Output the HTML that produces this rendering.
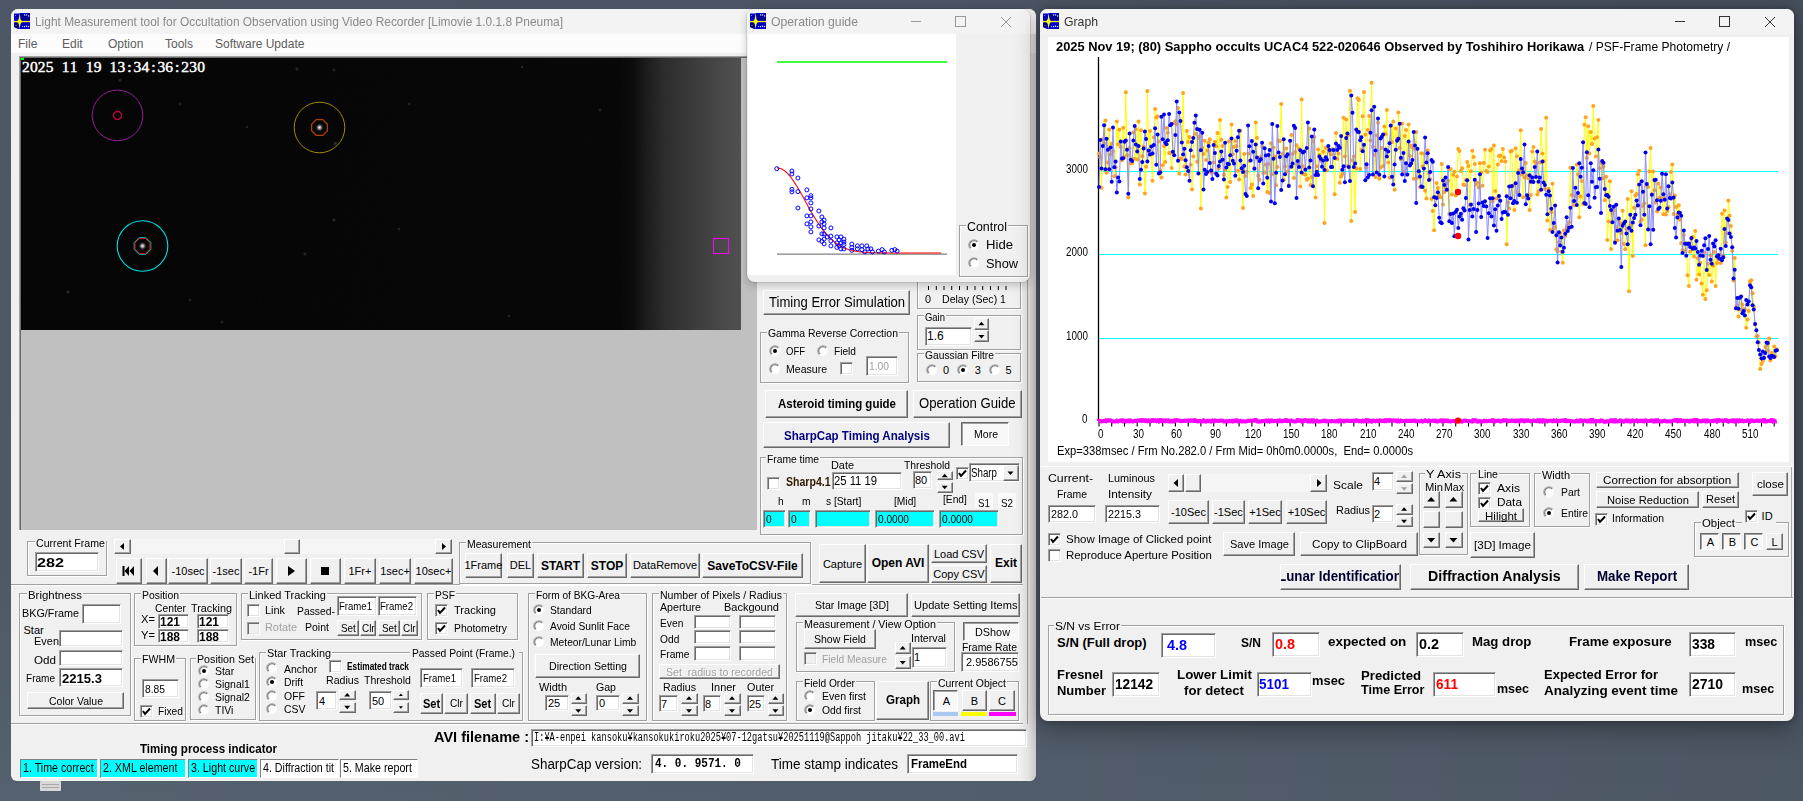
<!DOCTYPE html><html><head><meta charset="utf-8"><style>
html,body{margin:0;padding:0;}
body{width:1803px;height:801px;overflow:hidden;position:relative;background:#4a5562;font-family:"Liberation Sans",sans-serif;}
.t{position:absolute;white-space:nowrap;line-height:1;}
.b{position:absolute;white-space:nowrap;text-align:center;overflow:hidden;border-top:1px solid #fff;border-left:1px solid #fff;border-right:1px solid #696969;border-bottom:1px solid #696969;box-shadow:inset -1px -1px 0 #a0a0a0;}
.e{position:absolute;white-space:nowrap;overflow:hidden;border-top:1px solid #a0a0a0;border-left:1px solid #a0a0a0;border-right:1px solid #fff;border-bottom:1px solid #fff;box-shadow:inset 1px 1px 0 #696969;}
.g{position:absolute;border:1px solid #a0a0a0;box-shadow:1px 1px 0 #fff, inset 1px 1px 0 #fff;}
.r{position:absolute;width:12px;height:12px;border-radius:6px;background:#fff;box-shadow:inset 1px 1px 0 #a0a0a0, inset -1px -1px 0 #fff;border:0;}
.c{position:absolute;width:11px;height:11px;background:#fff;border-top:1px solid #a0a0a0;border-left:1px solid #a0a0a0;border-right:1px solid #fff;border-bottom:1px solid #fff;box-shadow:inset 1px 1px 0 #696969;}
</style></head><body>
<div style="position:absolute;left:0px;top:0px;width:1803px;height:801px;background:linear-gradient(90deg,rgba(255,255,255,0.02) 0%,rgba(0,0,0,0) 50%,rgba(0,0,0,0.07) 100%),linear-gradient(180deg,#4a5462 0%,#4b5563 70%,#535e6c 100%);"></div>
<div style="position:absolute;left:11px;top:9px;width:1025px;height:772px;background:#f0f0f0;border-radius:8px 8px 6px 6px;overflow:hidden;">
</div>
<div style="position:absolute;left:11px;top:9px;width:1025px;height:25px;background:#f3f3f3;border-radius:7px 7px 0 0;"></div>
<svg style="position:absolute;left:14px;top:13px" width="16" height="16" viewBox="0 0 16 16"><path d="M0 0.5 H5 L6 0 H16 V16 H4 L0 14 Z" fill="#0000c8"/><path d="M8 1 H16 V7 H8 Z" fill="#000090"/><path d="M0 10 H4 V15 L0 14 Z" fill="#000070"/><path d="M5.6 0 L6.4 5.8 Q6.8 7.8 9.2 8.5 Q6.8 9.2 6.4 11.2 L5.6 16 L4.8 11.2 Q4.4 9.2 2.0 8.5 Q4.4 7.8 4.8 5.8 Z" fill="#ffff00"/><circle cx="1.5" cy="2.5" r="0.5" fill="#aac"/><circle cx="2" cy="12.5" r="0.5" fill="#aac"/><circle cx="8.6" cy="13.6" r="0.6" fill="#ccf"/><rect x="0" y="7.9" width="16" height="1.3" fill="#ffff00"/><circle cx="10.6" cy="1.9" r="0.7" fill="#fff"/><circle cx="12.6" cy="1.9" r="0.7" fill="#fff"/><circle cx="14.6" cy="2.9" r="0.7" fill="#fff"/><circle cx="10.6" cy="13.6" r="0.7" fill="#fff"/><circle cx="12.6" cy="13.2" r="0.7" fill="#fff"/><circle cx="14.6" cy="13.6" r="0.7" fill="#fff"/></svg>
<div class="t" style="left:35.0px;top:15.0px;font-size:13px;color:#8a8a8a;font-family:'Liberation Sans',sans-serif;transform:scaleX(0.916);transform-origin:0 0;">Light Measurement tool for Occultation Observation using Video Recorder [Limovie 1.0.1.8 Pneuma]</div>
<div style="position:absolute;left:11px;top:34px;width:1025px;height:19px;background:#fcfcfc;"></div>
<div class="t" style="left:18.0px;top:38.0px;font-size:12px;color:#5c5c5c;font-family:'Liberation Sans',sans-serif;">File</div>
<div class="t" style="left:62.0px;top:38.0px;font-size:12px;color:#5c5c5c;font-family:'Liberation Sans',sans-serif;">Edit</div>
<div class="t" style="left:108.0px;top:38.0px;font-size:12px;color:#5c5c5c;font-family:'Liberation Sans',sans-serif;">Option</div>
<div class="t" style="left:165.0px;top:38.0px;font-size:12px;color:#5c5c5c;font-family:'Liberation Sans',sans-serif;">Tools</div>
<div class="t" style="left:215.0px;top:38.0px;font-size:12px;color:#5c5c5c;font-family:'Liberation Sans',sans-serif;">Software Update</div>
<div style="position:absolute;left:19px;top:56px;width:737px;height:473px;background:#c0c0c0;border-top:1px solid #a0a0a0;border-left:1px solid #a0a0a0;box-shadow:inset 1px 1px 0 #696969;"></div>
<div style="position:absolute;left:21px;top:58px;width:720px;height:272px;background:linear-gradient(90deg,#050505 0%,#050505 84%,#3a3a3a 89%,#4e4e4e 95%,#555 100%);"></div>
<div style="position:absolute;left:1019px;top:34px;width:17px;height:746px;background:linear-gradient(90deg,rgba(0,0,0,0) 0%,rgba(0,0,0,0.05) 50%,rgba(0,0,0,0.16) 100%);"></div>
<div style="position:absolute;left:1027px;top:53px;width:1px;height:671px;background:#a0a0a0;"></div>
<div style="position:absolute;left:40px;top:781px;width:21px;height:10px;background:#d8d8d8;border-radius:1px;"></div>
<div style="position:absolute;left:42px;top:784px;width:17px;height:1px;background:#a8a8a8;"></div>
<div style="position:absolute;left:42px;top:787px;width:17px;height:1px;background:#a8a8a8;"></div>
<div style="position:absolute;left:11px;top:584px;width:1012px;height:1px;background:#a0a0a0;box-shadow:0 1px 0 #fff;"></div>
<div style="position:absolute;left:11px;top:723px;width:1012px;height:1px;background:#a0a0a0;box-shadow:0 1px 0 #fff;"></div>
<div style="position:absolute;left:27px;top:541px;width:78px;height:33px;border:1px solid #a0a0a0;box-shadow:1px 1px 0 #fff, inset 1px 1px 0 #fff;"></div>
<div style="position:absolute;left:34.5px;top:540px;width:71.0px;height:3px;background:#f0f0f0;"></div>
<div class="t" style="left:35.5px;top:537.8px;font-size:11px;color:#000;font-family:'Liberation Sans',sans-serif;transform:scaleX(0.965);transform-origin:0 0;">Current Frame</div>
<div style="position:absolute;left:35px;top:552px;width:62px;height:18px;background:#fff;border-top:1px solid #a0a0a0;border-left:1px solid #a0a0a0;border-right:1px solid #fff;border-bottom:1px solid #fff;box-shadow:inset 1px 1px 0 #696969, inset -1px -1px 0 #e3e3e3;"></div>
<div class="t" style="left:37.0px;top:555.5px;font-size:13px;color:#000;font-family:'Liberation Sans',sans-serif;font-weight:bold;transform:scaleX(1.244);transform-origin:0 0;">282</div>
<div style="position:absolute;left:114px;top:539px;width:338px;height:15px;background:#f4f4f4;background:#f5f5f5;"></div>
<div style="position:absolute;left:114px;top:539px;width:15px;height:13px;background:#f0f0f0;border-top:1px solid #fff;border-left:1px solid #fff;border-right:1px solid #696969;border-bottom:1px solid #696969;box-shadow:inset -1px -1px 0 #a0a0a0;"></div>
<svg style="position:absolute;left:0;top:0;overflow:visible" width="1" height="1"><path d="M122.5 546.5 L122.5 546.5 L122.5 547.0 Z" fill="#000"/></svg>
<svg style="position:absolute;left:114px;top:539px" width="17" height="15"><path d="M6 7.5 L10 4 L10 11 Z" fill="#000"/></svg>
<div style="position:absolute;left:284px;top:539px;width:14px;height:13px;background:#f0f0f0;border-top:1px solid #fff;border-left:1px solid #fff;border-right:1px solid #696969;border-bottom:1px solid #696969;box-shadow:inset -1px -1px 0 #a0a0a0;"></div>
<div style="position:absolute;left:435px;top:539px;width:15px;height:13px;background:#f0f0f0;border-top:1px solid #fff;border-left:1px solid #fff;border-right:1px solid #696969;border-bottom:1px solid #696969;box-shadow:inset -1px -1px 0 #a0a0a0;"></div>
<svg style="position:absolute;left:435px;top:539px" width="17" height="15"><path d="M11 7.5 L7 4 L7 11 Z" fill="#000"/></svg>
<div style="position:absolute;left:116px;top:558px;width:24px;height:24px;background:#f0f0f0;border-top:1px solid #fff;border-left:1px solid #fff;border-right:1px solid #696969;border-bottom:1px solid #696969;box-shadow:inset -1px -1px 0 #a0a0a0;"></div>
<div style="position:absolute;left:146px;top:558px;width:19px;height:24px;background:#f0f0f0;border-top:1px solid #fff;border-left:1px solid #fff;border-right:1px solid #696969;border-bottom:1px solid #696969;box-shadow:inset -1px -1px 0 #a0a0a0;"></div>
<div style="position:absolute;left:168px;top:558px;width:38px;height:24px;background:#f0f0f0;border-top:1px solid #fff;border-left:1px solid #fff;border-right:1px solid #696969;border-bottom:1px solid #696969;box-shadow:inset -1px -1px 0 #a0a0a0;"></div>
<div class="t" style="left:171.5px;top:566.0px;font-size:11px;color:#000;font-family:'Liberation Sans',sans-serif;">-10sec</div>
<div style="position:absolute;left:210px;top:558px;width:30px;height:24px;background:#f0f0f0;border-top:1px solid #fff;border-left:1px solid #fff;border-right:1px solid #696969;border-bottom:1px solid #696969;box-shadow:inset -1px -1px 0 #a0a0a0;"></div>
<div class="t" style="left:212.5px;top:566.0px;font-size:11px;color:#000;font-family:'Liberation Sans',sans-serif;">-1sec</div>
<div style="position:absolute;left:244px;top:558px;width:27px;height:24px;background:#f0f0f0;border-top:1px solid #fff;border-left:1px solid #fff;border-right:1px solid #696969;border-bottom:1px solid #696969;box-shadow:inset -1px -1px 0 #a0a0a0;"></div>
<div class="t" style="left:248.4px;top:566.0px;font-size:11px;color:#000;font-family:'Liberation Sans',sans-serif;">-1Fr</div>
<div style="position:absolute;left:276px;top:558px;width:29px;height:24px;background:#f0f0f0;border-top:1px solid #fff;border-left:1px solid #fff;border-right:1px solid #696969;border-bottom:1px solid #696969;box-shadow:inset -1px -1px 0 #a0a0a0;"></div>
<div style="position:absolute;left:310px;top:558px;width:29px;height:24px;background:#f0f0f0;border-top:1px solid #fff;border-left:1px solid #fff;border-right:1px solid #696969;border-bottom:1px solid #696969;box-shadow:inset -1px -1px 0 #a0a0a0;"></div>
<div style="position:absolute;left:344px;top:558px;width:30px;height:24px;background:#f0f0f0;border-top:1px solid #fff;border-left:1px solid #fff;border-right:1px solid #696969;border-bottom:1px solid #696969;box-shadow:inset -1px -1px 0 #a0a0a0;"></div>
<div class="t" style="left:348.5px;top:566.0px;font-size:11px;color:#000;font-family:'Liberation Sans',sans-serif;">1Fr+</div>
<div style="position:absolute;left:379px;top:558px;width:30px;height:24px;background:#f0f0f0;border-top:1px solid #fff;border-left:1px solid #fff;border-right:1px solid #696969;border-bottom:1px solid #696969;box-shadow:inset -1px -1px 0 #a0a0a0;"></div>
<div class="t" style="left:380.2px;top:566.0px;font-size:11px;color:#000;font-family:'Liberation Sans',sans-serif;">1sec+</div>
<div style="position:absolute;left:414px;top:558px;width:37px;height:24px;background:#f0f0f0;border-top:1px solid #fff;border-left:1px solid #fff;border-right:1px solid #696969;border-bottom:1px solid #696969;box-shadow:inset -1px -1px 0 #a0a0a0;"></div>
<div class="t" style="left:415.6px;top:566.0px;font-size:11px;color:#000;font-family:'Liberation Sans',sans-serif;">10sec+</div>
<svg style="position:absolute;left:116px;top:558px" width="26" height="26"><rect x="6.5" y="8" width="2" height="10" fill="#000"/><path d="M13 8 L8.5 13 L13 18 Z M18 8 L13.5 13 L18 18 Z" fill="#000"/></svg>
<svg style="position:absolute;left:146px;top:558px" width="21" height="26"><path d="M12 8 L7 13 L12 18 Z" fill="#000"/></svg>
<svg style="position:absolute;left:276px;top:558px" width="31" height="26"><path d="M12 8 L19 13 L12 18 Z" fill="#000"/></svg>
<svg style="position:absolute;left:309px;top:558px" width="32" height="26"><rect x="12" y="9" width="8" height="8" fill="#000"/></svg>
<div style="position:absolute;left:459px;top:542px;width:350px;height:40px;border:1px solid #a0a0a0;box-shadow:1px 1px 0 #fff, inset 1px 1px 0 #fff;"></div>
<div style="position:absolute;left:466.0px;top:541px;width:66.0px;height:3px;background:#f0f0f0;"></div>
<div class="t" style="left:467.0px;top:539.0px;font-size:11px;color:#000;font-family:'Liberation Sans',sans-serif;transform:scaleX(0.951);transform-origin:0 0;">Measurement</div>
<div style="position:absolute;left:465px;top:553px;width:35px;height:23px;background:#f0f0f0;border-top:1px solid #fff;border-left:1px solid #fff;border-right:1px solid #696969;border-bottom:1px solid #696969;box-shadow:inset -1px -1px 0 #a0a0a0;"></div>
<div class="t" style="left:464.5px;top:560.0px;font-size:11px;color:#000;font-family:'Liberation Sans',sans-serif;">1Frame</div>
<div style="position:absolute;left:507px;top:553px;width:25px;height:23px;background:#f0f0f0;border-top:1px solid #fff;border-left:1px solid #fff;border-right:1px solid #696969;border-bottom:1px solid #696969;box-shadow:inset -1px -1px 0 #a0a0a0;"></div>
<div class="t" style="left:509.8px;top:560.0px;font-size:11px;color:#000;font-family:'Liberation Sans',sans-serif;">DEL</div>
<div style="position:absolute;left:537px;top:553px;width:45px;height:23px;background:#f0f0f0;border-top:1px solid #fff;border-left:1px solid #fff;border-right:1px solid #696969;border-bottom:1px solid #696969;box-shadow:inset -1px -1px 0 #a0a0a0;"></div>
<div class="t" style="left:540.9px;top:559.5px;font-size:12px;color:#000;font-family:'Liberation Sans',sans-serif;font-weight:bold;">START</div>
<div style="position:absolute;left:587px;top:553px;width:38px;height:23px;background:#f0f0f0;border-top:1px solid #fff;border-left:1px solid #fff;border-right:1px solid #696969;border-bottom:1px solid #696969;box-shadow:inset -1px -1px 0 #a0a0a0;"></div>
<div class="t" style="left:590.8px;top:559.5px;font-size:12px;color:#000;font-family:'Liberation Sans',sans-serif;font-weight:bold;">STOP</div>
<div style="position:absolute;left:630px;top:553px;width:68px;height:23px;background:#f0f0f0;border-top:1px solid #fff;border-left:1px solid #fff;border-right:1px solid #696969;border-bottom:1px solid #696969;box-shadow:inset -1px -1px 0 #a0a0a0;"></div>
<div class="t" style="left:632.9px;top:560.0px;font-size:11px;color:#000;font-family:'Liberation Sans',sans-serif;">DataRemove</div>
<div style="position:absolute;left:702px;top:553px;width:99px;height:23px;background:#f0f0f0;border-top:1px solid #fff;border-left:1px solid #fff;border-right:1px solid #696969;border-bottom:1px solid #696969;box-shadow:inset -1px -1px 0 #a0a0a0;"></div>
<div class="t" style="left:707.3px;top:559.5px;font-size:12px;color:#000;font-family:'Liberation Sans',sans-serif;font-weight:bold;">SaveToCSV-File</div>
<div style="position:absolute;left:819px;top:544px;width:45px;height:37px;background:#f0f0f0;border-top:1px solid #fff;border-left:1px solid #fff;border-right:1px solid #696969;border-bottom:1px solid #696969;box-shadow:inset -1px -1px 0 #a0a0a0;"></div>
<div class="t" style="left:822.9px;top:558.5px;font-size:11px;color:#000;font-family:'Liberation Sans',sans-serif;">Capture</div>
<div style="position:absolute;left:867px;top:544px;width:60px;height:37px;background:#f0f0f0;border-top:1px solid #fff;border-left:1px solid #fff;border-right:1px solid #696969;border-bottom:1px solid #696969;box-shadow:inset -1px -1px 0 #a0a0a0;"></div>
<div class="t" style="left:871.7px;top:557.0px;font-size:12px;color:#000;font-family:'Liberation Sans',sans-serif;font-weight:bold;">Open AVI</div>
<div style="position:absolute;left:931px;top:544px;width:54px;height:17px;background:#f0f0f0;border-top:1px solid #fff;border-left:1px solid #fff;border-right:1px solid #696969;border-bottom:1px solid #696969;box-shadow:inset -1px -1px 0 #a0a0a0;"></div>
<div class="t" style="left:933.9px;top:548.5px;font-size:11px;color:#000;font-family:'Liberation Sans',sans-serif;">Load CSV</div>
<div style="position:absolute;left:931px;top:565px;width:54px;height:16px;background:#f0f0f0;border-top:1px solid #fff;border-left:1px solid #fff;border-right:1px solid #696969;border-bottom:1px solid #696969;box-shadow:inset -1px -1px 0 #a0a0a0;"></div>
<div class="t" style="left:933.3px;top:568.5px;font-size:11px;color:#000;font-family:'Liberation Sans',sans-serif;">Copy CSV</div>
<div style="position:absolute;left:990px;top:544px;width:30px;height:37px;background:#f0f0f0;border-top:1px solid #fff;border-left:1px solid #fff;border-right:1px solid #696969;border-bottom:1px solid #696969;box-shadow:inset -1px -1px 0 #a0a0a0;"></div>
<div class="t" style="left:995.0px;top:557.0px;font-size:12px;color:#000;font-family:'Liberation Sans',sans-serif;font-weight:bold;">Exit</div>
<div style="position:absolute;left:19px;top:593px;width:110px;height:121px;border:1px solid #a0a0a0;box-shadow:1px 1px 0 #fff, inset 1px 1px 0 #fff;"></div>
<div style="position:absolute;left:26.7px;top:592px;width:56.0px;height:3px;background:#f0f0f0;"></div>
<div class="t" style="left:27.7px;top:590.0px;font-size:11px;color:#000;font-family:'Liberation Sans',sans-serif;transform:scaleX(1.038);transform-origin:0 0;">Brightness</div>
<div class="t" style="left:21.5px;top:608.4px;font-size:11px;color:#000;font-family:'Liberation Sans',sans-serif;transform:scaleX(0.981);transform-origin:0 0;">BKG/Frame</div>
<div style="position:absolute;left:82px;top:604px;width:37px;height:18px;background:#fff;border-top:1px solid #a0a0a0;border-left:1px solid #a0a0a0;border-right:1px solid #fff;border-bottom:1px solid #fff;box-shadow:inset 1px 1px 0 #696969, inset -1px -1px 0 #e3e3e3;"></div>
<div class="t" style="left:23.5px;top:624.5px;font-size:11px;color:#000;font-family:'Liberation Sans',sans-serif;">Star</div>
<div class="t" style="left:33.6px;top:636.0px;font-size:11px;color:#000;font-family:'Liberation Sans',sans-serif;transform:scaleX(0.996);transform-origin:0 0;">Even</div>
<div style="position:absolute;left:59px;top:630px;width:62px;height:15px;background:#fff;border-top:1px solid #a0a0a0;border-left:1px solid #a0a0a0;border-right:1px solid #fff;border-bottom:1px solid #fff;box-shadow:inset 1px 1px 0 #696969, inset -1px -1px 0 #e3e3e3;"></div>
<div class="t" style="left:33.6px;top:654.8px;font-size:11px;color:#000;font-family:'Liberation Sans',sans-serif;transform:scaleX(1.057);transform-origin:0 0;">Odd</div>
<div style="position:absolute;left:59px;top:650px;width:62px;height:14px;background:#fff;border-top:1px solid #a0a0a0;border-left:1px solid #a0a0a0;border-right:1px solid #fff;border-bottom:1px solid #fff;box-shadow:inset 1px 1px 0 #696969, inset -1px -1px 0 #e3e3e3;"></div>
<div class="t" style="left:25.5px;top:673.3px;font-size:11px;color:#000;font-family:'Liberation Sans',sans-serif;transform:scaleX(0.912);transform-origin:0 0;">Frame</div>
<div style="position:absolute;left:59px;top:668px;width:62px;height:17px;background:#fff;border-top:1px solid #a0a0a0;border-left:1px solid #a0a0a0;border-right:1px solid #fff;border-bottom:1px solid #fff;box-shadow:inset 1px 1px 0 #696969, inset -1px -1px 0 #e3e3e3;"></div>
<div class="t" style="left:62.0px;top:672.5px;font-size:12px;color:#000;font-family:'Liberation Sans',sans-serif;font-weight:bold;transform:scaleX(1.090);transform-origin:0 0;">2215.3</div>
<div style="position:absolute;left:27px;top:692px;width:95px;height:15px;background:#f0f0f0;border-top:1px solid #fff;border-left:1px solid #fff;border-right:1px solid #696969;border-bottom:1px solid #696969;box-shadow:inset -1px -1px 0 #a0a0a0;"></div>
<div class="t" style="left:48.5px;top:695.5px;font-size:11px;color:#000;font-family:'Liberation Sans',sans-serif;transform:scaleX(0.953);transform-origin:0 0;">Color Value</div>
<div style="position:absolute;left:134px;top:593px;width:101px;height:51px;border:1px solid #a0a0a0;box-shadow:1px 1px 0 #fff, inset 1px 1px 0 #fff;"></div>
<div style="position:absolute;left:140.5px;top:592px;width:39.0px;height:3px;background:#f0f0f0;"></div>
<div class="t" style="left:141.5px;top:590.0px;font-size:11px;color:#000;font-family:'Liberation Sans',sans-serif;transform:scaleX(0.945);transform-origin:0 0;">Position</div>
<div class="t" style="left:155.3px;top:602.5px;font-size:11px;color:#000;font-family:'Liberation Sans',sans-serif;transform:scaleX(0.939);transform-origin:0 0;">Center</div>
<div class="t" style="left:191.2px;top:602.5px;font-size:11px;color:#000;font-family:'Liberation Sans',sans-serif;transform:scaleX(0.981);transform-origin:0 0;">Tracking</div>
<div class="t" style="left:140.6px;top:614.3px;font-size:11px;color:#000;font-family:'Liberation Sans',sans-serif;transform:scaleX(1.017);transform-origin:0 0;">X=</div>
<div class="t" style="left:140.6px;top:629.5px;font-size:11px;color:#000;font-family:'Liberation Sans',sans-serif;transform:scaleX(1.017);transform-origin:0 0;">Y=</div>
<div style="position:absolute;left:158px;top:614px;width:29px;height:13px;background:#fff;border-top:1px solid #a0a0a0;border-left:1px solid #a0a0a0;border-right:1px solid #fff;border-bottom:1px solid #fff;box-shadow:inset 1px 1px 0 #696969, inset -1px -1px 0 #e3e3e3;"></div>
<div class="t" style="left:160.0px;top:616.0px;font-size:12px;color:#000;font-family:'Liberation Sans',sans-serif;font-weight:bold;transform:scaleX(0.999);transform-origin:0 0;">121</div>
<div style="position:absolute;left:197px;top:614px;width:30px;height:13px;background:#fff;border-top:1px solid #a0a0a0;border-left:1px solid #a0a0a0;border-right:1px solid #fff;border-bottom:1px solid #fff;box-shadow:inset 1px 1px 0 #696969, inset -1px -1px 0 #e3e3e3;"></div>
<div class="t" style="left:199.0px;top:616.0px;font-size:12px;color:#000;font-family:'Liberation Sans',sans-serif;font-weight:bold;transform:scaleX(0.999);transform-origin:0 0;">121</div>
<div style="position:absolute;left:158px;top:629px;width:29px;height:12px;background:#fff;border-top:1px solid #a0a0a0;border-left:1px solid #a0a0a0;border-right:1px solid #fff;border-bottom:1px solid #fff;box-shadow:inset 1px 1px 0 #696969, inset -1px -1px 0 #e3e3e3;"></div>
<div class="t" style="left:160.0px;top:630.5px;font-size:12px;color:#000;font-family:'Liberation Sans',sans-serif;font-weight:bold;transform:scaleX(0.999);transform-origin:0 0;">188</div>
<div style="position:absolute;left:197px;top:629px;width:30px;height:12px;background:#fff;border-top:1px solid #a0a0a0;border-left:1px solid #a0a0a0;border-right:1px solid #fff;border-bottom:1px solid #fff;box-shadow:inset 1px 1px 0 #696969, inset -1px -1px 0 #e3e3e3;"></div>
<div class="t" style="left:199.0px;top:630.5px;font-size:12px;color:#000;font-family:'Liberation Sans',sans-serif;font-weight:bold;transform:scaleX(0.999);transform-origin:0 0;">188</div>
<div style="position:absolute;left:134px;top:658px;width:50px;height:61px;border:1px solid #a0a0a0;box-shadow:1px 1px 0 #fff, inset 1px 1px 0 #fff;"></div>
<div style="position:absolute;left:140.5px;top:657px;width:35.0px;height:3px;background:#f0f0f0;"></div>
<div class="t" style="left:141.5px;top:654.0px;font-size:11px;color:#000;font-family:'Liberation Sans',sans-serif;transform:scaleX(0.965);transform-origin:0 0;">FWHM</div>
<div style="position:absolute;left:142px;top:679px;width:35px;height:17px;background:#fff;border-top:1px solid #a0a0a0;border-left:1px solid #a0a0a0;border-right:1px solid #fff;border-bottom:1px solid #fff;box-shadow:inset 1px 1px 0 #696969, inset -1px -1px 0 #e3e3e3;"></div>
<div class="t" style="left:145.0px;top:684.0px;font-size:11px;color:#000;font-family:'Liberation Sans',sans-serif;transform:scaleX(0.933);transform-origin:0 0;">8.85</div>
<div style="position:absolute;left:140px;top:705px;width:11px;height:11px;background:#fff;border-top:1px solid #a0a0a0;border-left:1px solid #a0a0a0;border-right:1px solid #fff;border-bottom:1px solid #fff;box-shadow:inset 1px 1px 0 #696969, inset -1px -1px 0 #e3e3e3;"></div>
<svg style="position:absolute;left:140px;top:705px" width="13" height="13"><path d="M3 6 L5 9 L10 3.5" stroke="#000" stroke-width="2" fill="none"/></svg>
<div class="t" style="left:158.0px;top:706.0px;font-size:11px;color:#000;font-family:'Liberation Sans',sans-serif;transform:scaleX(0.929);transform-origin:0 0;">Fixed</div>
<div style="position:absolute;left:190px;top:658px;width:64px;height:60px;border:1px solid #a0a0a0;box-shadow:1px 1px 0 #fff, inset 1px 1px 0 #fff;"></div>
<div style="position:absolute;left:196.4px;top:657px;width:59.0px;height:3px;background:#f0f0f0;"></div>
<div class="t" style="left:197.4px;top:654.0px;font-size:11px;color:#000;font-family:'Liberation Sans',sans-serif;transform:scaleX(0.970);transform-origin:0 0;">Position Set</div>
<svg style="position:absolute;left:198px;top:665px" width="12" height="12"><circle cx="6" cy="6" r="5.2" fill="#fff" stroke="#f4f4f4" stroke-width="1"/><path d="M2.3 9.7 A5.2 5.2 0 0 1 9.7 2.3" stroke="#a0a0a0" stroke-width="1.1" fill="none"/><path d="M3.0 9.0 A4.2 4.2 0 0 1 9.0 3.0" stroke="#696969" stroke-width="1" fill="none"/><circle cx="6" cy="6" r="2" fill="#000"/></svg>
<div class="t" style="left:215.3px;top:666.0px;font-size:11px;color:#000;font-family:'Liberation Sans',sans-serif;transform:scaleX(0.950);transform-origin:0 0;">Star</div>
<svg style="position:absolute;left:198px;top:678px" width="12" height="12"><circle cx="6" cy="6" r="5.2" fill="#fff" stroke="#f4f4f4" stroke-width="1"/><path d="M2.3 9.7 A5.2 5.2 0 0 1 9.7 2.3" stroke="#a0a0a0" stroke-width="1.1" fill="none"/><path d="M3.0 9.0 A4.2 4.2 0 0 1 9.0 3.0" stroke="#696969" stroke-width="1" fill="none"/></svg>
<div class="t" style="left:215.3px;top:678.7px;font-size:11px;color:#000;font-family:'Liberation Sans',sans-serif;transform:scaleX(0.950);transform-origin:0 0;">Signal1</div>
<svg style="position:absolute;left:198px;top:691px" width="12" height="12"><circle cx="6" cy="6" r="5.2" fill="#fff" stroke="#f4f4f4" stroke-width="1"/><path d="M2.3 9.7 A5.2 5.2 0 0 1 9.7 2.3" stroke="#a0a0a0" stroke-width="1.1" fill="none"/><path d="M3.0 9.0 A4.2 4.2 0 0 1 9.0 3.0" stroke="#696969" stroke-width="1" fill="none"/></svg>
<div class="t" style="left:215.3px;top:692.2px;font-size:11px;color:#000;font-family:'Liberation Sans',sans-serif;transform:scaleX(0.950);transform-origin:0 0;">Signal2</div>
<svg style="position:absolute;left:198px;top:704px" width="12" height="12"><circle cx="6" cy="6" r="5.2" fill="#fff" stroke="#f4f4f4" stroke-width="1"/><path d="M2.3 9.7 A5.2 5.2 0 0 1 9.7 2.3" stroke="#a0a0a0" stroke-width="1.1" fill="none"/><path d="M3.0 9.0 A4.2 4.2 0 0 1 9.0 3.0" stroke="#696969" stroke-width="1" fill="none"/></svg>
<div class="t" style="left:215.3px;top:704.8px;font-size:11px;color:#000;font-family:'Liberation Sans',sans-serif;transform:scaleX(0.950);transform-origin:0 0;">TIVi</div>
<div style="position:absolute;left:241px;top:593px;width:179px;height:45px;border:1px solid #a0a0a0;box-shadow:1px 1px 0 #fff, inset 1px 1px 0 #fff;"></div>
<div style="position:absolute;left:248.3px;top:592px;width:79.0px;height:3px;background:#f0f0f0;"></div>
<div class="t" style="left:249.3px;top:590.4px;font-size:11px;color:#000;font-family:'Liberation Sans',sans-serif;transform:scaleX(0.999);transform-origin:0 0;">Linked Tracking</div>
<div style="position:absolute;left:247px;top:604px;width:11px;height:11px;background:#fff;border-top:1px solid #a0a0a0;border-left:1px solid #a0a0a0;border-right:1px solid #fff;border-bottom:1px solid #fff;box-shadow:inset 1px 1px 0 #696969, inset -1px -1px 0 #e3e3e3;"></div>
<div class="t" style="left:265.3px;top:605.0px;font-size:11px;color:#000;font-family:'Liberation Sans',sans-serif;transform:scaleX(0.991);transform-origin:0 0;">Link</div>
<div class="t" style="left:297.3px;top:606.0px;font-size:11px;color:#000;font-family:'Liberation Sans',sans-serif;transform:scaleX(0.941);transform-origin:0 0;">Passed-</div>
<div style="position:absolute;left:337px;top:596px;width:38px;height:18px;background:#fff;border-top:1px solid #a0a0a0;border-left:1px solid #a0a0a0;border-right:1px solid #fff;border-bottom:1px solid #fff;box-shadow:inset 1px 1px 0 #696969, inset -1px -1px 0 #e3e3e3;"></div>
<div class="t" style="left:339.0px;top:600.5px;font-size:11px;color:#000;font-family:'Liberation Sans',sans-serif;transform:scaleX(0.871);transform-origin:0 0;">Frame1</div>
<div style="position:absolute;left:378px;top:596px;width:37px;height:18px;background:#fff;border-top:1px solid #a0a0a0;border-left:1px solid #a0a0a0;border-right:1px solid #fff;border-bottom:1px solid #fff;box-shadow:inset 1px 1px 0 #696969, inset -1px -1px 0 #e3e3e3;"></div>
<div class="t" style="left:380.0px;top:600.5px;font-size:11px;color:#000;font-family:'Liberation Sans',sans-serif;transform:scaleX(0.871);transform-origin:0 0;">Frame2</div>
<div style="position:absolute;left:247px;top:622px;width:11px;height:11px;background:#f0f0f0;border-top:1px solid #a0a0a0;border-left:1px solid #a0a0a0;border-right:1px solid #fff;border-bottom:1px solid #fff;box-shadow:inset 1px 1px 0 #696969, inset -1px -1px 0 #e3e3e3;"></div>
<div class="t" style="left:265.3px;top:622.4px;font-size:11px;color:#a0a0a0;font-family:'Liberation Sans',sans-serif;transform:scaleX(0.987);transform-origin:0 0;">Rotate</div>
<div class="t" style="left:305.4px;top:621.9px;font-size:11px;color:#000;font-family:'Liberation Sans',sans-serif;transform:scaleX(0.956);transform-origin:0 0;">Point</div>
<div style="position:absolute;left:337px;top:620px;width:20px;height:14px;background:#f0f0f0;border-top:1px solid #fff;border-left:1px solid #fff;border-right:1px solid #696969;border-bottom:1px solid #696969;box-shadow:inset -1px -1px 0 #a0a0a0;"></div>
<div class="t" style="left:340.6px;top:623.0px;font-size:11px;color:#000;font-family:'Liberation Sans',sans-serif;transform:scaleX(0.900);transform-origin:0 0;">Set</div>
<div style="position:absolute;left:360px;top:620px;width:14px;height:14px;background:#f0f0f0;border-top:1px solid #fff;border-left:1px solid #fff;border-right:1px solid #696969;border-bottom:1px solid #696969;box-shadow:inset -1px -1px 0 #a0a0a0;"></div>
<div class="t" style="left:361.7px;top:623.0px;font-size:11px;color:#000;font-family:'Liberation Sans',sans-serif;transform:scaleX(0.900);transform-origin:0 0;">Clr</div>
<div style="position:absolute;left:378px;top:620px;width:20px;height:14px;background:#f0f0f0;border-top:1px solid #fff;border-left:1px solid #fff;border-right:1px solid #696969;border-bottom:1px solid #696969;box-shadow:inset -1px -1px 0 #a0a0a0;"></div>
<div class="t" style="left:381.6px;top:623.0px;font-size:11px;color:#000;font-family:'Liberation Sans',sans-serif;transform:scaleX(0.900);transform-origin:0 0;">Set</div>
<div style="position:absolute;left:401px;top:620px;width:15px;height:14px;background:#f0f0f0;border-top:1px solid #fff;border-left:1px solid #fff;border-right:1px solid #696969;border-bottom:1px solid #696969;box-shadow:inset -1px -1px 0 #a0a0a0;"></div>
<div class="t" style="left:403.2px;top:623.0px;font-size:11px;color:#000;font-family:'Liberation Sans',sans-serif;transform:scaleX(0.900);transform-origin:0 0;">Clr</div>
<div style="position:absolute;left:427px;top:593px;width:89px;height:45px;border:1px solid #a0a0a0;box-shadow:1px 1px 0 #fff, inset 1px 1px 0 #fff;"></div>
<div style="position:absolute;left:434.0px;top:592px;width:22.0px;height:3px;background:#f0f0f0;"></div>
<div class="t" style="left:435.0px;top:590.4px;font-size:11px;color:#000;font-family:'Liberation Sans',sans-serif;transform:scaleX(0.934);transform-origin:0 0;">PSF</div>
<div style="position:absolute;left:435px;top:604px;width:11px;height:11px;background:#fff;border-top:1px solid #a0a0a0;border-left:1px solid #a0a0a0;border-right:1px solid #fff;border-bottom:1px solid #fff;box-shadow:inset 1px 1px 0 #696969, inset -1px -1px 0 #e3e3e3;"></div>
<svg style="position:absolute;left:435px;top:604px" width="13" height="13"><path d="M3 6 L5 9 L10 3.5" stroke="#000" stroke-width="2" fill="none"/></svg>
<div class="t" style="left:454.0px;top:604.5px;font-size:11px;color:#000;font-family:'Liberation Sans',sans-serif;transform:scaleX(1.005);transform-origin:0 0;">Tracking</div>
<div style="position:absolute;left:435px;top:622px;width:11px;height:11px;background:#fff;border-top:1px solid #a0a0a0;border-left:1px solid #a0a0a0;border-right:1px solid #fff;border-bottom:1px solid #fff;box-shadow:inset 1px 1px 0 #696969, inset -1px -1px 0 #e3e3e3;"></div>
<svg style="position:absolute;left:435px;top:622px" width="13" height="13"><path d="M3 6 L5 9 L10 3.5" stroke="#000" stroke-width="2" fill="none"/></svg>
<div class="t" style="left:454.0px;top:622.5px;font-size:11px;color:#000;font-family:'Liberation Sans',sans-serif;transform:scaleX(0.942);transform-origin:0 0;">Photometry</div>
<div style="position:absolute;left:259px;top:652px;width:262px;height:67px;border:1px solid #a0a0a0;box-shadow:1px 1px 0 #fff, inset 1px 1px 0 #fff;"></div>
<div style="position:absolute;left:266.0px;top:651px;width:66.0px;height:3px;background:#f0f0f0;"></div>
<div class="t" style="left:267.0px;top:648.0px;font-size:11px;color:#000;font-family:'Liberation Sans',sans-serif;transform:scaleX(0.987);transform-origin:0 0;">Star Tracking</div>
<div style="position:absolute;left:410px;top:650px;width:109px;height:4px;background:#f0f0f0"></div>
<div class="t" style="left:411.5px;top:648.0px;font-size:11px;color:#000;font-family:'Liberation Sans',sans-serif;transform:scaleX(0.936);transform-origin:0 0;">Passed Point (Frame.)</div>
<svg style="position:absolute;left:266px;top:662px" width="12" height="12"><circle cx="6" cy="6" r="5.2" fill="#fff" stroke="#f4f4f4" stroke-width="1"/><path d="M2.3 9.7 A5.2 5.2 0 0 1 9.7 2.3" stroke="#a0a0a0" stroke-width="1.1" fill="none"/><path d="M3.0 9.0 A4.2 4.2 0 0 1 9.0 3.0" stroke="#696969" stroke-width="1" fill="none"/></svg>
<div class="t" style="left:283.5px;top:663.5px;font-size:11px;color:#000;font-family:'Liberation Sans',sans-serif;transform:scaleX(0.950);transform-origin:0 0;">Anchor</div>
<svg style="position:absolute;left:266px;top:676px" width="12" height="12"><circle cx="6" cy="6" r="5.2" fill="#fff" stroke="#f4f4f4" stroke-width="1"/><path d="M2.3 9.7 A5.2 5.2 0 0 1 9.7 2.3" stroke="#a0a0a0" stroke-width="1.1" fill="none"/><path d="M3.0 9.0 A4.2 4.2 0 0 1 9.0 3.0" stroke="#696969" stroke-width="1" fill="none"/><circle cx="6" cy="6" r="2" fill="#000"/></svg>
<div class="t" style="left:283.5px;top:677.0px;font-size:11px;color:#000;font-family:'Liberation Sans',sans-serif;transform:scaleX(0.950);transform-origin:0 0;">Drift</div>
<svg style="position:absolute;left:266px;top:690px" width="12" height="12"><circle cx="6" cy="6" r="5.2" fill="#fff" stroke="#f4f4f4" stroke-width="1"/><path d="M2.3 9.7 A5.2 5.2 0 0 1 9.7 2.3" stroke="#a0a0a0" stroke-width="1.1" fill="none"/><path d="M3.0 9.0 A4.2 4.2 0 0 1 9.0 3.0" stroke="#696969" stroke-width="1" fill="none"/></svg>
<div class="t" style="left:283.5px;top:690.5px;font-size:11px;color:#000;font-family:'Liberation Sans',sans-serif;transform:scaleX(0.950);transform-origin:0 0;">OFF</div>
<svg style="position:absolute;left:266px;top:703px" width="12" height="12"><circle cx="6" cy="6" r="5.2" fill="#fff" stroke="#f4f4f4" stroke-width="1"/><path d="M2.3 9.7 A5.2 5.2 0 0 1 9.7 2.3" stroke="#a0a0a0" stroke-width="1.1" fill="none"/><path d="M3.0 9.0 A4.2 4.2 0 0 1 9.0 3.0" stroke="#696969" stroke-width="1" fill="none"/></svg>
<div class="t" style="left:283.5px;top:704.0px;font-size:11px;color:#000;font-family:'Liberation Sans',sans-serif;transform:scaleX(0.950);transform-origin:0 0;">CSV</div>
<div style="position:absolute;left:329px;top:660px;width:11px;height:11px;background:#fff;border-top:1px solid #a0a0a0;border-left:1px solid #a0a0a0;border-right:1px solid #fff;border-bottom:1px solid #fff;box-shadow:inset 1px 1px 0 #696969, inset -1px -1px 0 #e3e3e3;"></div>
<div class="t" style="left:347.0px;top:662.0px;font-size:10px;color:#000;font-family:'Liberation Sans',sans-serif;font-weight:bold;transform:scaleX(0.832);transform-origin:0 0;">Estimated track</div>
<div class="t" style="left:325.6px;top:675.0px;font-size:11px;color:#000;font-family:'Liberation Sans',sans-serif;transform:scaleX(0.964);transform-origin:0 0;">Radius</div>
<div class="t" style="left:364.4px;top:675.0px;font-size:11px;color:#000;font-family:'Liberation Sans',sans-serif;transform:scaleX(0.960);transform-origin:0 0;">Threshold</div>
<div style="position:absolute;left:316px;top:691px;width:19px;height:17px;background:#fff;border-top:1px solid #a0a0a0;border-left:1px solid #a0a0a0;border-right:1px solid #fff;border-bottom:1px solid #fff;box-shadow:inset 1px 1px 0 #696969, inset -1px -1px 0 #e3e3e3;"></div>
<div class="t" style="left:319.0px;top:696.0px;font-size:11px;color:#000;font-family:'Liberation Sans',sans-serif;">4</div>
<div style="position:absolute;left:339px;top:690px;width:15px;height:8px;background:#f0f0f0;border-top:1px solid #fff;border-left:1px solid #fff;border-right:1px solid #696969;border-bottom:1px solid #696969;box-shadow:inset -1px -1px 0 #a0a0a0;"></div>
<div style="position:absolute;left:339px;top:702px;width:15px;height:9px;background:#f0f0f0;border-top:1px solid #fff;border-left:1px solid #fff;border-right:1px solid #696969;border-bottom:1px solid #696969;box-shadow:inset -1px -1px 0 #a0a0a0;"></div>
<svg style="position:absolute;left:0;top:0;overflow:visible" width="1" height="1"><path d="M344.2 696.5 L350.2 696.5 L347.2 693.0 Z" fill="#000"/></svg>
<svg style="position:absolute;left:0;top:0;overflow:visible" width="1" height="1"><path d="M344.2 705.75 L350.2 705.75 L347.2 709.25 Z" fill="#000"/></svg>
<div style="position:absolute;left:369px;top:691px;width:21px;height:17px;background:#fff;border-top:1px solid #a0a0a0;border-left:1px solid #a0a0a0;border-right:1px solid #fff;border-bottom:1px solid #fff;box-shadow:inset 1px 1px 0 #696969, inset -1px -1px 0 #e3e3e3;"></div>
<div class="t" style="left:372.0px;top:696.0px;font-size:11px;color:#000;font-family:'Liberation Sans',sans-serif;">50</div>
<div style="position:absolute;left:393px;top:690px;width:14px;height:8px;background:#f0f0f0;border-top:1px solid #fff;border-left:1px solid #fff;border-right:1px solid #696969;border-bottom:1px solid #696969;box-shadow:inset -1px -1px 0 #a0a0a0;"></div>
<div style="position:absolute;left:393px;top:702px;width:14px;height:9px;background:#f0f0f0;border-top:1px solid #fff;border-left:1px solid #fff;border-right:1px solid #696969;border-bottom:1px solid #696969;box-shadow:inset -1px -1px 0 #a0a0a0;"></div>
<svg style="position:absolute;left:0;top:0;overflow:visible" width="1" height="1"><path d="M398.9 696.0 L402.9 696.0 L400.9 693.5 Z" fill="#000"/></svg>
<svg style="position:absolute;left:0;top:0;overflow:visible" width="1" height="1"><path d="M398.9 706.25 L402.9 706.25 L400.9 708.75 Z" fill="#000"/></svg>
<div style="position:absolute;left:420px;top:668px;width:41px;height:18px;background:#fff;border-top:1px solid #a0a0a0;border-left:1px solid #a0a0a0;border-right:1px solid #fff;border-bottom:1px solid #fff;box-shadow:inset 1px 1px 0 #696969, inset -1px -1px 0 #e3e3e3;"></div>
<div class="t" style="left:423.0px;top:672.5px;font-size:11px;color:#000;font-family:'Liberation Sans',sans-serif;transform:scaleX(0.871);transform-origin:0 0;">Frame1</div>
<div style="position:absolute;left:471px;top:668px;width:42px;height:18px;background:#fff;border-top:1px solid #a0a0a0;border-left:1px solid #a0a0a0;border-right:1px solid #fff;border-bottom:1px solid #fff;box-shadow:inset 1px 1px 0 #696969, inset -1px -1px 0 #e3e3e3;"></div>
<div class="t" style="left:474.0px;top:672.5px;font-size:11px;color:#000;font-family:'Liberation Sans',sans-serif;transform:scaleX(0.871);transform-origin:0 0;">Frame2</div>
<div style="position:absolute;left:420px;top:693px;width:21px;height:19px;background:#f0f0f0;border-top:1px solid #fff;border-left:1px solid #fff;border-right:1px solid #696969;border-bottom:1px solid #696969;box-shadow:inset -1px -1px 0 #a0a0a0;"></div>
<div class="t" style="left:422.9px;top:697.5px;font-size:12px;color:#000;font-family:'Liberation Sans',sans-serif;font-weight:bold;transform:scaleX(0.920);transform-origin:0 0;">Set</div>
<div style="position:absolute;left:444px;top:693px;width:22px;height:19px;background:#f0f0f0;border-top:1px solid #fff;border-left:1px solid #fff;border-right:1px solid #696969;border-bottom:1px solid #696969;box-shadow:inset -1px -1px 0 #a0a0a0;"></div>
<div class="t" style="left:449.5px;top:698.0px;font-size:11px;color:#000;font-family:'Liberation Sans',sans-serif;transform:scaleX(0.920);transform-origin:0 0;">Clr</div>
<div style="position:absolute;left:470px;top:693px;width:24px;height:19px;background:#f0f0f0;border-top:1px solid #fff;border-left:1px solid #fff;border-right:1px solid #696969;border-bottom:1px solid #696969;box-shadow:inset -1px -1px 0 #a0a0a0;"></div>
<div class="t" style="left:474.4px;top:697.5px;font-size:12px;color:#000;font-family:'Liberation Sans',sans-serif;font-weight:bold;transform:scaleX(0.920);transform-origin:0 0;">Set</div>
<div style="position:absolute;left:497px;top:693px;width:21px;height:19px;background:#f0f0f0;border-top:1px solid #fff;border-left:1px solid #fff;border-right:1px solid #696969;border-bottom:1px solid #696969;box-shadow:inset -1px -1px 0 #a0a0a0;"></div>
<div class="t" style="left:502.0px;top:698.0px;font-size:11px;color:#000;font-family:'Liberation Sans',sans-serif;transform:scaleX(0.920);transform-origin:0 0;">Clr</div>
<div style="position:absolute;left:528px;top:593px;width:117px;height:126px;border:1px solid #a0a0a0;box-shadow:1px 1px 0 #fff, inset 1px 1px 0 #fff;"></div>
<div style="position:absolute;left:534.5px;top:592px;width:86.0px;height:3px;background:#f0f0f0;"></div>
<div class="t" style="left:535.5px;top:590.4px;font-size:11px;color:#000;font-family:'Liberation Sans',sans-serif;transform:scaleX(0.922);transform-origin:0 0;">Form of BKG-Area</div>
<svg style="position:absolute;left:533px;top:604px" width="12" height="12"><circle cx="6" cy="6" r="5.2" fill="#fff" stroke="#f4f4f4" stroke-width="1"/><path d="M2.3 9.7 A5.2 5.2 0 0 1 9.7 2.3" stroke="#a0a0a0" stroke-width="1.1" fill="none"/><path d="M3.0 9.0 A4.2 4.2 0 0 1 9.0 3.0" stroke="#696969" stroke-width="1" fill="none"/><circle cx="6" cy="6" r="2" fill="#000"/></svg>
<div class="t" style="left:549.5px;top:605.2px;font-size:11px;color:#000;font-family:'Liberation Sans',sans-serif;transform:scaleX(0.935);transform-origin:0 0;">Standard</div>
<svg style="position:absolute;left:533px;top:620px" width="12" height="12"><circle cx="6" cy="6" r="5.2" fill="#fff" stroke="#f4f4f4" stroke-width="1"/><path d="M2.3 9.7 A5.2 5.2 0 0 1 9.7 2.3" stroke="#a0a0a0" stroke-width="1.1" fill="none"/><path d="M3.0 9.0 A4.2 4.2 0 0 1 9.0 3.0" stroke="#696969" stroke-width="1" fill="none"/></svg>
<div class="t" style="left:549.5px;top:621.2px;font-size:11px;color:#000;font-family:'Liberation Sans',sans-serif;transform:scaleX(0.935);transform-origin:0 0;">Avoid Sunlit Face</div>
<svg style="position:absolute;left:533px;top:636px" width="12" height="12"><circle cx="6" cy="6" r="5.2" fill="#fff" stroke="#f4f4f4" stroke-width="1"/><path d="M2.3 9.7 A5.2 5.2 0 0 1 9.7 2.3" stroke="#a0a0a0" stroke-width="1.1" fill="none"/><path d="M3.0 9.0 A4.2 4.2 0 0 1 9.0 3.0" stroke="#696969" stroke-width="1" fill="none"/></svg>
<div class="t" style="left:549.5px;top:637.2px;font-size:11px;color:#000;font-family:'Liberation Sans',sans-serif;transform:scaleX(0.935);transform-origin:0 0;">Meteor/Lunar Limb</div>
<div style="position:absolute;left:535px;top:654px;width:103px;height:22px;background:#f0f0f0;border-top:1px solid #fff;border-left:1px solid #fff;border-right:1px solid #696969;border-bottom:1px solid #696969;box-shadow:inset -1px -1px 0 #a0a0a0;"></div>
<div class="t" style="left:548.5px;top:661.0px;font-size:11px;color:#000;font-family:'Liberation Sans',sans-serif;transform:scaleX(0.966);transform-origin:0 0;">Direction Setting</div>
<div class="t" style="left:538.9px;top:681.8px;font-size:11px;color:#000;font-family:'Liberation Sans',sans-serif;transform:scaleX(0.996);transform-origin:0 0;">Width</div>
<div class="t" style="left:595.5px;top:681.8px;font-size:11px;color:#000;font-family:'Liberation Sans',sans-serif;transform:scaleX(0.961);transform-origin:0 0;">Gap</div>
<div style="position:absolute;left:545px;top:695px;width:22px;height:14px;background:#fff;border-top:1px solid #a0a0a0;border-left:1px solid #a0a0a0;border-right:1px solid #fff;border-bottom:1px solid #fff;box-shadow:inset 1px 1px 0 #696969, inset -1px -1px 0 #e3e3e3;"></div>
<div class="t" style="left:548.0px;top:697.5px;font-size:11px;color:#000;font-family:'Liberation Sans',sans-serif;">25</div>
<div style="position:absolute;left:571px;top:693px;width:14px;height:9px;background:#f0f0f0;border-top:1px solid #fff;border-left:1px solid #fff;border-right:1px solid #696969;border-bottom:1px solid #696969;box-shadow:inset -1px -1px 0 #a0a0a0;"></div>
<div style="position:absolute;left:571px;top:705px;width:14px;height:9px;background:#f0f0f0;border-top:1px solid #fff;border-left:1px solid #fff;border-right:1px solid #696969;border-bottom:1px solid #696969;box-shadow:inset -1px -1px 0 #a0a0a0;"></div>
<svg style="position:absolute;left:0;top:0;overflow:visible" width="1" height="1"><path d="M575.3 699.8499999999999 L581.3 699.8499999999999 L578.3 696.3499999999999 Z" fill="#000"/></svg>
<svg style="position:absolute;left:0;top:0;overflow:visible" width="1" height="1"><path d="M575.3 709.15 L581.3 709.15 L578.3 712.65 Z" fill="#000"/></svg>
<div style="position:absolute;left:596px;top:695px;width:22px;height:14px;background:#fff;border-top:1px solid #a0a0a0;border-left:1px solid #a0a0a0;border-right:1px solid #fff;border-bottom:1px solid #fff;box-shadow:inset 1px 1px 0 #696969, inset -1px -1px 0 #e3e3e3;"></div>
<div class="t" style="left:599.0px;top:697.5px;font-size:11px;color:#000;font-family:'Liberation Sans',sans-serif;">0</div>
<div style="position:absolute;left:622px;top:693px;width:15px;height:9px;background:#f0f0f0;border-top:1px solid #fff;border-left:1px solid #fff;border-right:1px solid #696969;border-bottom:1px solid #696969;box-shadow:inset -1px -1px 0 #a0a0a0;"></div>
<div style="position:absolute;left:622px;top:705px;width:15px;height:9px;background:#f0f0f0;border-top:1px solid #fff;border-left:1px solid #fff;border-right:1px solid #696969;border-bottom:1px solid #696969;box-shadow:inset -1px -1px 0 #a0a0a0;"></div>
<svg style="position:absolute;left:0;top:0;overflow:visible" width="1" height="1"><path d="M627.0 699.8499999999999 L633.0 699.8499999999999 L630.0 696.3499999999999 Z" fill="#000"/></svg>
<svg style="position:absolute;left:0;top:0;overflow:visible" width="1" height="1"><path d="M627.0 709.15 L633.0 709.15 L630.0 712.65 Z" fill="#000"/></svg>
<div style="position:absolute;left:652px;top:593px;width:133px;height:126px;border:1px solid #a0a0a0;box-shadow:1px 1px 0 #fff, inset 1px 1px 0 #fff;"></div>
<div style="position:absolute;left:658.6px;top:592px;width:124.0px;height:3px;background:#f0f0f0;"></div>
<div class="t" style="left:659.6px;top:590.4px;font-size:11px;color:#000;font-family:'Liberation Sans',sans-serif;transform:scaleX(0.959);transform-origin:0 0;">Number of Pixels / Radius</div>
<div class="t" style="left:659.6px;top:602.2px;font-size:11px;color:#000;font-family:'Liberation Sans',sans-serif;transform:scaleX(0.971);transform-origin:0 0;">Aperture</div>
<div class="t" style="left:724.0px;top:602.2px;font-size:11px;color:#000;font-family:'Liberation Sans',sans-serif;transform:scaleX(0.998);transform-origin:0 0;">Backgound</div>
<div class="t" style="left:659.6px;top:617.7px;font-size:11px;color:#000;font-family:'Liberation Sans',sans-serif;transform:scaleX(0.930);transform-origin:0 0;">Even</div>
<div class="t" style="left:659.6px;top:633.7px;font-size:11px;color:#000;font-family:'Liberation Sans',sans-serif;transform:scaleX(0.930);transform-origin:0 0;">Odd</div>
<div class="t" style="left:659.6px;top:648.9px;font-size:11px;color:#000;font-family:'Liberation Sans',sans-serif;transform:scaleX(0.930);transform-origin:0 0;">Frame</div>
<div style="position:absolute;left:694px;top:615px;width:35px;height:12px;background:#fff;border-top:1px solid #a0a0a0;border-left:1px solid #a0a0a0;border-right:1px solid #fff;border-bottom:1px solid #fff;box-shadow:inset 1px 1px 0 #696969, inset -1px -1px 0 #e3e3e3;"></div>
<div style="position:absolute;left:739px;top:615px;width:35px;height:12px;background:#fff;border-top:1px solid #a0a0a0;border-left:1px solid #a0a0a0;border-right:1px solid #fff;border-bottom:1px solid #fff;box-shadow:inset 1px 1px 0 #696969, inset -1px -1px 0 #e3e3e3;"></div>
<div style="position:absolute;left:694px;top:630px;width:35px;height:12px;background:#fff;border-top:1px solid #a0a0a0;border-left:1px solid #a0a0a0;border-right:1px solid #fff;border-bottom:1px solid #fff;box-shadow:inset 1px 1px 0 #696969, inset -1px -1px 0 #e3e3e3;"></div>
<div style="position:absolute;left:739px;top:630px;width:35px;height:12px;background:#fff;border-top:1px solid #a0a0a0;border-left:1px solid #a0a0a0;border-right:1px solid #fff;border-bottom:1px solid #fff;box-shadow:inset 1px 1px 0 #696969, inset -1px -1px 0 #e3e3e3;"></div>
<div style="position:absolute;left:694px;top:646px;width:35px;height:13px;background:#fff;border-top:1px solid #a0a0a0;border-left:1px solid #a0a0a0;border-right:1px solid #fff;border-bottom:1px solid #fff;box-shadow:inset 1px 1px 0 #696969, inset -1px -1px 0 #e3e3e3;"></div>
<div style="position:absolute;left:739px;top:646px;width:35px;height:13px;background:#fff;border-top:1px solid #a0a0a0;border-left:1px solid #a0a0a0;border-right:1px solid #fff;border-bottom:1px solid #fff;box-shadow:inset 1px 1px 0 #696969, inset -1px -1px 0 #e3e3e3;"></div>
<div style="position:absolute;left:659px;top:664px;width:119px;height:13px;background:#f0f0f0;border-top:1px solid #fff;border-left:1px solid #fff;border-right:1px solid #696969;border-bottom:1px solid #696969;box-shadow:inset -1px -1px 0 #a0a0a0;"></div>
<div class="t" style="left:667.0px;top:667.5px;font-size:11px;color:#fff;font-family:'Liberation Sans',sans-serif;transform:scaleX(0.961);transform-origin:0 0;">Set&nbsp; radius to recorded</div>
<div class="t" style="left:666.0px;top:666.5px;font-size:11px;color:#a0a0a0;font-family:'Liberation Sans',sans-serif;transform:scaleX(0.961);transform-origin:0 0;">Set&nbsp; radius to recorded</div>
<div class="t" style="left:663.3px;top:681.8px;font-size:11px;color:#000;font-family:'Liberation Sans',sans-serif;transform:scaleX(0.964);transform-origin:0 0;">Radius</div>
<div class="t" style="left:711.3px;top:681.8px;font-size:11px;color:#000;font-family:'Liberation Sans',sans-serif;transform:scaleX(0.996);transform-origin:0 0;">Inner</div>
<div class="t" style="left:747.2px;top:681.8px;font-size:11px;color:#000;font-family:'Liberation Sans',sans-serif;transform:scaleX(0.981);transform-origin:0 0;">Outer</div>
<div style="position:absolute;left:659px;top:695px;width:17px;height:15px;background:#fff;border-top:1px solid #a0a0a0;border-left:1px solid #a0a0a0;border-right:1px solid #fff;border-bottom:1px solid #fff;box-shadow:inset 1px 1px 0 #696969, inset -1px -1px 0 #e3e3e3;"></div>
<div class="t" style="left:661.0px;top:698.5px;font-size:11px;color:#000;font-family:'Liberation Sans',sans-serif;">7</div>
<div style="position:absolute;left:681px;top:693px;width:15px;height:9px;background:#f0f0f0;border-top:1px solid #fff;border-left:1px solid #fff;border-right:1px solid #696969;border-bottom:1px solid #696969;box-shadow:inset -1px -1px 0 #a0a0a0;"></div>
<div style="position:absolute;left:681px;top:705px;width:15px;height:9px;background:#f0f0f0;border-top:1px solid #fff;border-left:1px solid #fff;border-right:1px solid #696969;border-bottom:1px solid #696969;box-shadow:inset -1px -1px 0 #a0a0a0;"></div>
<svg style="position:absolute;left:0;top:0;overflow:visible" width="1" height="1"><path d="M686.0 699.8499999999999 L692.0 699.8499999999999 L689.0 696.3499999999999 Z" fill="#000"/></svg>
<svg style="position:absolute;left:0;top:0;overflow:visible" width="1" height="1"><path d="M686.0 709.15 L692.0 709.15 L689.0 712.65 Z" fill="#000"/></svg>
<div style="position:absolute;left:703px;top:695px;width:16px;height:15px;background:#fff;border-top:1px solid #a0a0a0;border-left:1px solid #a0a0a0;border-right:1px solid #fff;border-bottom:1px solid #fff;box-shadow:inset 1px 1px 0 #696969, inset -1px -1px 0 #e3e3e3;"></div>
<div class="t" style="left:705.0px;top:698.5px;font-size:11px;color:#000;font-family:'Liberation Sans',sans-serif;">8</div>
<div style="position:absolute;left:724px;top:693px;width:15px;height:9px;background:#f0f0f0;border-top:1px solid #fff;border-left:1px solid #fff;border-right:1px solid #696969;border-bottom:1px solid #696969;box-shadow:inset -1px -1px 0 #a0a0a0;"></div>
<div style="position:absolute;left:724px;top:705px;width:15px;height:9px;background:#f0f0f0;border-top:1px solid #fff;border-left:1px solid #fff;border-right:1px solid #696969;border-bottom:1px solid #696969;box-shadow:inset -1px -1px 0 #a0a0a0;"></div>
<svg style="position:absolute;left:0;top:0;overflow:visible" width="1" height="1"><path d="M729.0 699.8499999999999 L735.0 699.8499999999999 L732.0 696.3499999999999 Z" fill="#000"/></svg>
<svg style="position:absolute;left:0;top:0;overflow:visible" width="1" height="1"><path d="M729.0 709.15 L735.0 709.15 L732.0 712.65 Z" fill="#000"/></svg>
<div style="position:absolute;left:747px;top:695px;width:16px;height:15px;background:#fff;border-top:1px solid #a0a0a0;border-left:1px solid #a0a0a0;border-right:1px solid #fff;border-bottom:1px solid #fff;box-shadow:inset 1px 1px 0 #696969, inset -1px -1px 0 #e3e3e3;"></div>
<div class="t" style="left:749.0px;top:698.5px;font-size:11px;color:#000;font-family:'Liberation Sans',sans-serif;">25</div>
<div style="position:absolute;left:768px;top:693px;width:14px;height:9px;background:#f0f0f0;border-top:1px solid #fff;border-left:1px solid #fff;border-right:1px solid #696969;border-bottom:1px solid #696969;box-shadow:inset -1px -1px 0 #a0a0a0;"></div>
<div style="position:absolute;left:768px;top:705px;width:14px;height:9px;background:#f0f0f0;border-top:1px solid #fff;border-left:1px solid #fff;border-right:1px solid #696969;border-bottom:1px solid #696969;box-shadow:inset -1px -1px 0 #a0a0a0;"></div>
<svg style="position:absolute;left:0;top:0;overflow:visible" width="1" height="1"><path d="M772.4 699.8499999999999 L778.4 699.8499999999999 L775.4 696.3499999999999 Z" fill="#000"/></svg>
<svg style="position:absolute;left:0;top:0;overflow:visible" width="1" height="1"><path d="M772.4 709.15 L778.4 709.15 L775.4 712.65 Z" fill="#000"/></svg>
<div style="position:absolute;left:795px;top:593px;width:111px;height:22px;background:#f0f0f0;border-top:1px solid #fff;border-left:1px solid #fff;border-right:1px solid #696969;border-bottom:1px solid #696969;box-shadow:inset -1px -1px 0 #a0a0a0;"></div>
<div class="t" style="left:814.5px;top:599.5px;font-size:11px;color:#000;font-family:'Liberation Sans',sans-serif;transform:scaleX(0.960);transform-origin:0 0;">Star Image [3D]</div>
<div style="position:absolute;left:911px;top:593px;width:107px;height:22px;background:#f0f0f0;border-top:1px solid #fff;border-left:1px solid #fff;border-right:1px solid #696969;border-bottom:1px solid #696969;box-shadow:inset -1px -1px 0 #a0a0a0;"></div>
<div class="t" style="left:913.8px;top:599.5px;font-size:11px;color:#000;font-family:'Liberation Sans',sans-serif;transform:scaleX(1.007);transform-origin:0 0;">Update Setting Items</div>
<div style="position:absolute;left:796px;top:622px;width:157px;height:48px;border:1px solid #a0a0a0;box-shadow:1px 1px 0 #fff, inset 1px 1px 0 #fff;"></div>
<div style="position:absolute;left:802.5px;top:621px;width:134.0px;height:3px;background:#f0f0f0;"></div>
<div class="t" style="left:803.5px;top:619.4px;font-size:11px;color:#000;font-family:'Liberation Sans',sans-serif;transform:scaleX(0.973);transform-origin:0 0;">Measurement / View Option</div>
<div style="position:absolute;left:804px;top:629px;width:70px;height:18px;background:#f0f0f0;border-top:1px solid #fff;border-left:1px solid #fff;border-right:1px solid #696969;border-bottom:1px solid #696969;box-shadow:inset -1px -1px 0 #a0a0a0;"></div>
<div class="t" style="left:814.0px;top:634.0px;font-size:11px;color:#000;font-family:'Liberation Sans',sans-serif;transform:scaleX(0.955);transform-origin:0 0;">Show Field</div>
<div style="position:absolute;left:804px;top:652px;width:11px;height:11px;background:#f0f0f0;border-top:1px solid #a0a0a0;border-left:1px solid #a0a0a0;border-right:1px solid #fff;border-bottom:1px solid #fff;box-shadow:inset 1px 1px 0 #696969, inset -1px -1px 0 #e3e3e3;"></div>
<div class="t" style="left:821.7px;top:654.0px;font-size:11px;color:#a0a0a0;font-family:'Liberation Sans',sans-serif;transform:scaleX(0.932);transform-origin:0 0;">Field Measure</div>
<div style="position:absolute;left:895px;top:642px;width:14px;height:10px;background:#f0f0f0;border-top:1px solid #fff;border-left:1px solid #fff;border-right:1px solid #696969;border-bottom:1px solid #696969;box-shadow:inset -1px -1px 0 #a0a0a0;"></div>
<div style="position:absolute;left:895px;top:656px;width:14px;height:11px;background:#f0f0f0;border-top:1px solid #fff;border-left:1px solid #fff;border-right:1px solid #696969;border-bottom:1px solid #696969;box-shadow:inset -1px -1px 0 #a0a0a0;"></div>
<svg style="position:absolute;left:0;top:0;overflow:visible" width="1" height="1"><path d="M899.7 649.5 L905.7 649.5 L902.7 646.0 Z" fill="#000"/></svg>
<svg style="position:absolute;left:0;top:0;overflow:visible" width="1" height="1"><path d="M899.7 660.9 L905.7 660.9 L902.7 664.4 Z" fill="#000"/></svg>
<div class="t" style="left:911.4px;top:632.9px;font-size:11px;color:#000;font-family:'Liberation Sans',sans-serif;transform:scaleX(0.970);transform-origin:0 0;">Interval</div>
<div style="position:absolute;left:912px;top:647px;width:33px;height:19px;background:#fff;border-top:1px solid #a0a0a0;border-left:1px solid #a0a0a0;border-right:1px solid #fff;border-bottom:1px solid #fff;box-shadow:inset 1px 1px 0 #696969, inset -1px -1px 0 #e3e3e3;"></div>
<div class="t" style="left:914.0px;top:652.0px;font-size:11px;color:#000;font-family:'Liberation Sans',sans-serif;">1</div>
<div style="position:absolute;left:963px;top:622px;width:54px;height:17px;background:#f8f8f8;border-top:1px solid #696969;border-left:1px solid #696969;border-right:1px solid #fff;border-bottom:1px solid #fff;box-shadow:inset 1px 1px 0 #a0a0a0;"></div>
<div class="t" style="left:974.5px;top:626.5px;font-size:11px;color:#000;font-family:'Liberation Sans',sans-serif;transform:scaleX(0.987);transform-origin:0 0;">DShow</div>
<div class="t" style="left:961.6px;top:642.1px;font-size:11px;color:#000;font-family:'Liberation Sans',sans-serif;transform:scaleX(0.947);transform-origin:0 0;">Frame Rate</div>
<div style="position:absolute;left:961px;top:652px;width:56px;height:18px;background:#fff;border-top:1px solid #a0a0a0;border-left:1px solid #a0a0a0;border-right:1px solid #fff;border-bottom:1px solid #fff;box-shadow:inset 1px 1px 0 #696969, inset -1px -1px 0 #e3e3e3;"></div>
<div class="t" style="left:966.0px;top:657.0px;font-size:11px;color:#000;font-family:'Liberation Sans',sans-serif;transform:scaleX(0.999);transform-origin:0 0;">2.9586755</div>
<div style="position:absolute;left:796px;top:681px;width:77px;height:38px;border:1px solid #a0a0a0;box-shadow:1px 1px 0 #fff, inset 1px 1px 0 #fff;"></div>
<div style="position:absolute;left:802.5px;top:680px;width:53.0px;height:3px;background:#f0f0f0;"></div>
<div class="t" style="left:803.5px;top:677.5px;font-size:11px;color:#000;font-family:'Liberation Sans',sans-serif;transform:scaleX(0.927);transform-origin:0 0;">Field Order</div>
<svg style="position:absolute;left:804px;top:690px" width="12" height="12"><circle cx="6" cy="6" r="5.2" fill="#fff" stroke="#f4f4f4" stroke-width="1"/><path d="M2.3 9.7 A5.2 5.2 0 0 1 9.7 2.3" stroke="#a0a0a0" stroke-width="1.1" fill="none"/><path d="M3.0 9.0 A4.2 4.2 0 0 1 9.0 3.0" stroke="#696969" stroke-width="1" fill="none"/></svg>
<div class="t" style="left:821.7px;top:690.5px;font-size:11px;color:#000;font-family:'Liberation Sans',sans-serif;transform:scaleX(0.959);transform-origin:0 0;">Even first</div>
<svg style="position:absolute;left:804px;top:704px" width="12" height="12"><circle cx="6" cy="6" r="5.2" fill="#fff" stroke="#f4f4f4" stroke-width="1"/><path d="M2.3 9.7 A5.2 5.2 0 0 1 9.7 2.3" stroke="#a0a0a0" stroke-width="1.1" fill="none"/><path d="M3.0 9.0 A4.2 4.2 0 0 1 9.0 3.0" stroke="#696969" stroke-width="1" fill="none"/><circle cx="6" cy="6" r="2" fill="#000"/></svg>
<div class="t" style="left:821.7px;top:704.5px;font-size:11px;color:#000;font-family:'Liberation Sans',sans-serif;transform:scaleX(0.938);transform-origin:0 0;">Odd first</div>
<div style="position:absolute;left:876px;top:681px;width:51px;height:37px;background:#f0f0f0;border-top:1px solid #fff;border-left:1px solid #fff;border-right:1px solid #696969;border-bottom:1px solid #696969;box-shadow:inset -1px -1px 0 #a0a0a0;"></div>
<div class="t" style="left:885.5px;top:693.0px;font-size:13px;color:#000;font-family:'Liberation Sans',sans-serif;font-weight:bold;transform:scaleX(0.888);transform-origin:0 0;">Graph</div>
<div style="position:absolute;left:930px;top:681px;width:87px;height:38px;border:1px solid #a0a0a0;box-shadow:1px 1px 0 #fff, inset 1px 1px 0 #fff;"></div>
<div style="position:absolute;left:936.5px;top:680px;width:70.0px;height:3px;background:#f0f0f0;"></div>
<div class="t" style="left:937.5px;top:677.5px;font-size:11px;color:#000;font-family:'Liberation Sans',sans-serif;transform:scaleX(0.950);transform-origin:0 0;">Current Object</div>
<div style="position:absolute;left:933px;top:690px;width:23px;height:19px;background:#f8f8f8;border-top:1px solid #696969;border-left:1px solid #696969;border-right:1px solid #fff;border-bottom:1px solid #fff;box-shadow:inset 1px 1px 0 #a0a0a0;"></div>
<div class="t" style="left:942.8px;top:695.5px;font-size:11px;color:#000;font-family:'Liberation Sans',sans-serif;">A</div>
<div style="position:absolute;left:962px;top:690px;width:23px;height:19px;background:#f0f0f0;border-top:1px solid #fff;border-left:1px solid #fff;border-right:1px solid #696969;border-bottom:1px solid #696969;box-shadow:inset -1px -1px 0 #a0a0a0;"></div>
<div class="t" style="left:970.8px;top:695.5px;font-size:11px;color:#000;font-family:'Liberation Sans',sans-serif;">B</div>
<div style="position:absolute;left:989px;top:690px;width:24px;height:19px;background:#f0f0f0;border-top:1px solid #fff;border-left:1px solid #fff;border-right:1px solid #696969;border-bottom:1px solid #696969;box-shadow:inset -1px -1px 0 #a0a0a0;"></div>
<div class="t" style="left:998.0px;top:695.5px;font-size:11px;color:#000;font-family:'Liberation Sans',sans-serif;">C</div>
<div style="position:absolute;left:933px;top:711.7px;width:25px;height:4px;background:#a8c8f0;"></div>
<div style="position:absolute;left:961px;top:711.7px;width:26px;height:4px;background:#ffff00;"></div>
<div style="position:absolute;left:989px;top:711.7px;width:27px;height:4px;background:#ff00ff;"></div>
<div class="t" style="left:140.0px;top:742.0px;font-size:13px;color:#000;font-family:'Liberation Sans',sans-serif;font-weight:bold;transform:scaleX(0.888);transform-origin:0 0;">Timing process indicator</div>
<div style="position:absolute;left:20px;top:759px;width:76px;height:17px;background:#00ffff;border-top:1px solid #808080;border-left:1px solid #808080;border-right:1px solid #fff;border-bottom:1px solid #fff;"></div>
<div class="t" style="left:23.0px;top:761.5px;font-size:12px;color:#000;font-family:'Liberation Sans',sans-serif;transform:scaleX(0.890);transform-origin:0 0;">1. Time correct</div>
<div style="position:absolute;left:100px;top:759px;width:84px;height:17px;background:#00ffff;border-top:1px solid #808080;border-left:1px solid #808080;border-right:1px solid #fff;border-bottom:1px solid #fff;"></div>
<div class="t" style="left:103.0px;top:761.5px;font-size:12px;color:#000;font-family:'Liberation Sans',sans-serif;transform:scaleX(0.890);transform-origin:0 0;">2. XML element</div>
<div style="position:absolute;left:188px;top:759px;width:68px;height:17px;background:#00ffff;border-top:1px solid #808080;border-left:1px solid #808080;border-right:1px solid #fff;border-bottom:1px solid #fff;"></div>
<div class="t" style="left:191.0px;top:761.5px;font-size:12px;color:#000;font-family:'Liberation Sans',sans-serif;transform:scaleX(0.890);transform-origin:0 0;">3. Light curve</div>
<div style="position:absolute;left:260px;top:759px;width:77px;height:17px;background:#ffffff;border-top:1px solid #808080;border-left:1px solid #808080;border-right:1px solid #fff;border-bottom:1px solid #fff;"></div>
<div class="t" style="left:263.0px;top:761.5px;font-size:12px;color:#000;font-family:'Liberation Sans',sans-serif;transform:scaleX(0.890);transform-origin:0 0;">4. Diffraction tit</div>
<div style="position:absolute;left:340px;top:759px;width:76px;height:17px;background:#ffffff;border-top:1px solid #808080;border-left:1px solid #808080;border-right:1px solid #fff;border-bottom:1px solid #fff;"></div>
<div class="t" style="left:343.0px;top:761.5px;font-size:12px;color:#000;font-family:'Liberation Sans',sans-serif;transform:scaleX(0.890);transform-origin:0 0;">5. Make report</div>
<div class="t" style="left:434.4px;top:730.4px;font-size:14px;color:#000;font-family:'Liberation Sans',sans-serif;font-weight:bold;transform:scaleX(1.038);transform-origin:0 0;">AVI filename :</div>
<div style="position:absolute;left:531px;top:729px;width:494px;height:16px;background:#fff;border-top:1px solid #a0a0a0;border-left:1px solid #a0a0a0;border-right:1px solid #fff;border-bottom:1px solid #fff;box-shadow:inset 1px 1px 0 #696969, inset -1px -1px 0 #e3e3e3;"></div>
<div class="t" style="left:534.0px;top:731.5px;font-size:12px;color:#000;font-family:'Liberation Mono',monospace;transform:scaleX(0.721);transform-origin:0 0;">I:&yen;A-enpei kansoku&yen;kansokukiroku2025&yen;07-12gatsu&yen;20251119@Sappoh jitaku&yen;22_33_00.avi</div>
<div class="t" style="left:530.7px;top:757.2px;font-size:14px;color:#000;font-family:'Liberation Sans',sans-serif;transform:scaleX(0.958);transform-origin:0 0;">SharpCap version:</div>
<div style="position:absolute;left:651px;top:754px;width:101px;height:18px;background:#fff;border-top:1px solid #a0a0a0;border-left:1px solid #a0a0a0;border-right:1px solid #fff;border-bottom:1px solid #fff;box-shadow:inset 1px 1px 0 #696969, inset -1px -1px 0 #e3e3e3;"></div>
<div class="t" style="left:655.0px;top:758.0px;font-size:12px;color:#000;font-family:'Liberation Mono',monospace;font-weight:bold;transform:scaleX(0.918);transform-origin:0 0;">4. 0. 9571. 0</div>
<div class="t" style="left:770.8px;top:757.2px;font-size:14px;color:#000;font-family:'Liberation Sans',sans-serif;transform:scaleX(0.964);transform-origin:0 0;">Time stamp indicates</div>
<div style="position:absolute;left:907px;top:754px;width:109px;height:18px;background:#fff;border-top:1px solid #a0a0a0;border-left:1px solid #a0a0a0;border-right:1px solid #fff;border-bottom:1px solid #fff;box-shadow:inset 1px 1px 0 #696969, inset -1px -1px 0 #e3e3e3;"></div>
<div class="t" style="left:911.0px;top:758.0px;font-size:12px;color:#000;font-family:'Liberation Sans',sans-serif;font-weight:bold;transform:scaleX(0.954);transform-origin:0 0;">FrameEnd</div>
<div style="position:absolute;left:917px;top:270px;width:102px;height:37px;border:1px solid #a0a0a0;box-shadow:1px 1px 0 #fff, inset 1px 1px 0 #fff;"></div>
<svg style="position:absolute;left:917px;top:281px" width="104" height="12"><rect x="11.0" y="5" width="1" height="4" fill="#000"/><rect x="18.8" y="5" width="1" height="4" fill="#000"/><rect x="26.5" y="5" width="1" height="4" fill="#000"/><rect x="34.2" y="5" width="1" height="4" fill="#000"/><rect x="42.0" y="5" width="1" height="4" fill="#000"/><rect x="49.8" y="5" width="1" height="4" fill="#000"/><rect x="57.5" y="5" width="1" height="4" fill="#000"/><rect x="65.2" y="5" width="1" height="4" fill="#000"/><rect x="73.0" y="5" width="1" height="4" fill="#000"/><rect x="80.8" y="5" width="1" height="4" fill="#000"/><rect x="88.5" y="5" width="1" height="4" fill="#000"/></svg>
<div class="t" style="left:925.0px;top:293.6px;font-size:11px;color:#000;font-family:'Liberation Sans',sans-serif;transform:scaleX(0.980);transform-origin:0 0;">0</div>
<div class="t" style="left:942.0px;top:293.6px;font-size:11px;color:#000;font-family:'Liberation Sans',sans-serif;transform:scaleX(0.960);transform-origin:0 0;">Delay (Sec) 1</div>
<div style="position:absolute;left:763px;top:290px;width:145px;height:23px;background:#f0f0f0;border-top:1px solid #fff;border-left:1px solid #fff;border-right:1px solid #696969;border-bottom:1px solid #696969;box-shadow:inset -1px -1px 0 #a0a0a0;"></div>
<div class="t" style="left:768.5px;top:295.0px;font-size:14px;color:#000;font-family:'Liberation Sans',sans-serif;transform:scaleX(0.934);transform-origin:0 0;">Timing Error Simulation</div>
<div style="position:absolute;left:917px;top:315px;width:102px;height:33px;border:1px solid #a0a0a0;box-shadow:1px 1px 0 #fff, inset 1px 1px 0 #fff;"></div>
<div style="position:absolute;left:924.0px;top:314px;width:22.0px;height:3px;background:#f0f0f0;"></div>
<div class="t" style="left:925.0px;top:311.5px;font-size:11px;color:#000;font-family:'Liberation Sans',sans-serif;transform:scaleX(0.860);transform-origin:0 0;">Gain</div>
<div style="position:absolute;left:925px;top:327px;width:45px;height:17px;background:#fff;border-top:1px solid #a0a0a0;border-left:1px solid #a0a0a0;border-right:1px solid #fff;border-bottom:1px solid #fff;box-shadow:inset 1px 1px 0 #696969, inset -1px -1px 0 #e3e3e3;"></div>
<div class="t" style="left:927.0px;top:330.0px;font-size:12px;color:#000;font-family:'Liberation Sans',sans-serif;">1.6</div>
<div style="position:absolute;left:974px;top:318px;width:13px;height:10px;background:#f0f0f0;border-top:1px solid #fff;border-left:1px solid #fff;border-right:1px solid #696969;border-bottom:1px solid #696969;box-shadow:inset -1px -1px 0 #a0a0a0;"></div>
<div style="position:absolute;left:974px;top:330px;width:13px;height:10px;background:#f0f0f0;border-top:1px solid #fff;border-left:1px solid #fff;border-right:1px solid #696969;border-bottom:1px solid #696969;box-shadow:inset -1px -1px 0 #a0a0a0;"></div>
<svg style="position:absolute;left:0;top:0;overflow:visible" width="1" height="1"><path d="M978.45 325.25 L984.45 325.25 L981.45 321.75 Z" fill="#000"/></svg>
<svg style="position:absolute;left:0;top:0;overflow:visible" width="1" height="1"><path d="M978.45 335.0 L984.45 335.0 L981.45 338.5 Z" fill="#000"/></svg>
<div style="position:absolute;left:917px;top:353px;width:102px;height:27px;border:1px solid #a0a0a0;box-shadow:1px 1px 0 #fff, inset 1px 1px 0 #fff;"></div>
<div style="position:absolute;left:924.0px;top:352px;width:71.0px;height:3px;background:#f0f0f0;"></div>
<div class="t" style="left:925.0px;top:349.6px;font-size:11px;color:#000;font-family:'Liberation Sans',sans-serif;transform:scaleX(0.932);transform-origin:0 0;">Gaussian Filtre</div>
<svg style="position:absolute;left:926px;top:364px" width="12" height="12"><circle cx="6" cy="6" r="5.2" fill="#fff" stroke="#f4f4f4" stroke-width="1"/><path d="M2.3 9.7 A5.2 5.2 0 0 1 9.7 2.3" stroke="#a0a0a0" stroke-width="1.1" fill="none"/><path d="M3.0 9.0 A4.2 4.2 0 0 1 9.0 3.0" stroke="#696969" stroke-width="1" fill="none"/></svg>
<div class="t" style="left:943.0px;top:365.0px;font-size:11px;color:#000;font-family:'Liberation Sans',sans-serif;">0</div>
<svg style="position:absolute;left:957px;top:364px" width="12" height="12"><circle cx="6" cy="6" r="5.2" fill="#fff" stroke="#f4f4f4" stroke-width="1"/><path d="M2.3 9.7 A5.2 5.2 0 0 1 9.7 2.3" stroke="#a0a0a0" stroke-width="1.1" fill="none"/><path d="M3.0 9.0 A4.2 4.2 0 0 1 9.0 3.0" stroke="#696969" stroke-width="1" fill="none"/><circle cx="6" cy="6" r="2" fill="#000"/></svg>
<div class="t" style="left:974.8px;top:365.0px;font-size:11px;color:#000;font-family:'Liberation Sans',sans-serif;">3</div>
<svg style="position:absolute;left:989px;top:364px" width="12" height="12"><circle cx="6" cy="6" r="5.2" fill="#fff" stroke="#f4f4f4" stroke-width="1"/><path d="M2.3 9.7 A5.2 5.2 0 0 1 9.7 2.3" stroke="#a0a0a0" stroke-width="1.1" fill="none"/><path d="M3.0 9.0 A4.2 4.2 0 0 1 9.0 3.0" stroke="#696969" stroke-width="1" fill="none"/></svg>
<div class="t" style="left:1005.6px;top:365.0px;font-size:11px;color:#000;font-family:'Liberation Sans',sans-serif;">5</div>
<div style="position:absolute;left:760px;top:332px;width:147px;height:49px;border:1px solid #a0a0a0;box-shadow:1px 1px 0 #fff, inset 1px 1px 0 #fff;"></div>
<div style="position:absolute;left:767.0px;top:331px;width:132.0px;height:3px;background:#f0f0f0;"></div>
<div class="t" style="left:768.0px;top:327.7px;font-size:11px;color:#000;font-family:'Liberation Sans',sans-serif;transform:scaleX(0.949);transform-origin:0 0;">Gamma Reverse Correction</div>
<svg style="position:absolute;left:769px;top:345px" width="12" height="12"><circle cx="6" cy="6" r="5.2" fill="#fff" stroke="#f4f4f4" stroke-width="1"/><path d="M2.3 9.7 A5.2 5.2 0 0 1 9.7 2.3" stroke="#a0a0a0" stroke-width="1.1" fill="none"/><path d="M3.0 9.0 A4.2 4.2 0 0 1 9.0 3.0" stroke="#696969" stroke-width="1" fill="none"/><circle cx="6" cy="6" r="2" fill="#000"/></svg>
<div class="t" style="left:786.0px;top:345.5px;font-size:11px;color:#000;font-family:'Liberation Sans',sans-serif;transform:scaleX(0.864);transform-origin:0 0;">OFF</div>
<svg style="position:absolute;left:817px;top:345px" width="12" height="12"><circle cx="6" cy="6" r="5.2" fill="#fff" stroke="#f4f4f4" stroke-width="1"/><path d="M2.3 9.7 A5.2 5.2 0 0 1 9.7 2.3" stroke="#a0a0a0" stroke-width="1.1" fill="none"/><path d="M3.0 9.0 A4.2 4.2 0 0 1 9.0 3.0" stroke="#696969" stroke-width="1" fill="none"/></svg>
<div class="t" style="left:834.0px;top:345.5px;font-size:11px;color:#000;font-family:'Liberation Sans',sans-serif;transform:scaleX(0.923);transform-origin:0 0;">Field</div>
<svg style="position:absolute;left:769px;top:363px" width="12" height="12"><circle cx="6" cy="6" r="5.2" fill="#fff" stroke="#f4f4f4" stroke-width="1"/><path d="M2.3 9.7 A5.2 5.2 0 0 1 9.7 2.3" stroke="#a0a0a0" stroke-width="1.1" fill="none"/><path d="M3.0 9.0 A4.2 4.2 0 0 1 9.0 3.0" stroke="#696969" stroke-width="1" fill="none"/></svg>
<div class="t" style="left:786.0px;top:363.5px;font-size:11px;color:#000;font-family:'Liberation Sans',sans-serif;transform:scaleX(0.958);transform-origin:0 0;">Measure</div>
<div style="position:absolute;left:840px;top:362px;width:11px;height:11px;background:#fff;border-top:1px solid #a0a0a0;border-left:1px solid #a0a0a0;border-right:1px solid #fff;border-bottom:1px solid #fff;box-shadow:inset 1px 1px 0 #696969, inset -1px -1px 0 #e3e3e3;"></div>
<div style="position:absolute;left:866px;top:356px;width:30px;height:18px;background:#fff;border-top:1px solid #a0a0a0;border-left:1px solid #a0a0a0;border-right:1px solid #fff;border-bottom:1px solid #fff;box-shadow:inset 1px 1px 0 #696969, inset -1px -1px 0 #e3e3e3;"></div>
<div class="t" style="left:869.0px;top:360.5px;font-size:11px;color:#a0a0a0;font-family:'Liberation Sans',sans-serif;transform:scaleX(0.933);transform-origin:0 0;">1.00</div>
<div style="position:absolute;left:765px;top:390px;width:141px;height:26px;background:#f0f0f0;border-top:1px solid #fff;border-left:1px solid #fff;border-right:1px solid #696969;border-bottom:1px solid #696969;box-shadow:inset -1px -1px 0 #a0a0a0;"></div>
<div class="t" style="left:777.5px;top:397.0px;font-size:13px;color:#000;font-family:'Liberation Sans',sans-serif;font-weight:bold;transform:scaleX(0.883);transform-origin:0 0;">Asteroid timing guide</div>
<div style="position:absolute;left:913px;top:390px;width:107px;height:26px;background:#f0f0f0;border-top:1px solid #fff;border-left:1px solid #fff;border-right:1px solid #696969;border-bottom:1px solid #696969;box-shadow:inset -1px -1px 0 #a0a0a0;"></div>
<div class="t" style="left:919.2px;top:396.0px;font-size:14px;color:#000;font-family:'Liberation Sans',sans-serif;transform:scaleX(0.940);transform-origin:0 0;">Operation Guide</div>
<div style="position:absolute;left:763px;top:422px;width:185px;height:24px;background:#f0f0f0;border-top:1px solid #fff;border-left:1px solid #fff;border-right:1px solid #696969;border-bottom:1px solid #696969;box-shadow:inset -1px -1px 0 #a0a0a0;"></div>
<div class="t" style="left:783.5px;top:428.5px;font-size:13px;color:#000080;font-family:'Liberation Sans',sans-serif;font-weight:bold;transform:scaleX(0.890);transform-origin:0 0;">SharpCap Timing Analysis</div>
<div style="position:absolute;left:961px;top:422px;width:46px;height:22px;background:#f8f8f8;border-top:1px solid #696969;border-left:1px solid #696969;border-right:1px solid #fff;border-bottom:1px solid #fff;box-shadow:inset 1px 1px 0 #a0a0a0;"></div>
<div class="t" style="left:974.0px;top:428.5px;font-size:11px;color:#000;font-family:'Liberation Sans',sans-serif;transform:scaleX(0.958);transform-origin:0 0;">More</div>
<div style="position:absolute;left:760px;top:457px;width:261px;height:76px;border:1px solid #a0a0a0;box-shadow:1px 1px 0 #fff, inset 1px 1px 0 #fff;"></div>
<div style="position:absolute;left:766.0px;top:456px;width:54.0px;height:3px;background:#f0f0f0;"></div>
<div class="t" style="left:767.0px;top:454.0px;font-size:11px;color:#000;font-family:'Liberation Sans',sans-serif;transform:scaleX(0.935);transform-origin:0 0;">Frame time</div>
<div class="t" style="left:831.0px;top:459.5px;font-size:11px;color:#000;font-family:'Liberation Sans',sans-serif;transform:scaleX(0.989);transform-origin:0 0;">Date</div>
<div class="t" style="left:903.8px;top:459.5px;font-size:11px;color:#000;font-family:'Liberation Sans',sans-serif;transform:scaleX(0.940);transform-origin:0 0;">Threshold</div>
<div style="position:absolute;left:767px;top:477px;width:11px;height:11px;background:#fff;border-top:1px solid #a0a0a0;border-left:1px solid #a0a0a0;border-right:1px solid #fff;border-bottom:1px solid #fff;box-shadow:inset 1px 1px 0 #696969, inset -1px -1px 0 #e3e3e3;"></div>
<div class="t" style="left:785.7px;top:476.0px;font-size:12px;color:#301800;font-family:'Liberation Sans',sans-serif;font-weight:bold;transform:scaleX(0.880);transform-origin:0 0;">Sharp4.1</div>
<div style="position:absolute;left:832px;top:472px;width:68px;height:16px;background:#fff;border-top:1px solid #a0a0a0;border-left:1px solid #a0a0a0;border-right:1px solid #fff;border-bottom:1px solid #fff;box-shadow:inset 1px 1px 0 #696969, inset -1px -1px 0 #e3e3e3;"></div>
<div class="t" style="left:834.0px;top:475.0px;font-size:12px;color:#000;font-family:'Liberation Sans',sans-serif;transform:scaleX(0.939);transform-origin:0 0;">25 11 19</div>
<div style="position:absolute;left:913px;top:471px;width:17px;height:16px;background:#fff;border-top:1px solid #a0a0a0;border-left:1px solid #a0a0a0;border-right:1px solid #fff;border-bottom:1px solid #fff;box-shadow:inset 1px 1px 0 #696969, inset -1px -1px 0 #e3e3e3;"></div>
<div class="t" style="left:915.0px;top:475.0px;font-size:11px;color:#000;font-family:'Liberation Sans',sans-serif;">80</div>
<div style="position:absolute;left:937px;top:471px;width:14px;height:7px;background:#f0f0f0;border-top:1px solid #fff;border-left:1px solid #fff;border-right:1px solid #696969;border-bottom:1px solid #696969;box-shadow:inset -1px -1px 0 #a0a0a0;"></div>
<div style="position:absolute;left:937px;top:482px;width:14px;height:9px;background:#f0f0f0;border-top:1px solid #fff;border-left:1px solid #fff;border-right:1px solid #696969;border-bottom:1px solid #696969;box-shadow:inset -1px -1px 0 #a0a0a0;"></div>
<svg style="position:absolute;left:0;top:0;overflow:visible" width="1" height="1"><path d="M941.7 477.25 L947.7 477.25 L944.7 473.75 Z" fill="#000"/></svg>
<svg style="position:absolute;left:0;top:0;overflow:visible" width="1" height="1"><path d="M941.7 485.75 L947.7 485.75 L944.7 489.25 Z" fill="#000"/></svg>
<div style="position:absolute;left:956px;top:467px;width:11px;height:11px;background:#fff;border-top:1px solid #a0a0a0;border-left:1px solid #a0a0a0;border-right:1px solid #fff;border-bottom:1px solid #fff;box-shadow:inset 1px 1px 0 #696969, inset -1px -1px 0 #e3e3e3;"></div>
<svg style="position:absolute;left:956px;top:467px" width="13" height="13"><path d="M3 6 L5 9 L10 3.5" stroke="#000" stroke-width="2" fill="none"/></svg>
<div style="position:absolute;left:969px;top:463px;width:49px;height:17px;background:#fff;border-top:1px solid #a0a0a0;border-left:1px solid #a0a0a0;border-right:1px solid #fff;border-bottom:1px solid #fff;box-shadow:inset 1px 1px 0 #696969, inset -1px -1px 0 #e3e3e3;"></div>
<div class="t" style="left:971.0px;top:466.5px;font-size:12px;color:#000;font-family:'Liberation Sans',sans-serif;transform:scaleX(0.812);transform-origin:0 0;">Sharp</div>
<div style="position:absolute;left:1003px;top:465px;width:14px;height:14px;background:#f0f0f0;border-top:1px solid #fff;border-left:1px solid #fff;border-right:1px solid #696969;border-bottom:1px solid #696969;box-shadow:inset -1px -1px 0 #a0a0a0;"></div>
<svg style="position:absolute;left:0;top:0;overflow:visible" width="1" height="1"><path d="M1007.5 471.5 L1013.5 471.5 L1010.5 475.0 Z" fill="#000"/></svg>
<div class="t" style="left:778.4px;top:496.0px;font-size:11px;color:#000;font-family:'Liberation Sans',sans-serif;transform:scaleX(0.930);transform-origin:0 0;">h</div>
<div class="t" style="left:801.6px;top:496.0px;font-size:11px;color:#000;font-family:'Liberation Sans',sans-serif;transform:scaleX(0.930);transform-origin:0 0;">m</div>
<div class="t" style="left:825.5px;top:496.0px;font-size:11px;color:#000;font-family:'Liberation Sans',sans-serif;transform:scaleX(0.930);transform-origin:0 0;">s [Start]</div>
<div class="t" style="left:893.6px;top:496.0px;font-size:11px;color:#000;font-family:'Liberation Sans',sans-serif;transform:scaleX(0.930);transform-origin:0 0;">[Mid]</div>
<div class="t" style="left:943.0px;top:493.5px;font-size:11px;color:#000;font-family:'Liberation Sans',sans-serif;transform:scaleX(0.930);transform-origin:0 0;">[End]</div>
<div style="position:absolute;left:975px;top:493px;width:18px;height:15px;background:#fafafa;"></div>
<div class="t" style="left:978.0px;top:497.6px;font-size:11px;color:#000;font-family:'Liberation Sans',sans-serif;transform:scaleX(0.891);transform-origin:0 0;">S1</div>
<div style="position:absolute;left:998px;top:493px;width:18px;height:15px;background:#fafafa;"></div>
<div class="t" style="left:1000.7px;top:497.6px;font-size:11px;color:#000;font-family:'Liberation Sans',sans-serif;transform:scaleX(0.891);transform-origin:0 0;">S2</div>
<div style="position:absolute;left:763px;top:510px;width:21px;height:16px;background:#00ffff;border-top:1px solid #a0a0a0;border-left:1px solid #a0a0a0;border-right:1px solid #fff;border-bottom:1px solid #fff;box-shadow:inset 1px 1px 0 #696969, inset -1px -1px 0 #e3e3e3;"></div>
<div class="t" style="left:766.0px;top:513.5px;font-size:11px;color:#000;font-family:'Liberation Sans',sans-serif;transform:scaleX(0.920);transform-origin:0 0;">0</div>
<div style="position:absolute;left:788px;top:510px;width:21px;height:16px;background:#00ffff;border-top:1px solid #a0a0a0;border-left:1px solid #a0a0a0;border-right:1px solid #fff;border-bottom:1px solid #fff;box-shadow:inset 1px 1px 0 #696969, inset -1px -1px 0 #e3e3e3;"></div>
<div class="t" style="left:791.0px;top:513.5px;font-size:11px;color:#000;font-family:'Liberation Sans',sans-serif;transform:scaleX(0.920);transform-origin:0 0;">0</div>
<div style="position:absolute;left:815px;top:510px;width:54px;height:16px;background:#00ffff;border-top:1px solid #a0a0a0;border-left:1px solid #a0a0a0;border-right:1px solid #fff;border-bottom:1px solid #fff;box-shadow:inset 1px 1px 0 #696969, inset -1px -1px 0 #e3e3e3;"></div>
<div style="position:absolute;left:875px;top:510px;width:58px;height:16px;background:#00ffff;border-top:1px solid #a0a0a0;border-left:1px solid #a0a0a0;border-right:1px solid #fff;border-bottom:1px solid #fff;box-shadow:inset 1px 1px 0 #696969, inset -1px -1px 0 #e3e3e3;"></div>
<div class="t" style="left:878.0px;top:513.5px;font-size:11px;color:#000;font-family:'Liberation Sans',sans-serif;transform:scaleX(0.920);transform-origin:0 0;">0.0000</div>
<div style="position:absolute;left:939px;top:510px;width:58px;height:16px;background:#00ffff;border-top:1px solid #a0a0a0;border-left:1px solid #a0a0a0;border-right:1px solid #fff;border-bottom:1px solid #fff;box-shadow:inset 1px 1px 0 #696969, inset -1px -1px 0 #e3e3e3;"></div>
<div class="t" style="left:942.0px;top:513.5px;font-size:11px;color:#000;font-family:'Liberation Sans',sans-serif;transform:scaleX(0.920);transform-origin:0 0;">0.0000</div>
<div style="position:absolute;left:747px;top:9px;width:283px;height:273px;background:#f0f0f0;border-radius:8px 8px 8px 8px;box-shadow:0 0 0 1px rgba(0,0,0,0.08), 0 3px 10px rgba(0,0,0,0.22);"></div>
<div style="position:absolute;left:747px;top:9px;width:283px;height:25px;background:#f3f3f3;border-radius:7px 7px 0 0;"></div>
<svg style="position:absolute;left:750px;top:13px" width="16" height="16" viewBox="0 0 16 16"><path d="M0 0.5 H5 L6 0 H16 V16 H4 L0 14 Z" fill="#0000c8"/><path d="M8 1 H16 V7 H8 Z" fill="#000090"/><path d="M0 10 H4 V15 L0 14 Z" fill="#000070"/><path d="M5.6 0 L6.4 5.8 Q6.8 7.8 9.2 8.5 Q6.8 9.2 6.4 11.2 L5.6 16 L4.8 11.2 Q4.4 9.2 2.0 8.5 Q4.4 7.8 4.8 5.8 Z" fill="#ffff00"/><circle cx="1.5" cy="2.5" r="0.5" fill="#aac"/><circle cx="2" cy="12.5" r="0.5" fill="#aac"/><circle cx="8.6" cy="13.6" r="0.6" fill="#ccf"/><rect x="0" y="7.9" width="16" height="1.3" fill="#ffff00"/><circle cx="10.6" cy="1.9" r="0.7" fill="#fff"/><circle cx="12.6" cy="1.9" r="0.7" fill="#fff"/><circle cx="14.6" cy="2.9" r="0.7" fill="#fff"/><circle cx="10.6" cy="13.6" r="0.7" fill="#fff"/><circle cx="12.6" cy="13.2" r="0.7" fill="#fff"/><circle cx="14.6" cy="13.6" r="0.7" fill="#fff"/></svg>
<div class="t" style="left:771.0px;top:15.0px;font-size:13px;color:#8a8a8a;font-family:'Liberation Sans',sans-serif;transform:scaleX(0.940);transform-origin:0 0;">Operation guide</div>
<svg style="position:absolute;left:900px;top:9px" width="130" height="25"><line x1="11" y1="12.5" x2="21" y2="12.5" stroke="#999" stroke-width="1"/><rect x="55.5" y="7.5" width="10" height="10" stroke="#999" fill="none"/><path d="M101 8 L111 18 M111 8 L101 18" stroke="#999" stroke-width="1"/></svg>
<div style="position:absolute;left:748px;top:34px;width:208px;height:241px;background:#fff;"></div>
<svg style="position:absolute;left:21px;top:58px" width="720" height="272" viewBox="21 58 720 272"><defs><linearGradient id="vg" x1="0" y1="0" x2="1" y2="0"><stop offset="0" stop-color="#020202"/><stop offset="0.832" stop-color="#040404"/><stop offset="0.849" stop-color="#090909"/><stop offset="0.87" stop-color="#1a1a1a"/><stop offset="0.893" stop-color="#2a2a2a"/><stop offset="0.9375" stop-color="#3a3a3a"/><stop offset="0.983" stop-color="#4a4a4a"/><stop offset="1" stop-color="#4e4e4e"/></linearGradient><filter id="nz" x="0" y="0" width="100%" height="100%"><feTurbulence type="fractalNoise" baseFrequency="0.9" numOctaves="1" seed="3"/><feColorMatrix values="0 0 0 0 0.5  0 0 0 0 0.5  0 0 0 0 0.5  0 0 0 0.07 0"/></filter><radialGradient id="st"><stop offset="0" stop-color="#fff" stop-opacity="1"/><stop offset="0.35" stop-color="#ccc" stop-opacity="0.8"/><stop offset="1" stop-color="#555" stop-opacity="0"/></radialGradient><radialGradient id="fs"><stop offset="0" stop-color="#4a4a4a" stop-opacity="0.8"/><stop offset="1" stop-color="#222" stop-opacity="0"/></radialGradient></defs><rect x="21" y="58" width="720" height="272" fill="url(#vg)"/><rect x="21" y="58" width="720" height="272" filter="url(#nz)" opacity="0.6"/><circle cx="297" cy="69" r="2.5" fill="url(#fs)"/><circle cx="334" cy="70" r="2" fill="url(#fs)"/><circle cx="120" cy="80" r="2.5" fill="url(#fs)"/><circle cx="522" cy="67" r="2" fill="url(#fs)"/><circle cx="180" cy="104" r="2" fill="url(#fs)"/><circle cx="409" cy="104" r="2" fill="url(#fs)"/><circle cx="334" cy="220" r="2.5" fill="url(#fs)"/><circle cx="399" cy="229" r="2" fill="url(#fs)"/><circle cx="305" cy="254" r="2.5" fill="url(#fs)"/><circle cx="68" cy="292" r="2.5" fill="url(#fs)"/><circle cx="222" cy="322" r="2" fill="url(#fs)"/><circle cx="509" cy="316" r="2" fill="url(#fs)"/><circle cx="247" cy="127" r="2" fill="url(#fs)"/><circle cx="190" cy="300" r="2" fill="url(#fs)"/><circle cx="600" cy="110" r="2" fill="url(#fs)"/><circle cx="335.5" cy="143.5" r="3" fill="url(#fs)"/><circle cx="319.5" cy="127.5" r="4" fill="url(#st)"/><circle cx="142.5" cy="246" r="4" fill="url(#st)"/><circle cx="117.5" cy="115.4" r="25.3" fill="none" stroke="#9a1c9a" stroke-width="1"/><polygon points="121.4,117.0 119.1,119.3 115.9,119.3 113.6,117.0 113.6,113.8 115.9,111.5 119.1,111.5 121.4,113.8" fill="none" stroke="#c0003c" stroke-width="1.3"/><circle cx="319.5" cy="127.5" r="25.3" fill="none" stroke="#9a8c00" stroke-width="1"/><polygon points="327.4,130.8 322.8,135.4 316.2,135.4 311.6,130.8 311.6,124.2 316.2,119.6 322.8,119.6 327.4,124.2" fill="none" stroke="#b04000" stroke-width="1.3"/><circle cx="142.5" cy="246" r="25.3" fill="none" stroke="#00e0e8" stroke-width="1.1"/><polygon points="150.8,249.4 145.9,254.3 139.1,254.3 134.2,249.4 134.2,242.6 139.1,237.7 145.9,237.7 150.8,242.6" fill="none" stroke="#00c8d0" stroke-width="1"/><polygon points="149.9,249.1 145.6,253.4 139.4,253.4 135.1,249.1 135.1,242.9 139.4,238.6 145.6,238.6 149.9,242.9" fill="none" stroke="#e00000" stroke-width="1"/><rect x="713.5" y="238.5" width="15" height="15" fill="none" stroke="#e010e0" stroke-width="1.2"/><rect x="21" y="58" width="3" height="2" fill="#00ff00"/></svg>
<div class="t" style="left:21.8px;top:59.2px;font-size:15px;color:#fff;font-family:'Liberation Serif',serif;font-size:15.5px;-webkit-text-stroke:0.45px #fff;letter-spacing:0;"><span style="display:inline-block;width:7.97px;text-align:center;">2</span><span style="display:inline-block;width:7.97px;text-align:center;">0</span><span style="display:inline-block;width:7.97px;text-align:center;">2</span><span style="display:inline-block;width:7.97px;text-align:center;">5</span><span style="display:inline-block;width:7.97px;text-align:center;">&nbsp;</span><span style="display:inline-block;width:7.97px;text-align:center;">1</span><span style="display:inline-block;width:7.97px;text-align:center;">1</span><span style="display:inline-block;width:7.97px;text-align:center;">&nbsp;</span><span style="display:inline-block;width:7.97px;text-align:center;">1</span><span style="display:inline-block;width:7.97px;text-align:center;">9</span><span style="display:inline-block;width:7.97px;text-align:center;">&nbsp;</span><span style="display:inline-block;width:7.97px;text-align:center;">1</span><span style="display:inline-block;width:7.97px;text-align:center;">3</span><span style="display:inline-block;width:7.97px;text-align:center;">:</span><span style="display:inline-block;width:7.97px;text-align:center;">3</span><span style="display:inline-block;width:7.97px;text-align:center;">4</span><span style="display:inline-block;width:7.97px;text-align:center;">:</span><span style="display:inline-block;width:7.97px;text-align:center;">3</span><span style="display:inline-block;width:7.97px;text-align:center;">6</span><span style="display:inline-block;width:7.97px;text-align:center;">:</span><span style="display:inline-block;width:7.97px;text-align:center;">2</span><span style="display:inline-block;width:7.97px;text-align:center;">3</span><span style="display:inline-block;width:7.97px;text-align:center;">0</span></div>
<svg style="position:absolute;left:748px;top:34px" width="208" height="241" viewBox="748 34 208 241"><line x1="777" y1="62" x2="947" y2="62" stroke="#00ff00" stroke-width="1.3"/><line x1="777" y1="254.2" x2="947" y2="254.2" stroke="#808080" stroke-width="1.2"/><polyline points="777.2,168.0 778.2,168.1 779.2,168.2 780.2,168.5 781.2,168.8 782.2,169.3 783.2,169.9 784.2,170.6 785.2,171.3 786.2,172.2 787.2,173.1 788.2,174.2 789.2,175.3 790.2,176.5 791.2,177.8 792.2,179.2 793.2,180.6 794.2,182.0 795.2,183.6 796.2,185.2 797.2,186.8 798.2,188.5 799.2,190.2 800.2,191.9 801.2,193.7 802.2,195.5 803.2,197.3 804.2,199.1 805.2,200.9 806.2,202.7 807.2,204.6 808.2,206.4 809.2,208.2 810.2,210.0 811.2,211.7 812.2,213.5 813.2,215.2 814.2,216.9 815.2,218.5 816.2,220.1 817.2,221.7 818.2,223.3 819.2,224.8 820.2,226.2 821.2,227.7 822.2,229.0 823.2,230.4 824.2,231.6 825.2,232.9 826.2,234.0 827.2,235.2 828.2,236.3 829.2,237.3 830.2,238.3 831.2,239.3 832.2,240.2 833.2,241.0 834.2,241.8 835.2,242.6 836.2,243.3 837.2,244.0 838.2,244.7 839.2,245.3 840.2,245.9 841.2,246.4 842.2,246.9 843.2,247.4 844.2,247.9 845.2,248.3 846.2,248.7 847.2,249.0 848.2,249.4 849.2,249.7 850.2,250.0 851.2,250.2 852.2,250.5 853.2,250.7 854.2,250.9 855.2,251.1 856.2,251.3 857.2,251.4 858.2,251.6 859.2,251.7 860.2,251.9 861.2,252.0 862.2,252.1 863.2,252.2 864.2,252.3 865.2,252.3 866.2,252.4 867.2,252.5 868.2,252.5 869.2,252.6 870.2,252.6 871.2,252.7 872.2,252.7 873.2,252.7 874.2,252.8 875.2,252.8 876.2,252.8 877.2,252.8 878.2,252.9 879.2,252.9 880.2,252.9 881.2,252.9 882.2,252.9 883.2,252.9 884.2,252.9 885.2,252.9 886.2,252.9 887.2,253.0 888.2,253.0 889.2,253.0 890.2,253.0 891.2,253.0 892.2,253.0 893.2,253.0 894.2,253.0 895.2,253.0 896.2,253.0 897.2,253.0 898.2,253.0 899.2,253.0 900.2,253.0 901.2,253.0 902.2,253.0 903.2,253.0 904.2,253.0 905.2,253.0 906.2,253.0 907.2,253.0 908.2,253.0 909.2,253.0 910.2,253.0 911.2,253.0 912.2,253.0 913.2,253.0 914.2,253.0 915.2,253.0 916.2,253.0 917.2,253.0 918.2,253.0 919.2,253.0 920.2,253.0 921.2,253.0 922.2,253.0 923.2,253.0 924.2,253.0 925.2,253.0 926.2,253.0 927.2,253.0 928.2,253.0 929.2,253.0 930.2,253.0 931.2,253.0 932.2,253.0 933.2,253.0 934.2,253.0 935.2,253.0 936.2,253.0 937.2,253.0 938.2,253.0 939.2,253.0 940.2,253.0 941.2,253.0" fill="none" stroke="#ff0000" stroke-width="1.1"/><circle cx="776.8" cy="168.7" r="2" fill="none" stroke="#0000ff" stroke-width="1"/><circle cx="791.9" cy="171.0" r="2" fill="none" stroke="#0000ff" stroke-width="1"/><circle cx="791.9" cy="174.0" r="2" fill="none" stroke="#0000ff" stroke-width="1"/><circle cx="797.9" cy="178.0" r="2" fill="none" stroke="#0000ff" stroke-width="1"/><circle cx="791.9" cy="189.3" r="2" fill="none" stroke="#0000ff" stroke-width="1"/><circle cx="791.9" cy="191.9" r="2" fill="none" stroke="#0000ff" stroke-width="1"/><circle cx="797.9" cy="191.6" r="2" fill="none" stroke="#0000ff" stroke-width="1"/><circle cx="806.9" cy="189.9" r="2" fill="none" stroke="#0000ff" stroke-width="1"/><circle cx="810.9" cy="195.7" r="2" fill="none" stroke="#0000ff" stroke-width="1"/><circle cx="810.9" cy="197.9" r="2" fill="none" stroke="#0000ff" stroke-width="1"/><circle cx="806.9" cy="197.9" r="2" fill="none" stroke="#0000ff" stroke-width="1"/><circle cx="810.9" cy="202.9" r="2" fill="none" stroke="#0000ff" stroke-width="1"/><circle cx="797.9" cy="208.0" r="2" fill="none" stroke="#0000ff" stroke-width="1"/><circle cx="810.9" cy="208.9" r="2" fill="none" stroke="#0000ff" stroke-width="1"/><circle cx="818.9" cy="211.0" r="2" fill="none" stroke="#0000ff" stroke-width="1"/><circle cx="806.9" cy="215.9" r="2" fill="none" stroke="#0000ff" stroke-width="1"/><circle cx="810.9" cy="215.9" r="2" fill="none" stroke="#0000ff" stroke-width="1"/><circle cx="821.9" cy="217.0" r="2" fill="none" stroke="#0000ff" stroke-width="1"/><circle cx="824.1" cy="220.1" r="2" fill="none" stroke="#0000ff" stroke-width="1"/><circle cx="810.9" cy="221.9" r="2" fill="none" stroke="#0000ff" stroke-width="1"/><circle cx="821.9" cy="221.9" r="2" fill="none" stroke="#0000ff" stroke-width="1"/><circle cx="806.9" cy="223.9" r="2" fill="none" stroke="#0000ff" stroke-width="1"/><circle cx="824.1" cy="223.9" r="2" fill="none" stroke="#0000ff" stroke-width="1"/><circle cx="818.9" cy="226.0" r="2" fill="none" stroke="#0000ff" stroke-width="1"/><circle cx="810.9" cy="226.9" r="2" fill="none" stroke="#0000ff" stroke-width="1"/><circle cx="824.1" cy="227.9" r="2" fill="none" stroke="#0000ff" stroke-width="1"/><circle cx="830.9" cy="227.9" r="2" fill="none" stroke="#0000ff" stroke-width="1"/><circle cx="810.9" cy="231.9" r="2" fill="none" stroke="#0000ff" stroke-width="1"/><circle cx="821.9" cy="233.9" r="2" fill="none" stroke="#0000ff" stroke-width="1"/><circle cx="824.1" cy="233.9" r="2" fill="none" stroke="#0000ff" stroke-width="1"/><circle cx="830.9" cy="236.1" r="2" fill="none" stroke="#0000ff" stroke-width="1"/><circle cx="818.9" cy="239.9" r="2" fill="none" stroke="#0000ff" stroke-width="1"/><circle cx="824.1" cy="239.1" r="2" fill="none" stroke="#0000ff" stroke-width="1"/><circle cx="821.9" cy="241.4" r="2" fill="none" stroke="#0000ff" stroke-width="1"/><circle cx="830.9" cy="240.9" r="2" fill="none" stroke="#0000ff" stroke-width="1"/><circle cx="824.1" cy="243.9" r="2" fill="none" stroke="#0000ff" stroke-width="1"/><circle cx="830.9" cy="245.9" r="2" fill="none" stroke="#0000ff" stroke-width="1"/><circle cx="836.9" cy="236.9" r="2" fill="none" stroke="#0000ff" stroke-width="1"/><circle cx="840.9" cy="236.9" r="2" fill="none" stroke="#0000ff" stroke-width="1"/><circle cx="839.1" cy="239.9" r="2" fill="none" stroke="#0000ff" stroke-width="1"/><circle cx="843.9" cy="239.1" r="2" fill="none" stroke="#0000ff" stroke-width="1"/><circle cx="836.9" cy="242.9" r="2" fill="none" stroke="#0000ff" stroke-width="1"/><circle cx="840.9" cy="242.9" r="2" fill="none" stroke="#0000ff" stroke-width="1"/><circle cx="843.9" cy="244.4" r="2" fill="none" stroke="#0000ff" stroke-width="1"/><circle cx="836.9" cy="247.4" r="2" fill="none" stroke="#0000ff" stroke-width="1"/><circle cx="840.9" cy="248.9" r="2" fill="none" stroke="#0000ff" stroke-width="1"/><circle cx="843.9" cy="248.9" r="2" fill="none" stroke="#0000ff" stroke-width="1"/><circle cx="839.1" cy="245.9" r="2" fill="none" stroke="#0000ff" stroke-width="1"/><circle cx="851.8" cy="244.1" r="2" fill="none" stroke="#0000ff" stroke-width="1"/><circle cx="851.8" cy="247.4" r="2" fill="none" stroke="#0000ff" stroke-width="1"/><circle cx="851.8" cy="250.4" r="2" fill="none" stroke="#0000ff" stroke-width="1"/><circle cx="857.4" cy="245.9" r="2" fill="none" stroke="#0000ff" stroke-width="1"/><circle cx="857.4" cy="248.9" r="2" fill="none" stroke="#0000ff" stroke-width="1"/><circle cx="861.9" cy="245.9" r="2" fill="none" stroke="#0000ff" stroke-width="1"/><circle cx="861.9" cy="249.6" r="2" fill="none" stroke="#0000ff" stroke-width="1"/><circle cx="866.8" cy="245.9" r="2" fill="none" stroke="#0000ff" stroke-width="1"/><circle cx="864.9" cy="251.9" r="2" fill="none" stroke="#0000ff" stroke-width="1"/><circle cx="867.9" cy="248.9" r="2" fill="none" stroke="#0000ff" stroke-width="1"/><circle cx="870.9" cy="248.9" r="2" fill="none" stroke="#0000ff" stroke-width="1"/><circle cx="872.4" cy="251.9" r="2" fill="none" stroke="#0000ff" stroke-width="1"/><circle cx="878.4" cy="251.1" r="2" fill="none" stroke="#0000ff" stroke-width="1"/><circle cx="882.1" cy="249.6" r="2" fill="none" stroke="#0000ff" stroke-width="1"/><circle cx="884.3" cy="251.9" r="2" fill="none" stroke="#0000ff" stroke-width="1"/><circle cx="891.8" cy="250.4" r="2" fill="none" stroke="#0000ff" stroke-width="1"/><circle cx="894.8" cy="249.6" r="2" fill="none" stroke="#0000ff" stroke-width="1"/><circle cx="897.1" cy="251.1" r="2" fill="none" stroke="#0000ff" stroke-width="1"/><circle cx="843.9" cy="242.1" r="2" fill="none" stroke="#0000ff" stroke-width="1"/><circle cx="827.4" cy="236.9" r="2" fill="none" stroke="#0000ff" stroke-width="1"/></svg>
<div style="position:absolute;left:959px;top:225px;width:67px;height:50px;border:1px solid #a0a0a0;box-shadow:1px 1px 0 #fff, inset 1px 1px 0 #fff;"></div>
<div style="position:absolute;left:966.0px;top:224px;width:42.0px;height:3px;background:#f0f0f0;"></div>
<div class="t" style="left:967.0px;top:219.8px;font-size:13px;color:#000;font-family:'Liberation Sans',sans-serif;transform:scaleX(0.954);transform-origin:0 0;">Control</div>
<svg style="position:absolute;left:968px;top:239px" width="12" height="12"><circle cx="6" cy="6" r="5.2" fill="#fff" stroke="#f4f4f4" stroke-width="1"/><path d="M2.3 9.7 A5.2 5.2 0 0 1 9.7 2.3" stroke="#a0a0a0" stroke-width="1.1" fill="none"/><path d="M3.0 9.0 A4.2 4.2 0 0 1 9.0 3.0" stroke="#696969" stroke-width="1" fill="none"/><circle cx="6" cy="6" r="2" fill="#000"/></svg>
<div class="t" style="left:986.0px;top:238.0px;font-size:13px;color:#000;font-family:'Liberation Sans',sans-serif;transform:scaleX(1.009);transform-origin:0 0;">Hide</div>
<svg style="position:absolute;left:968px;top:257px" width="12" height="12"><circle cx="6" cy="6" r="5.2" fill="#fff" stroke="#f4f4f4" stroke-width="1"/><path d="M2.3 9.7 A5.2 5.2 0 0 1 9.7 2.3" stroke="#a0a0a0" stroke-width="1.1" fill="none"/><path d="M3.0 9.0 A4.2 4.2 0 0 1 9.0 3.0" stroke="#696969" stroke-width="1" fill="none"/></svg>
<div class="t" style="left:986.0px;top:256.7px;font-size:13px;color:#000;font-family:'Liberation Sans',sans-serif;transform:scaleX(0.984);transform-origin:0 0;">Show</div>
<div style="position:absolute;left:1040px;top:9px;width:754px;height:712px;background:#f0f0f0;border-radius:8px 8px 8px 8px;box-shadow:0 8px 26px rgba(0,0,0,0.32), 0 0 6px rgba(0,0,0,0.25);"></div>
<div style="position:absolute;left:1040px;top:9px;width:754px;height:25px;background:#f3f3f3;border-radius:7px 7px 0 0;"></div>
<svg style="position:absolute;left:1043px;top:13px" width="16" height="16" viewBox="0 0 16 16"><path d="M0 0.5 H5 L6 0 H16 V16 H4 L0 14 Z" fill="#0000c8"/><path d="M8 1 H16 V7 H8 Z" fill="#000090"/><path d="M0 10 H4 V15 L0 14 Z" fill="#000070"/><path d="M5.6 0 L6.4 5.8 Q6.8 7.8 9.2 8.5 Q6.8 9.2 6.4 11.2 L5.6 16 L4.8 11.2 Q4.4 9.2 2.0 8.5 Q4.4 7.8 4.8 5.8 Z" fill="#ffff00"/><circle cx="1.5" cy="2.5" r="0.5" fill="#aac"/><circle cx="2" cy="12.5" r="0.5" fill="#aac"/><circle cx="8.6" cy="13.6" r="0.6" fill="#ccf"/><rect x="0" y="7.9" width="16" height="1.3" fill="#ffff00"/><circle cx="10.6" cy="1.9" r="0.7" fill="#fff"/><circle cx="12.6" cy="1.9" r="0.7" fill="#fff"/><circle cx="14.6" cy="2.9" r="0.7" fill="#fff"/><circle cx="10.6" cy="13.6" r="0.7" fill="#fff"/><circle cx="12.6" cy="13.2" r="0.7" fill="#fff"/><circle cx="14.6" cy="13.6" r="0.7" fill="#fff"/></svg>
<div class="t" style="left:1064.0px;top:15.0px;font-size:13px;color:#333;font-family:'Liberation Sans',sans-serif;transform:scaleX(0.941);transform-origin:0 0;">Graph</div>
<svg style="position:absolute;left:1664px;top:9px" width="130" height="25"><line x1="11" y1="12.5" x2="21" y2="12.5" stroke="#333" stroke-width="1"/><rect x="55.5" y="7.5" width="10" height="10" stroke="#333" fill="none"/><path d="M101 8 L111 18 M111 8 L101 18" stroke="#333" stroke-width="1"/></svg>
<div style="position:absolute;left:1048px;top:37px;width:741px;height:425px;background:#fff;"></div>
<svg style="position:absolute;left:0;top:0" width="1803" height="801" viewBox="0 0 1803 801"><line x1="1099" y1="338.2" x2="1778" y2="338.2" stroke="#00ffff" stroke-width="1" shape-rendering="crispEdges"/><line x1="1099" y1="254.8" x2="1778" y2="254.8" stroke="#00ffff" stroke-width="1" shape-rendering="crispEdges"/><line x1="1099" y1="171.3" x2="1778" y2="171.3" stroke="#00ffff" stroke-width="1" shape-rendering="crispEdges"/><line x1="1098.5" y1="57" x2="1098.5" y2="421" stroke="#000" stroke-width="1.3"/><line x1="1099.0" y1="421" x2="1099.0" y2="426.5" stroke="#000" stroke-width="1.1"/><line x1="1111.7" y1="421" x2="1111.7" y2="426.5" stroke="#000" stroke-width="1.1"/><line x1="1124.5" y1="421" x2="1124.5" y2="426.5" stroke="#000" stroke-width="1.1"/><line x1="1137.2" y1="421" x2="1137.2" y2="426.5" stroke="#000" stroke-width="1.1"/><line x1="1150.0" y1="421" x2="1150.0" y2="426.5" stroke="#000" stroke-width="1.1"/><line x1="1162.7" y1="421" x2="1162.7" y2="426.5" stroke="#000" stroke-width="1.1"/><line x1="1175.4" y1="421" x2="1175.4" y2="426.5" stroke="#000" stroke-width="1.1"/><line x1="1188.2" y1="421" x2="1188.2" y2="426.5" stroke="#000" stroke-width="1.1"/><line x1="1200.9" y1="421" x2="1200.9" y2="426.5" stroke="#000" stroke-width="1.1"/><line x1="1213.7" y1="421" x2="1213.7" y2="426.5" stroke="#000" stroke-width="1.1"/><line x1="1226.4" y1="421" x2="1226.4" y2="426.5" stroke="#000" stroke-width="1.1"/><line x1="1239.1" y1="421" x2="1239.1" y2="426.5" stroke="#000" stroke-width="1.1"/><line x1="1251.9" y1="421" x2="1251.9" y2="426.5" stroke="#000" stroke-width="1.1"/><line x1="1264.6" y1="421" x2="1264.6" y2="426.5" stroke="#000" stroke-width="1.1"/><line x1="1277.4" y1="421" x2="1277.4" y2="426.5" stroke="#000" stroke-width="1.1"/><line x1="1290.1" y1="421" x2="1290.1" y2="426.5" stroke="#000" stroke-width="1.1"/><line x1="1302.8" y1="421" x2="1302.8" y2="426.5" stroke="#000" stroke-width="1.1"/><line x1="1315.6" y1="421" x2="1315.6" y2="426.5" stroke="#000" stroke-width="1.1"/><line x1="1328.3" y1="421" x2="1328.3" y2="426.5" stroke="#000" stroke-width="1.1"/><line x1="1341.1" y1="421" x2="1341.1" y2="426.5" stroke="#000" stroke-width="1.1"/><line x1="1353.8" y1="421" x2="1353.8" y2="426.5" stroke="#000" stroke-width="1.1"/><line x1="1366.5" y1="421" x2="1366.5" y2="426.5" stroke="#000" stroke-width="1.1"/><line x1="1379.3" y1="421" x2="1379.3" y2="426.5" stroke="#000" stroke-width="1.1"/><line x1="1392.0" y1="421" x2="1392.0" y2="426.5" stroke="#000" stroke-width="1.1"/><line x1="1404.8" y1="421" x2="1404.8" y2="426.5" stroke="#000" stroke-width="1.1"/><line x1="1417.5" y1="421" x2="1417.5" y2="426.5" stroke="#000" stroke-width="1.1"/><line x1="1430.2" y1="421" x2="1430.2" y2="426.5" stroke="#000" stroke-width="1.1"/><line x1="1443.0" y1="421" x2="1443.0" y2="426.5" stroke="#000" stroke-width="1.1"/><line x1="1455.7" y1="421" x2="1455.7" y2="426.5" stroke="#000" stroke-width="1.1"/><line x1="1468.5" y1="421" x2="1468.5" y2="426.5" stroke="#000" stroke-width="1.1"/><line x1="1481.2" y1="421" x2="1481.2" y2="426.5" stroke="#000" stroke-width="1.1"/><line x1="1493.9" y1="421" x2="1493.9" y2="426.5" stroke="#000" stroke-width="1.1"/><line x1="1506.7" y1="421" x2="1506.7" y2="426.5" stroke="#000" stroke-width="1.1"/><line x1="1519.4" y1="421" x2="1519.4" y2="426.5" stroke="#000" stroke-width="1.1"/><line x1="1532.2" y1="421" x2="1532.2" y2="426.5" stroke="#000" stroke-width="1.1"/><line x1="1544.9" y1="421" x2="1544.9" y2="426.5" stroke="#000" stroke-width="1.1"/><line x1="1557.6" y1="421" x2="1557.6" y2="426.5" stroke="#000" stroke-width="1.1"/><line x1="1570.4" y1="421" x2="1570.4" y2="426.5" stroke="#000" stroke-width="1.1"/><line x1="1583.1" y1="421" x2="1583.1" y2="426.5" stroke="#000" stroke-width="1.1"/><line x1="1595.9" y1="421" x2="1595.9" y2="426.5" stroke="#000" stroke-width="1.1"/><line x1="1608.6" y1="421" x2="1608.6" y2="426.5" stroke="#000" stroke-width="1.1"/><line x1="1621.3" y1="421" x2="1621.3" y2="426.5" stroke="#000" stroke-width="1.1"/><line x1="1634.1" y1="421" x2="1634.1" y2="426.5" stroke="#000" stroke-width="1.1"/><line x1="1646.8" y1="421" x2="1646.8" y2="426.5" stroke="#000" stroke-width="1.1"/><line x1="1659.6" y1="421" x2="1659.6" y2="426.5" stroke="#000" stroke-width="1.1"/><line x1="1672.3" y1="421" x2="1672.3" y2="426.5" stroke="#000" stroke-width="1.1"/><line x1="1685.0" y1="421" x2="1685.0" y2="426.5" stroke="#000" stroke-width="1.1"/><line x1="1697.8" y1="421" x2="1697.8" y2="426.5" stroke="#000" stroke-width="1.1"/><line x1="1710.5" y1="421" x2="1710.5" y2="426.5" stroke="#000" stroke-width="1.1"/><line x1="1723.3" y1="421" x2="1723.3" y2="426.5" stroke="#000" stroke-width="1.1"/><line x1="1736.0" y1="421" x2="1736.0" y2="426.5" stroke="#000" stroke-width="1.1"/><line x1="1748.7" y1="421" x2="1748.7" y2="426.5" stroke="#000" stroke-width="1.1"/><line x1="1761.5" y1="421" x2="1761.5" y2="426.5" stroke="#000" stroke-width="1.1"/><line x1="1774.2" y1="421" x2="1774.2" y2="426.5" stroke="#000" stroke-width="1.1"/><polyline points="1099.0,421.4 1100.3,421.1 1101.5,421.5 1102.8,421.3 1104.1,420.7 1105.4,420.9 1106.6,421.4 1107.9,420.7 1109.2,420.6 1110.5,420.6 1111.7,421.2 1113.0,421.6 1114.3,421.5 1115.6,421.4 1116.8,420.7 1118.1,421.5 1119.4,420.8 1120.7,420.8 1121.9,420.8 1123.2,421.5 1124.5,420.8 1125.8,421.4 1127.0,420.7 1128.3,421.3 1129.6,421.5 1130.8,421.0 1132.1,421.2 1133.4,421.4 1134.7,420.7 1135.9,421.2 1137.2,420.8 1138.5,420.5 1139.8,420.5 1141.0,421.1 1142.3,420.5 1143.6,420.9 1144.9,421.2 1146.1,420.9 1147.4,421.3 1148.7,420.6 1150.0,421.3 1151.2,421.2 1152.5,420.6 1153.8,420.9 1155.1,420.4 1156.3,421.2 1157.6,420.6 1158.9,421.5 1160.2,420.5 1161.4,421.1 1162.7,420.9 1164.0,420.9 1165.2,421.4 1166.5,420.9 1167.8,421.2 1169.1,421.4 1170.3,421.4 1171.6,421.3 1172.9,421.6 1174.2,421.5 1175.4,420.9 1176.7,420.6 1178.0,420.5 1179.3,420.6 1180.5,421.2 1181.8,421.0 1183.1,421.0 1184.4,420.6 1185.6,420.9 1186.9,420.7 1188.2,420.5 1189.5,421.0 1190.7,420.6 1192.0,420.8 1193.3,420.9 1194.5,420.9 1195.8,420.7 1197.1,421.3 1198.4,421.5 1199.6,421.1 1200.9,421.5 1202.2,421.5 1203.5,420.4 1204.7,421.3 1206.0,421.6 1207.3,420.7 1208.6,421.3 1209.8,421.1 1211.1,421.6 1212.4,421.0 1213.7,421.5 1214.9,420.9 1216.2,420.5 1217.5,421.0 1218.8,420.9 1220.0,420.5 1221.3,420.8 1222.6,420.6 1223.9,421.5 1225.1,421.5 1226.4,421.0 1227.7,421.5 1228.9,420.9 1230.2,421.2 1231.5,421.2 1232.8,421.6 1234.0,421.2 1235.3,420.7 1236.6,421.0 1237.9,421.4 1239.1,421.3 1240.4,420.7 1241.7,421.5 1243.0,421.0 1244.2,421.4 1245.5,421.5 1246.8,421.4 1248.1,420.6 1249.3,420.9 1250.6,420.5 1251.9,420.7 1253.2,420.5 1254.4,420.7 1255.7,420.5 1257.0,421.3 1258.2,421.6 1259.5,421.3 1260.8,421.4 1262.1,421.2 1263.3,421.0 1264.6,420.9 1265.9,420.4 1267.2,421.3 1268.4,420.6 1269.7,421.5 1271.0,420.7 1272.3,421.0 1273.5,421.2 1274.8,420.9 1276.1,420.9 1277.4,421.6 1278.6,421.4 1279.9,420.6 1281.2,421.2 1282.5,421.3 1283.7,420.8 1285.0,420.5 1286.3,421.1 1287.6,420.9 1288.8,420.9 1290.1,421.2 1291.4,420.5 1292.6,421.1 1293.9,421.4 1295.2,421.4 1296.5,421.3 1297.7,420.6 1299.0,420.8 1300.3,420.8 1301.6,421.6 1302.8,421.4 1304.1,421.1 1305.4,420.7 1306.7,421.2 1307.9,421.5 1309.2,421.6 1310.5,421.5 1311.8,420.7 1313.0,421.6 1314.3,421.2 1315.6,421.4 1316.9,420.6 1318.1,421.5 1319.4,421.5 1320.7,421.2 1322.0,421.2 1323.2,421.1 1324.5,420.8 1325.8,421.4 1327.0,421.3 1328.3,421.2 1329.6,421.1 1330.9,421.4 1332.1,420.9 1333.4,421.3 1334.7,421.2 1336.0,421.5 1337.2,420.9 1338.5,421.5 1339.8,420.7 1341.1,421.0 1342.3,421.0 1343.6,421.5 1344.9,421.2 1346.2,420.8 1347.4,420.6 1348.7,421.0 1350.0,420.9 1351.3,420.8 1352.5,420.9 1353.8,421.1 1355.1,421.2 1356.3,420.5 1357.6,420.5 1358.9,421.3 1360.2,420.9 1361.4,421.4 1362.7,420.6 1364.0,421.4 1365.3,421.3 1366.5,421.1 1367.8,421.5 1369.1,420.6 1370.4,421.1 1371.6,421.6 1372.9,420.6 1374.2,420.7 1375.5,421.3 1376.7,420.7 1378.0,421.3 1379.3,420.4 1380.6,420.5 1381.8,421.1 1383.1,420.8 1384.4,421.3 1385.7,421.2 1386.9,421.1 1388.2,420.5 1389.5,420.9 1390.7,420.5 1392.0,420.9 1393.3,420.8 1394.6,420.7 1395.8,420.7 1397.1,421.5 1398.4,420.7 1399.7,421.4 1400.9,420.5 1402.2,421.2 1403.5,420.9 1404.8,420.9 1406.0,420.6 1407.3,421.2 1408.6,420.7 1409.9,420.9 1411.1,420.8 1412.4,421.0 1413.7,420.7 1415.0,420.6 1416.2,421.4 1417.5,421.2 1418.8,421.3 1420.0,421.3 1421.3,420.7 1422.6,421.5 1423.9,421.1 1425.1,420.4 1426.4,421.1 1427.7,421.3 1429.0,420.5 1430.2,421.2 1431.5,420.9 1432.8,420.6 1434.1,421.0 1435.3,421.3 1436.6,421.4 1437.9,421.5 1439.2,420.9 1440.4,420.5 1441.7,421.3 1443.0,420.9 1444.3,421.2 1445.5,421.1 1446.8,421.0 1448.1,421.2 1449.3,421.2 1450.6,421.5 1451.9,421.1 1453.2,420.9 1454.4,421.1 1455.7,421.6 1457.0,420.8 1458.3,420.4 1459.5,420.5 1460.8,421.4 1462.1,421.6 1463.4,420.9 1464.6,420.6 1465.9,420.7 1467.2,421.0 1468.5,421.3 1469.7,421.1 1471.0,421.4 1472.3,421.6 1473.6,420.8 1474.8,420.8 1476.1,420.5 1477.4,421.6 1478.7,421.5 1479.9,420.9 1481.2,421.5 1482.5,421.4 1483.7,421.3 1485.0,421.3 1486.3,421.2 1487.6,421.1 1488.8,420.7 1490.1,420.9 1491.4,420.8 1492.7,421.1 1493.9,420.7 1495.2,421.4 1496.5,420.8 1497.8,420.5 1499.0,421.0 1500.3,421.6 1501.6,421.2 1502.9,420.8 1504.1,420.5 1505.4,420.5 1506.7,420.5 1508.0,421.4 1509.2,421.1 1510.5,421.1 1511.8,420.4 1513.0,420.9 1514.3,420.7 1515.6,421.3 1516.9,420.9 1518.1,420.7 1519.4,421.6 1520.7,420.4 1522.0,420.5 1523.2,421.2 1524.5,421.5 1525.8,420.8 1527.1,420.8 1528.3,420.6 1529.6,421.0 1530.9,421.2 1532.2,420.9 1533.4,420.4 1534.7,420.8 1536.0,421.2 1537.3,420.8 1538.5,421.2 1539.8,421.6 1541.1,420.9 1542.4,421.6 1543.6,420.4 1544.9,420.7 1546.2,420.5 1547.4,421.4 1548.7,420.8 1550.0,420.7 1551.3,420.7 1552.5,421.3 1553.8,420.4 1555.1,421.2 1556.4,420.5 1557.6,421.5 1558.9,421.1 1560.2,421.0 1561.5,420.4 1562.7,420.4 1564.0,420.9 1565.3,421.3 1566.6,421.2 1567.8,421.1 1569.1,420.7 1570.4,421.3 1571.7,421.1 1572.9,421.3 1574.2,421.4 1575.5,421.5 1576.8,420.6 1578.0,421.2 1579.3,421.4 1580.6,421.2 1581.8,421.0 1583.1,421.0 1584.4,420.5 1585.7,421.2 1586.9,421.4 1588.2,421.4 1589.5,420.8 1590.8,421.5 1592.0,420.9 1593.3,421.4 1594.6,421.4 1595.9,420.9 1597.1,421.2 1598.4,421.1 1599.7,421.4 1601.0,420.4 1602.2,420.6 1603.5,421.6 1604.8,421.4 1606.1,421.6 1607.3,421.2 1608.6,421.6 1609.9,421.3 1611.1,420.6 1612.4,421.3 1613.7,421.5 1615.0,421.5 1616.2,421.1 1617.5,421.5 1618.8,421.4 1620.1,420.4 1621.3,420.6 1622.6,421.5 1623.9,421.6 1625.2,420.8 1626.4,420.5 1627.7,421.3 1629.0,420.9 1630.3,421.6 1631.5,421.4 1632.8,420.5 1634.1,421.0 1635.4,421.0 1636.6,420.4 1637.9,421.5 1639.2,420.9 1640.5,420.9 1641.7,420.9 1643.0,421.3 1644.3,421.5 1645.5,420.6 1646.8,421.4 1648.1,421.1 1649.4,421.0 1650.6,420.5 1651.9,420.7 1653.2,421.5 1654.5,421.4 1655.7,421.0 1657.0,421.3 1658.3,420.7 1659.6,421.4 1660.8,421.3 1662.1,421.5 1663.4,421.0 1664.7,420.6 1665.9,421.3 1667.2,421.4 1668.5,421.3 1669.8,421.2 1671.0,421.4 1672.3,421.1 1673.6,420.5 1674.8,420.4 1676.1,420.9 1677.4,421.4 1678.7,420.8 1679.9,421.1 1681.2,420.8 1682.5,421.1 1683.8,420.8 1685.0,420.8 1686.3,421.0 1687.6,420.7 1688.9,421.5 1690.1,421.5 1691.4,420.8 1692.7,420.7 1694.0,421.3 1695.2,420.9 1696.5,421.4 1697.8,420.4 1699.1,421.3 1700.3,421.1 1701.6,421.4 1702.9,420.5 1704.2,420.5 1705.4,421.4 1706.7,421.4 1708.0,420.7 1709.2,421.1 1710.5,421.4 1711.8,420.9 1713.1,421.2 1714.3,420.5 1715.6,420.5 1716.9,421.6 1718.2,421.1 1719.4,420.5 1720.7,420.6 1722.0,420.5 1723.3,421.2 1724.5,420.5 1725.8,420.8 1727.1,420.9 1728.4,421.6 1729.6,420.8 1730.9,420.7 1732.2,421.0 1733.5,421.3 1734.7,421.6 1736.0,421.1 1737.3,420.5 1738.5,421.4 1739.8,420.5 1741.1,420.9 1742.4,420.8 1743.6,421.4 1744.9,420.9 1746.2,420.9 1747.5,420.4 1748.7,420.7 1750.0,421.6 1751.3,420.4 1752.6,420.5 1753.8,421.2 1755.1,421.1 1756.4,420.6 1757.7,420.6 1758.9,421.1 1760.2,420.6 1761.5,420.8 1762.8,420.6 1764.0,421.4 1765.3,421.4 1766.6,421.4 1767.8,420.9 1769.1,420.9 1770.4,421.0 1771.7,420.6 1772.9,421.6 1774.2,420.7 1775.5,421.4 1776.8,421.2" fill="none" stroke="#ff00ff" stroke-width="4"/><rect x="1097.0" y="418.9" width="4" height="2" fill="#ff00ff"/><rect x="1104.6" y="418.3" width="4" height="2" fill="#ff00ff"/><rect x="1108.5" y="418.7" width="4" height="2" fill="#ff00ff"/><rect x="1119.9" y="418.4" width="4" height="2" fill="#ff00ff"/><rect x="1127.6" y="418.4" width="4" height="2" fill="#ff00ff"/><rect x="1139.0" y="418.3" width="4" height="2" fill="#ff00ff"/><rect x="1142.9" y="418.3" width="4" height="2" fill="#ff00ff"/><rect x="1146.7" y="418.9" width="4" height="2" fill="#ff00ff"/><rect x="1150.5" y="418.2" width="4" height="2" fill="#ff00ff"/><rect x="1154.3" y="418.6" width="4" height="2" fill="#ff00ff"/><rect x="1158.2" y="418.1" width="4" height="2" fill="#ff00ff"/><rect x="1162.0" y="418.5" width="4" height="2" fill="#ff00ff"/><rect x="1165.8" y="418.4" width="4" height="2" fill="#ff00ff"/><rect x="1169.6" y="418.9" width="4" height="2" fill="#ff00ff"/><rect x="1173.4" y="418.2" width="4" height="2" fill="#ff00ff"/><rect x="1177.3" y="418.7" width="4" height="2" fill="#ff00ff"/><rect x="1184.9" y="418.8" width="4" height="2" fill="#ff00ff"/><rect x="1188.7" y="418.7" width="4" height="2" fill="#ff00ff"/><rect x="1192.5" y="418.2" width="4" height="2" fill="#ff00ff"/><rect x="1196.4" y="419.0" width="4" height="2" fill="#ff00ff"/><rect x="1200.2" y="419.0" width="4" height="2" fill="#ff00ff"/><rect x="1207.8" y="418.8" width="4" height="2" fill="#ff00ff"/><rect x="1211.7" y="418.5" width="4" height="2" fill="#ff00ff"/><rect x="1230.8" y="418.8" width="4" height="2" fill="#ff00ff"/><rect x="1234.6" y="418.4" width="4" height="2" fill="#ff00ff"/><rect x="1253.7" y="418.1" width="4" height="2" fill="#ff00ff"/><rect x="1261.3" y="419.0" width="4" height="2" fill="#ff00ff"/><rect x="1269.0" y="418.7" width="4" height="2" fill="#ff00ff"/><rect x="1272.8" y="418.9" width="4" height="2" fill="#ff00ff"/><rect x="1276.6" y="418.6" width="4" height="2" fill="#ff00ff"/><rect x="1280.5" y="418.9" width="4" height="2" fill="#ff00ff"/><rect x="1284.3" y="418.2" width="4" height="2" fill="#ff00ff"/><rect x="1288.1" y="418.9" width="4" height="2" fill="#ff00ff"/><rect x="1295.7" y="418.1" width="4" height="2" fill="#ff00ff"/><rect x="1299.6" y="418.6" width="4" height="2" fill="#ff00ff"/><rect x="1303.4" y="418.2" width="4" height="2" fill="#ff00ff"/><rect x="1307.2" y="418.6" width="4" height="2" fill="#ff00ff"/><rect x="1311.0" y="418.3" width="4" height="2" fill="#ff00ff"/><rect x="1322.5" y="418.7" width="4" height="2" fill="#ff00ff"/><rect x="1337.8" y="418.6" width="4" height="2" fill="#ff00ff"/><rect x="1341.6" y="418.8" width="4" height="2" fill="#ff00ff"/><rect x="1345.4" y="419.0" width="4" height="2" fill="#ff00ff"/><rect x="1353.1" y="418.5" width="4" height="2" fill="#ff00ff"/><rect x="1364.5" y="418.1" width="4" height="2" fill="#ff00ff"/><rect x="1383.7" y="418.2" width="4" height="2" fill="#ff00ff"/><rect x="1387.5" y="418.3" width="4" height="2" fill="#ff00ff"/><rect x="1391.3" y="418.6" width="4" height="2" fill="#ff00ff"/><rect x="1395.1" y="418.5" width="4" height="2" fill="#ff00ff"/><rect x="1406.6" y="418.9" width="4" height="2" fill="#ff00ff"/><rect x="1410.4" y="418.8" width="4" height="2" fill="#ff00ff"/><rect x="1433.3" y="418.7" width="4" height="2" fill="#ff00ff"/><rect x="1441.0" y="418.4" width="4" height="2" fill="#ff00ff"/><rect x="1444.8" y="418.5" width="4" height="2" fill="#ff00ff"/><rect x="1471.6" y="418.2" width="4" height="2" fill="#ff00ff"/><rect x="1483.0" y="418.8" width="4" height="2" fill="#ff00ff"/><rect x="1490.7" y="418.3" width="4" height="2" fill="#ff00ff"/><rect x="1494.5" y="419.0" width="4" height="2" fill="#ff00ff"/><rect x="1498.3" y="418.8" width="4" height="2" fill="#ff00ff"/><rect x="1502.1" y="418.4" width="4" height="2" fill="#ff00ff"/><rect x="1506.0" y="418.7" width="4" height="2" fill="#ff00ff"/><rect x="1513.6" y="418.6" width="4" height="2" fill="#ff00ff"/><rect x="1517.4" y="418.9" width="4" height="2" fill="#ff00ff"/><rect x="1521.2" y="418.5" width="4" height="2" fill="#ff00ff"/><rect x="1525.1" y="418.6" width="4" height="2" fill="#ff00ff"/><rect x="1536.5" y="418.2" width="4" height="2" fill="#ff00ff"/><rect x="1540.4" y="418.4" width="4" height="2" fill="#ff00ff"/><rect x="1563.3" y="418.2" width="4" height="2" fill="#ff00ff"/><rect x="1578.6" y="418.3" width="4" height="2" fill="#ff00ff"/><rect x="1586.2" y="418.6" width="4" height="2" fill="#ff00ff"/><rect x="1590.0" y="418.0" width="4" height="2" fill="#ff00ff"/><rect x="1609.1" y="418.4" width="4" height="2" fill="#ff00ff"/><rect x="1613.0" y="418.2" width="4" height="2" fill="#ff00ff"/><rect x="1624.4" y="418.6" width="4" height="2" fill="#ff00ff"/><rect x="1628.3" y="418.7" width="4" height="2" fill="#ff00ff"/><rect x="1635.9" y="418.9" width="4" height="2" fill="#ff00ff"/><rect x="1639.7" y="418.6" width="4" height="2" fill="#ff00ff"/><rect x="1643.5" y="418.6" width="4" height="2" fill="#ff00ff"/><rect x="1651.2" y="418.6" width="4" height="2" fill="#ff00ff"/><rect x="1655.0" y="418.3" width="4" height="2" fill="#ff00ff"/><rect x="1674.1" y="418.1" width="4" height="2" fill="#ff00ff"/><rect x="1677.9" y="418.2" width="4" height="2" fill="#ff00ff"/><rect x="1689.4" y="418.8" width="4" height="2" fill="#ff00ff"/><rect x="1693.2" y="418.0" width="4" height="2" fill="#ff00ff"/><rect x="1704.7" y="418.5" width="4" height="2" fill="#ff00ff"/><rect x="1716.2" y="418.2" width="4" height="2" fill="#ff00ff"/><rect x="1723.8" y="418.3" width="4" height="2" fill="#ff00ff"/><rect x="1731.5" y="418.3" width="4" height="2" fill="#ff00ff"/><rect x="1735.3" y="418.6" width="4" height="2" fill="#ff00ff"/><rect x="1739.1" y="418.7" width="4" height="2" fill="#ff00ff"/><rect x="1758.2" y="419.0" width="4" height="2" fill="#ff00ff"/><rect x="1762.0" y="418.1" width="4" height="2" fill="#ff00ff"/><rect x="1769.7" y="418.1" width="4" height="2" fill="#ff00ff"/><polyline points="1099.0,153.5 1100.3,157.3 1101.5,187.7 1102.8,139.3 1104.1,143.5 1105.4,120.4 1106.6,172.7 1107.9,162.5 1109.2,129.4 1110.5,154.4 1111.7,143.8 1113.0,151.2 1114.3,176.2 1115.6,167.2 1116.8,121.4 1118.1,144.2 1119.4,129.7 1120.7,147.0 1121.9,160.2 1123.2,127.8 1124.5,157.1 1125.8,92.3 1127.0,155.0 1128.3,197.6 1129.6,147.9 1130.8,163.6 1132.1,163.2 1133.4,132.6 1134.7,158.7 1135.9,129.2 1137.2,159.6 1138.5,121.6 1139.8,184.6 1141.0,130.2 1142.3,156.2 1143.6,146.7 1144.9,193.6 1146.1,166.7 1147.4,91.0 1148.7,151.4 1150.0,130.9 1151.2,154.4 1152.5,180.7 1153.8,137.2 1155.1,108.9 1156.3,117.5 1157.6,116.5 1158.9,141.4 1160.2,170.2 1161.4,177.4 1162.7,165.2 1164.0,146.0 1165.2,161.9 1166.5,127.9 1167.8,132.7 1169.1,153.0 1170.3,152.9 1171.6,167.9 1172.9,152.6 1174.2,123.0 1175.4,121.3 1176.7,124.0 1178.0,108.0 1179.3,173.8 1180.5,158.5 1181.8,158.9 1183.1,93.1 1184.4,166.5 1185.6,174.4 1186.9,131.0 1188.2,142.1 1189.5,137.1 1190.7,164.8 1192.0,189.4 1193.3,156.4 1194.5,122.5 1195.8,134.0 1197.1,161.7 1198.4,137.7 1199.6,136.3 1200.9,208.6 1202.2,147.8 1203.5,153.9 1204.7,140.8 1206.0,159.9 1207.3,150.5 1208.6,142.7 1209.8,139.2 1211.1,172.8 1212.4,172.6 1213.7,162.5 1214.9,141.8 1216.2,146.3 1217.5,132.9 1218.8,168.6 1220.0,120.0 1221.3,139.7 1222.6,146.1 1223.9,174.7 1225.1,169.4 1226.4,197.6 1227.7,186.9 1228.9,141.6 1230.2,182.0 1231.5,124.5 1232.8,154.3 1234.0,146.9 1235.3,141.1 1236.6,146.1 1237.9,170.7 1239.1,179.6 1240.4,130.8 1241.7,169.0 1243.0,208.0 1244.2,154.0 1245.5,176.1 1246.8,171.7 1248.1,153.6 1249.3,160.9 1250.6,187.9 1251.9,184.4 1253.2,196.1 1254.4,167.9 1255.7,122.5 1257.0,138.0 1258.2,175.8 1259.5,179.7 1260.8,157.1 1262.1,146.7 1263.3,172.9 1264.6,172.4 1265.9,164.8 1267.2,192.0 1268.4,164.1 1269.7,193.1 1271.0,143.2 1272.3,174.2 1273.5,147.4 1274.8,156.4 1276.1,185.3 1277.4,167.1 1278.6,140.8 1279.9,140.9 1281.2,103.9 1282.5,153.9 1283.7,179.9 1285.0,166.5 1286.3,148.6 1287.6,171.5 1288.8,184.9 1290.1,166.7 1291.4,134.9 1292.6,153.9 1293.9,177.9 1295.2,152.1 1296.5,145.2 1297.7,164.6 1299.0,148.4 1300.3,186.6 1301.6,99.5 1302.8,166.2 1304.1,174.3 1305.4,174.5 1306.7,179.7 1307.9,178.6 1309.2,128.6 1310.5,184.9 1311.8,176.9 1313.0,141.3 1314.3,137.1 1315.6,197.4 1316.9,166.3 1318.1,149.6 1319.4,155.0 1320.7,161.0 1322.0,140.8 1323.2,151.7 1324.5,223.1 1325.8,147.7 1327.0,170.6 1328.3,149.1 1329.6,151.8 1330.9,154.6 1332.1,149.2 1333.4,149.8 1334.7,194.2 1336.0,133.0 1337.2,158.7 1338.5,153.8 1339.8,182.8 1341.1,176.5 1342.3,173.9 1343.6,117.8 1344.9,156.4 1346.2,119.6 1347.4,166.1 1348.7,135.1 1350.0,90.8 1351.3,221.1 1352.5,160.2 1353.8,156.5 1355.1,212.0 1356.3,168.4 1357.6,98.3 1358.9,100.1 1360.2,168.9 1361.4,149.9 1362.7,116.2 1364.0,91.9 1365.3,134.6 1366.5,167.6 1367.8,129.9 1369.1,116.0 1370.4,140.4 1371.6,82.8 1372.9,146.7 1374.2,155.0 1375.5,176.9 1376.7,135.5 1378.0,122.8 1379.3,178.7 1380.6,167.6 1381.8,147.9 1383.1,166.1 1384.4,126.5 1385.7,133.9 1386.9,110.1 1388.2,162.4 1389.5,177.8 1390.7,126.1 1392.0,141.9 1393.3,121.4 1394.6,189.8 1395.8,128.6 1397.1,139.2 1398.4,112.5 1399.7,148.0 1400.9,159.2 1402.2,123.5 1403.5,171.9 1404.8,136.1 1406.0,130.0 1407.3,174.8 1408.6,124.6 1409.9,156.1 1411.1,145.5 1412.4,147.2 1413.7,178.8 1415.0,149.1 1416.2,132.1 1417.5,177.7 1418.8,171.3 1420.0,187.2 1421.3,153.2 1422.6,166.6 1423.9,153.5 1425.1,190.8 1426.4,198.6 1427.7,150.5 1429.0,173.1 1430.2,179.2 1431.5,199.0 1432.8,211.0 1434.1,230.2 1435.3,196.8 1436.6,183.1 1437.9,187.9 1439.2,194.8 1440.4,197.3 1441.7,164.1 1443.0,204.4 1444.3,191.9 1445.5,188.0 1446.8,183.3 1448.1,180.7 1449.3,214.0 1450.6,169.0 1451.9,194.4 1453.2,174.8 1454.4,171.8 1455.7,195.6 1457.0,176.5 1458.3,148.9 1459.5,151.0 1460.8,170.9 1462.1,168.2 1463.4,184.7 1464.6,185.0 1465.9,180.1 1467.2,162.0 1468.5,166.1 1469.7,204.9 1471.0,171.2 1472.3,150.7 1473.6,157.0 1474.8,164.0 1476.1,184.2 1477.4,182.7 1478.7,187.5 1479.9,163.2 1481.2,172.6 1482.5,185.8 1483.7,163.1 1485.0,149.7 1486.3,171.0 1487.6,171.9 1488.8,166.6 1490.1,150.6 1491.4,149.1 1492.7,201.2 1493.9,145.5 1495.2,191.1 1496.5,198.5 1497.8,164.5 1499.0,155.9 1500.3,155.5 1501.6,161.2 1502.9,149.1 1504.1,157.4 1505.4,161.6 1506.7,244.3 1508.0,202.4 1509.2,208.5 1510.5,151.4 1511.8,150.8 1513.0,185.8 1514.3,209.9 1515.6,148.3 1516.9,156.3 1518.1,192.6 1519.4,169.9 1520.7,130.2 1522.0,174.4 1523.2,197.2 1524.5,177.4 1525.8,162.9 1527.1,175.2 1528.3,178.3 1529.6,209.9 1530.9,195.0 1532.2,151.6 1533.4,147.0 1534.7,161.5 1536.0,163.4 1537.3,194.6 1538.5,191.3 1539.8,162.6 1541.1,129.1 1542.4,153.6 1543.6,161.2 1544.9,188.9 1546.2,117.8 1547.4,220.5 1548.7,188.9 1550.0,229.9 1551.3,212.3 1552.5,183.8 1553.8,228.6 1555.1,226.9 1556.4,249.2 1557.6,251.3 1558.9,242.0 1560.2,233.3 1561.5,251.8 1562.7,262.8 1564.0,230.4 1565.3,235.8 1566.6,227.7 1567.8,225.7 1569.1,222.3 1570.4,167.8 1571.7,195.0 1572.9,201.2 1574.2,205.2 1575.5,196.2 1576.8,164.6 1578.0,174.5 1579.3,217.3 1580.6,196.4 1581.8,181.1 1583.1,203.9 1584.4,124.8 1585.7,117.2 1586.9,158.0 1588.2,126.3 1589.5,153.6 1590.8,132.1 1592.0,144.0 1593.3,106.1 1594.6,138.5 1595.9,156.6 1597.1,137.2 1598.4,120.0 1599.7,168.3 1601.0,163.0 1602.2,178.2 1603.5,166.7 1604.8,200.3 1606.1,176.8 1607.3,240.1 1608.6,221.4 1609.9,181.2 1611.1,249.1 1612.4,213.1 1613.7,210.5 1615.0,241.5 1616.2,226.9 1617.5,240.3 1618.8,219.7 1620.1,223.2 1621.3,233.0 1622.6,210.7 1623.9,244.0 1625.2,249.2 1626.4,229.1 1627.7,198.9 1629.0,291.3 1630.3,225.5 1631.5,191.3 1632.8,255.9 1634.1,207.7 1635.4,195.4 1636.6,194.0 1637.9,174.2 1639.2,170.8 1640.5,221.7 1641.7,219.5 1643.0,206.1 1644.3,203.2 1645.5,245.2 1646.8,185.7 1648.1,187.1 1649.4,171.6 1650.6,148.1 1651.9,193.9 1653.2,171.6 1654.5,190.2 1655.7,202.4 1657.0,211.5 1658.3,183.7 1659.6,197.8 1660.8,187.6 1662.1,198.3 1663.4,214.2 1664.7,198.2 1665.9,214.4 1667.2,211.1 1668.5,207.2 1669.8,194.2 1671.0,171.9 1672.3,164.6 1673.6,213.9 1674.8,195.4 1676.1,207.0 1677.4,214.8 1678.7,205.2 1679.9,219.7 1681.2,243.3 1682.5,249.9 1683.8,235.0 1685.0,251.1 1686.3,243.0 1687.6,275.2 1688.9,286.1 1690.1,251.4 1691.4,239.1 1692.7,237.0 1694.0,256.6 1695.2,231.0 1696.5,279.7 1697.8,258.2 1699.1,274.4 1700.3,262.8 1701.6,283.5 1702.9,294.7 1704.2,252.5 1705.4,298.9 1706.7,290.2 1708.0,263.8 1709.2,274.9 1710.5,255.2 1711.8,281.4 1713.1,265.7 1714.3,251.9 1715.6,285.9 1716.9,262.9 1718.2,259.3 1719.4,254.8 1720.7,262.9 1722.0,213.8 1723.3,255.6 1724.5,210.5 1725.8,242.6 1727.1,233.3 1728.4,200.4 1729.6,215.7 1730.9,225.9 1732.2,250.9 1733.5,280.4 1734.7,258.1 1736.0,308.6 1737.3,305.4 1738.5,316.6 1739.8,297.6 1741.1,309.8 1742.4,304.4 1743.6,309.3 1744.9,309.6 1746.2,327.8 1747.5,319.6 1748.7,310.9 1750.0,281.5 1751.3,280.3 1752.6,293.2 1753.8,306.5 1755.1,324.6 1756.4,336.2 1757.7,336.1 1758.9,342.6 1760.2,368.9 1761.5,364.0 1762.8,361.1 1764.0,357.6 1765.3,347.0 1766.6,344.9 1767.8,350.4 1769.1,338.4 1770.4,360.2 1771.7,353.0 1772.9,357.5 1774.2,346.6 1775.5,356.2 1776.8,349.6" fill="none" stroke="#ffff00" stroke-width="1"/><circle cx="1099.0" cy="153.5" r="2.0" fill="#ffa41c"/><circle cx="1100.3" cy="157.3" r="2.0" fill="#ffa41c"/><circle cx="1101.5" cy="187.7" r="2.0" fill="#ffa41c"/><circle cx="1102.8" cy="139.3" r="2.0" fill="#ffa41c"/><circle cx="1104.1" cy="143.5" r="2.0" fill="#ffa41c"/><circle cx="1105.4" cy="120.4" r="2.0" fill="#ffa41c"/><circle cx="1106.6" cy="172.7" r="2.0" fill="#ffa41c"/><circle cx="1107.9" cy="162.5" r="2.0" fill="#ffa41c"/><circle cx="1109.2" cy="129.4" r="2.0" fill="#ffa41c"/><circle cx="1110.5" cy="154.4" r="2.0" fill="#ffa41c"/><circle cx="1111.7" cy="143.8" r="2.0" fill="#ffa41c"/><circle cx="1113.0" cy="151.2" r="2.0" fill="#ffa41c"/><circle cx="1114.3" cy="176.2" r="2.0" fill="#ffa41c"/><circle cx="1115.6" cy="167.2" r="2.0" fill="#ffa41c"/><circle cx="1116.8" cy="121.4" r="2.0" fill="#ffa41c"/><circle cx="1118.1" cy="144.2" r="2.0" fill="#ffa41c"/><circle cx="1119.4" cy="129.7" r="2.0" fill="#ffa41c"/><circle cx="1120.7" cy="147.0" r="2.0" fill="#ffa41c"/><circle cx="1121.9" cy="160.2" r="2.0" fill="#ffa41c"/><circle cx="1123.2" cy="127.8" r="2.0" fill="#ffa41c"/><circle cx="1124.5" cy="157.1" r="2.0" fill="#ffa41c"/><circle cx="1125.8" cy="92.3" r="2.0" fill="#ffa41c"/><circle cx="1127.0" cy="155.0" r="2.0" fill="#ffa41c"/><circle cx="1128.3" cy="197.6" r="2.0" fill="#ffa41c"/><circle cx="1129.6" cy="147.9" r="2.0" fill="#ffa41c"/><circle cx="1130.8" cy="163.6" r="2.0" fill="#ffa41c"/><circle cx="1132.1" cy="163.2" r="2.0" fill="#ffa41c"/><circle cx="1133.4" cy="132.6" r="2.0" fill="#ffa41c"/><circle cx="1134.7" cy="158.7" r="2.0" fill="#ffa41c"/><circle cx="1135.9" cy="129.2" r="2.0" fill="#ffa41c"/><circle cx="1137.2" cy="159.6" r="2.0" fill="#ffa41c"/><circle cx="1138.5" cy="121.6" r="2.0" fill="#ffa41c"/><circle cx="1139.8" cy="184.6" r="2.0" fill="#ffa41c"/><circle cx="1141.0" cy="130.2" r="2.0" fill="#ffa41c"/><circle cx="1142.3" cy="156.2" r="2.0" fill="#ffa41c"/><circle cx="1143.6" cy="146.7" r="2.0" fill="#ffa41c"/><circle cx="1144.9" cy="193.6" r="2.0" fill="#ffa41c"/><circle cx="1146.1" cy="166.7" r="2.0" fill="#ffa41c"/><circle cx="1147.4" cy="91.0" r="2.0" fill="#ffa41c"/><circle cx="1148.7" cy="151.4" r="2.0" fill="#ffa41c"/><circle cx="1150.0" cy="130.9" r="2.0" fill="#ffa41c"/><circle cx="1151.2" cy="154.4" r="2.0" fill="#ffa41c"/><circle cx="1152.5" cy="180.7" r="2.0" fill="#ffa41c"/><circle cx="1153.8" cy="137.2" r="2.0" fill="#ffa41c"/><circle cx="1155.1" cy="108.9" r="2.0" fill="#ffa41c"/><circle cx="1156.3" cy="117.5" r="2.0" fill="#ffa41c"/><circle cx="1157.6" cy="116.5" r="2.0" fill="#ffa41c"/><circle cx="1158.9" cy="141.4" r="2.0" fill="#ffa41c"/><circle cx="1160.2" cy="170.2" r="2.0" fill="#ffa41c"/><circle cx="1161.4" cy="177.4" r="2.0" fill="#ffa41c"/><circle cx="1162.7" cy="165.2" r="2.0" fill="#ffa41c"/><circle cx="1164.0" cy="146.0" r="2.0" fill="#ffa41c"/><circle cx="1165.2" cy="161.9" r="2.0" fill="#ffa41c"/><circle cx="1166.5" cy="127.9" r="2.0" fill="#ffa41c"/><circle cx="1167.8" cy="132.7" r="2.0" fill="#ffa41c"/><circle cx="1169.1" cy="153.0" r="2.0" fill="#ffa41c"/><circle cx="1170.3" cy="152.9" r="2.0" fill="#ffa41c"/><circle cx="1171.6" cy="167.9" r="2.0" fill="#ffa41c"/><circle cx="1172.9" cy="152.6" r="2.0" fill="#ffa41c"/><circle cx="1174.2" cy="123.0" r="2.0" fill="#ffa41c"/><circle cx="1175.4" cy="121.3" r="2.0" fill="#ffa41c"/><circle cx="1176.7" cy="124.0" r="2.0" fill="#ffa41c"/><circle cx="1178.0" cy="108.0" r="2.0" fill="#ffa41c"/><circle cx="1179.3" cy="173.8" r="2.0" fill="#ffa41c"/><circle cx="1180.5" cy="158.5" r="2.0" fill="#ffa41c"/><circle cx="1181.8" cy="158.9" r="2.0" fill="#ffa41c"/><circle cx="1183.1" cy="93.1" r="2.0" fill="#ffa41c"/><circle cx="1184.4" cy="166.5" r="2.0" fill="#ffa41c"/><circle cx="1185.6" cy="174.4" r="2.0" fill="#ffa41c"/><circle cx="1186.9" cy="131.0" r="2.0" fill="#ffa41c"/><circle cx="1188.2" cy="142.1" r="2.0" fill="#ffa41c"/><circle cx="1189.5" cy="137.1" r="2.0" fill="#ffa41c"/><circle cx="1190.7" cy="164.8" r="2.0" fill="#ffa41c"/><circle cx="1192.0" cy="189.4" r="2.0" fill="#ffa41c"/><circle cx="1193.3" cy="156.4" r="2.0" fill="#ffa41c"/><circle cx="1194.5" cy="122.5" r="2.0" fill="#ffa41c"/><circle cx="1195.8" cy="134.0" r="2.0" fill="#ffa41c"/><circle cx="1197.1" cy="161.7" r="2.0" fill="#ffa41c"/><circle cx="1198.4" cy="137.7" r="2.0" fill="#ffa41c"/><circle cx="1199.6" cy="136.3" r="2.0" fill="#ffa41c"/><circle cx="1200.9" cy="208.6" r="2.0" fill="#ffa41c"/><circle cx="1202.2" cy="147.8" r="2.0" fill="#ffa41c"/><circle cx="1203.5" cy="153.9" r="2.0" fill="#ffa41c"/><circle cx="1204.7" cy="140.8" r="2.0" fill="#ffa41c"/><circle cx="1206.0" cy="159.9" r="2.0" fill="#ffa41c"/><circle cx="1207.3" cy="150.5" r="2.0" fill="#ffa41c"/><circle cx="1208.6" cy="142.7" r="2.0" fill="#ffa41c"/><circle cx="1209.8" cy="139.2" r="2.0" fill="#ffa41c"/><circle cx="1211.1" cy="172.8" r="2.0" fill="#ffa41c"/><circle cx="1212.4" cy="172.6" r="2.0" fill="#ffa41c"/><circle cx="1213.7" cy="162.5" r="2.0" fill="#ffa41c"/><circle cx="1214.9" cy="141.8" r="2.0" fill="#ffa41c"/><circle cx="1216.2" cy="146.3" r="2.0" fill="#ffa41c"/><circle cx="1217.5" cy="132.9" r="2.0" fill="#ffa41c"/><circle cx="1218.8" cy="168.6" r="2.0" fill="#ffa41c"/><circle cx="1220.0" cy="120.0" r="2.0" fill="#ffa41c"/><circle cx="1221.3" cy="139.7" r="2.0" fill="#ffa41c"/><circle cx="1222.6" cy="146.1" r="2.0" fill="#ffa41c"/><circle cx="1223.9" cy="174.7" r="2.0" fill="#ffa41c"/><circle cx="1225.1" cy="169.4" r="2.0" fill="#ffa41c"/><circle cx="1226.4" cy="197.6" r="2.0" fill="#ffa41c"/><circle cx="1227.7" cy="186.9" r="2.0" fill="#ffa41c"/><circle cx="1228.9" cy="141.6" r="2.0" fill="#ffa41c"/><circle cx="1230.2" cy="182.0" r="2.0" fill="#ffa41c"/><circle cx="1231.5" cy="124.5" r="2.0" fill="#ffa41c"/><circle cx="1232.8" cy="154.3" r="2.0" fill="#ffa41c"/><circle cx="1234.0" cy="146.9" r="2.0" fill="#ffa41c"/><circle cx="1235.3" cy="141.1" r="2.0" fill="#ffa41c"/><circle cx="1236.6" cy="146.1" r="2.0" fill="#ffa41c"/><circle cx="1237.9" cy="170.7" r="2.0" fill="#ffa41c"/><circle cx="1239.1" cy="179.6" r="2.0" fill="#ffa41c"/><circle cx="1240.4" cy="130.8" r="2.0" fill="#ffa41c"/><circle cx="1241.7" cy="169.0" r="2.0" fill="#ffa41c"/><circle cx="1243.0" cy="208.0" r="2.0" fill="#ffa41c"/><circle cx="1244.2" cy="154.0" r="2.0" fill="#ffa41c"/><circle cx="1245.5" cy="176.1" r="2.0" fill="#ffa41c"/><circle cx="1246.8" cy="171.7" r="2.0" fill="#ffa41c"/><circle cx="1248.1" cy="153.6" r="2.0" fill="#ffa41c"/><circle cx="1249.3" cy="160.9" r="2.0" fill="#ffa41c"/><circle cx="1250.6" cy="187.9" r="2.0" fill="#ffa41c"/><circle cx="1251.9" cy="184.4" r="2.0" fill="#ffa41c"/><circle cx="1253.2" cy="196.1" r="2.0" fill="#ffa41c"/><circle cx="1254.4" cy="167.9" r="2.0" fill="#ffa41c"/><circle cx="1255.7" cy="122.5" r="2.0" fill="#ffa41c"/><circle cx="1257.0" cy="138.0" r="2.0" fill="#ffa41c"/><circle cx="1258.2" cy="175.8" r="2.0" fill="#ffa41c"/><circle cx="1259.5" cy="179.7" r="2.0" fill="#ffa41c"/><circle cx="1260.8" cy="157.1" r="2.0" fill="#ffa41c"/><circle cx="1262.1" cy="146.7" r="2.0" fill="#ffa41c"/><circle cx="1263.3" cy="172.9" r="2.0" fill="#ffa41c"/><circle cx="1264.6" cy="172.4" r="2.0" fill="#ffa41c"/><circle cx="1265.9" cy="164.8" r="2.0" fill="#ffa41c"/><circle cx="1267.2" cy="192.0" r="2.0" fill="#ffa41c"/><circle cx="1268.4" cy="164.1" r="2.0" fill="#ffa41c"/><circle cx="1269.7" cy="193.1" r="2.0" fill="#ffa41c"/><circle cx="1271.0" cy="143.2" r="2.0" fill="#ffa41c"/><circle cx="1272.3" cy="174.2" r="2.0" fill="#ffa41c"/><circle cx="1273.5" cy="147.4" r="2.0" fill="#ffa41c"/><circle cx="1274.8" cy="156.4" r="2.0" fill="#ffa41c"/><circle cx="1276.1" cy="185.3" r="2.0" fill="#ffa41c"/><circle cx="1277.4" cy="167.1" r="2.0" fill="#ffa41c"/><circle cx="1278.6" cy="140.8" r="2.0" fill="#ffa41c"/><circle cx="1279.9" cy="140.9" r="2.0" fill="#ffa41c"/><circle cx="1281.2" cy="103.9" r="2.0" fill="#ffa41c"/><circle cx="1282.5" cy="153.9" r="2.0" fill="#ffa41c"/><circle cx="1283.7" cy="179.9" r="2.0" fill="#ffa41c"/><circle cx="1285.0" cy="166.5" r="2.0" fill="#ffa41c"/><circle cx="1286.3" cy="148.6" r="2.0" fill="#ffa41c"/><circle cx="1287.6" cy="171.5" r="2.0" fill="#ffa41c"/><circle cx="1288.8" cy="184.9" r="2.0" fill="#ffa41c"/><circle cx="1290.1" cy="166.7" r="2.0" fill="#ffa41c"/><circle cx="1291.4" cy="134.9" r="2.0" fill="#ffa41c"/><circle cx="1292.6" cy="153.9" r="2.0" fill="#ffa41c"/><circle cx="1293.9" cy="177.9" r="2.0" fill="#ffa41c"/><circle cx="1295.2" cy="152.1" r="2.0" fill="#ffa41c"/><circle cx="1296.5" cy="145.2" r="2.0" fill="#ffa41c"/><circle cx="1297.7" cy="164.6" r="2.0" fill="#ffa41c"/><circle cx="1299.0" cy="148.4" r="2.0" fill="#ffa41c"/><circle cx="1300.3" cy="186.6" r="2.0" fill="#ffa41c"/><circle cx="1301.6" cy="99.5" r="2.0" fill="#ffa41c"/><circle cx="1302.8" cy="166.2" r="2.0" fill="#ffa41c"/><circle cx="1304.1" cy="174.3" r="2.0" fill="#ffa41c"/><circle cx="1305.4" cy="174.5" r="2.0" fill="#ffa41c"/><circle cx="1306.7" cy="179.7" r="2.0" fill="#ffa41c"/><circle cx="1307.9" cy="178.6" r="2.0" fill="#ffa41c"/><circle cx="1309.2" cy="128.6" r="2.0" fill="#ffa41c"/><circle cx="1310.5" cy="184.9" r="2.0" fill="#ffa41c"/><circle cx="1311.8" cy="176.9" r="2.0" fill="#ffa41c"/><circle cx="1313.0" cy="141.3" r="2.0" fill="#ffa41c"/><circle cx="1314.3" cy="137.1" r="2.0" fill="#ffa41c"/><circle cx="1315.6" cy="197.4" r="2.0" fill="#ffa41c"/><circle cx="1316.9" cy="166.3" r="2.0" fill="#ffa41c"/><circle cx="1318.1" cy="149.6" r="2.0" fill="#ffa41c"/><circle cx="1319.4" cy="155.0" r="2.0" fill="#ffa41c"/><circle cx="1320.7" cy="161.0" r="2.0" fill="#ffa41c"/><circle cx="1322.0" cy="140.8" r="2.0" fill="#ffa41c"/><circle cx="1323.2" cy="151.7" r="2.0" fill="#ffa41c"/><circle cx="1324.5" cy="223.1" r="2.0" fill="#ffa41c"/><circle cx="1325.8" cy="147.7" r="2.0" fill="#ffa41c"/><circle cx="1327.0" cy="170.6" r="2.0" fill="#ffa41c"/><circle cx="1328.3" cy="149.1" r="2.0" fill="#ffa41c"/><circle cx="1329.6" cy="151.8" r="2.0" fill="#ffa41c"/><circle cx="1330.9" cy="154.6" r="2.0" fill="#ffa41c"/><circle cx="1332.1" cy="149.2" r="2.0" fill="#ffa41c"/><circle cx="1333.4" cy="149.8" r="2.0" fill="#ffa41c"/><circle cx="1334.7" cy="194.2" r="2.0" fill="#ffa41c"/><circle cx="1336.0" cy="133.0" r="2.0" fill="#ffa41c"/><circle cx="1337.2" cy="158.7" r="2.0" fill="#ffa41c"/><circle cx="1338.5" cy="153.8" r="2.0" fill="#ffa41c"/><circle cx="1339.8" cy="182.8" r="2.0" fill="#ffa41c"/><circle cx="1341.1" cy="176.5" r="2.0" fill="#ffa41c"/><circle cx="1342.3" cy="173.9" r="2.0" fill="#ffa41c"/><circle cx="1343.6" cy="117.8" r="2.0" fill="#ffa41c"/><circle cx="1344.9" cy="156.4" r="2.0" fill="#ffa41c"/><circle cx="1346.2" cy="119.6" r="2.0" fill="#ffa41c"/><circle cx="1347.4" cy="166.1" r="2.0" fill="#ffa41c"/><circle cx="1348.7" cy="135.1" r="2.0" fill="#ffa41c"/><circle cx="1350.0" cy="90.8" r="2.0" fill="#ffa41c"/><circle cx="1351.3" cy="221.1" r="2.0" fill="#ffa41c"/><circle cx="1352.5" cy="160.2" r="2.0" fill="#ffa41c"/><circle cx="1353.8" cy="156.5" r="2.0" fill="#ffa41c"/><circle cx="1355.1" cy="212.0" r="2.0" fill="#ffa41c"/><circle cx="1356.3" cy="168.4" r="2.0" fill="#ffa41c"/><circle cx="1357.6" cy="98.3" r="2.0" fill="#ffa41c"/><circle cx="1358.9" cy="100.1" r="2.0" fill="#ffa41c"/><circle cx="1360.2" cy="168.9" r="2.0" fill="#ffa41c"/><circle cx="1361.4" cy="149.9" r="2.0" fill="#ffa41c"/><circle cx="1362.7" cy="116.2" r="2.0" fill="#ffa41c"/><circle cx="1364.0" cy="91.9" r="2.0" fill="#ffa41c"/><circle cx="1365.3" cy="134.6" r="2.0" fill="#ffa41c"/><circle cx="1366.5" cy="167.6" r="2.0" fill="#ffa41c"/><circle cx="1367.8" cy="129.9" r="2.0" fill="#ffa41c"/><circle cx="1369.1" cy="116.0" r="2.0" fill="#ffa41c"/><circle cx="1370.4" cy="140.4" r="2.0" fill="#ffa41c"/><circle cx="1371.6" cy="82.8" r="2.0" fill="#ffa41c"/><circle cx="1372.9" cy="146.7" r="2.0" fill="#ffa41c"/><circle cx="1374.2" cy="155.0" r="2.0" fill="#ffa41c"/><circle cx="1375.5" cy="176.9" r="2.0" fill="#ffa41c"/><circle cx="1376.7" cy="135.5" r="2.0" fill="#ffa41c"/><circle cx="1378.0" cy="122.8" r="2.0" fill="#ffa41c"/><circle cx="1379.3" cy="178.7" r="2.0" fill="#ffa41c"/><circle cx="1380.6" cy="167.6" r="2.0" fill="#ffa41c"/><circle cx="1381.8" cy="147.9" r="2.0" fill="#ffa41c"/><circle cx="1383.1" cy="166.1" r="2.0" fill="#ffa41c"/><circle cx="1384.4" cy="126.5" r="2.0" fill="#ffa41c"/><circle cx="1385.7" cy="133.9" r="2.0" fill="#ffa41c"/><circle cx="1386.9" cy="110.1" r="2.0" fill="#ffa41c"/><circle cx="1388.2" cy="162.4" r="2.0" fill="#ffa41c"/><circle cx="1389.5" cy="177.8" r="2.0" fill="#ffa41c"/><circle cx="1390.7" cy="126.1" r="2.0" fill="#ffa41c"/><circle cx="1392.0" cy="141.9" r="2.0" fill="#ffa41c"/><circle cx="1393.3" cy="121.4" r="2.0" fill="#ffa41c"/><circle cx="1394.6" cy="189.8" r="2.0" fill="#ffa41c"/><circle cx="1395.8" cy="128.6" r="2.0" fill="#ffa41c"/><circle cx="1397.1" cy="139.2" r="2.0" fill="#ffa41c"/><circle cx="1398.4" cy="112.5" r="2.0" fill="#ffa41c"/><circle cx="1399.7" cy="148.0" r="2.0" fill="#ffa41c"/><circle cx="1400.9" cy="159.2" r="2.0" fill="#ffa41c"/><circle cx="1402.2" cy="123.5" r="2.0" fill="#ffa41c"/><circle cx="1403.5" cy="171.9" r="2.0" fill="#ffa41c"/><circle cx="1404.8" cy="136.1" r="2.0" fill="#ffa41c"/><circle cx="1406.0" cy="130.0" r="2.0" fill="#ffa41c"/><circle cx="1407.3" cy="174.8" r="2.0" fill="#ffa41c"/><circle cx="1408.6" cy="124.6" r="2.0" fill="#ffa41c"/><circle cx="1409.9" cy="156.1" r="2.0" fill="#ffa41c"/><circle cx="1411.1" cy="145.5" r="2.0" fill="#ffa41c"/><circle cx="1412.4" cy="147.2" r="2.0" fill="#ffa41c"/><circle cx="1413.7" cy="178.8" r="2.0" fill="#ffa41c"/><circle cx="1415.0" cy="149.1" r="2.0" fill="#ffa41c"/><circle cx="1416.2" cy="132.1" r="2.0" fill="#ffa41c"/><circle cx="1417.5" cy="177.7" r="2.0" fill="#ffa41c"/><circle cx="1418.8" cy="171.3" r="2.0" fill="#ffa41c"/><circle cx="1420.0" cy="187.2" r="2.0" fill="#ffa41c"/><circle cx="1421.3" cy="153.2" r="2.0" fill="#ffa41c"/><circle cx="1422.6" cy="166.6" r="2.0" fill="#ffa41c"/><circle cx="1423.9" cy="153.5" r="2.0" fill="#ffa41c"/><circle cx="1425.1" cy="190.8" r="2.0" fill="#ffa41c"/><circle cx="1426.4" cy="198.6" r="2.0" fill="#ffa41c"/><circle cx="1427.7" cy="150.5" r="2.0" fill="#ffa41c"/><circle cx="1429.0" cy="173.1" r="2.0" fill="#ffa41c"/><circle cx="1430.2" cy="179.2" r="2.0" fill="#ffa41c"/><circle cx="1431.5" cy="199.0" r="2.0" fill="#ffa41c"/><circle cx="1432.8" cy="211.0" r="2.0" fill="#ffa41c"/><circle cx="1434.1" cy="230.2" r="2.0" fill="#ffa41c"/><circle cx="1435.3" cy="196.8" r="2.0" fill="#ffa41c"/><circle cx="1436.6" cy="183.1" r="2.0" fill="#ffa41c"/><circle cx="1437.9" cy="187.9" r="2.0" fill="#ffa41c"/><circle cx="1439.2" cy="194.8" r="2.0" fill="#ffa41c"/><circle cx="1440.4" cy="197.3" r="2.0" fill="#ffa41c"/><circle cx="1441.7" cy="164.1" r="2.0" fill="#ffa41c"/><circle cx="1443.0" cy="204.4" r="2.0" fill="#ffa41c"/><circle cx="1444.3" cy="191.9" r="2.0" fill="#ffa41c"/><circle cx="1445.5" cy="188.0" r="2.0" fill="#ffa41c"/><circle cx="1446.8" cy="183.3" r="2.0" fill="#ffa41c"/><circle cx="1448.1" cy="180.7" r="2.0" fill="#ffa41c"/><circle cx="1449.3" cy="214.0" r="2.0" fill="#ffa41c"/><circle cx="1450.6" cy="169.0" r="2.0" fill="#ffa41c"/><circle cx="1451.9" cy="194.4" r="2.0" fill="#ffa41c"/><circle cx="1453.2" cy="174.8" r="2.0" fill="#ffa41c"/><circle cx="1454.4" cy="171.8" r="2.0" fill="#ffa41c"/><circle cx="1455.7" cy="195.6" r="2.0" fill="#ffa41c"/><circle cx="1457.0" cy="176.5" r="2.0" fill="#ffa41c"/><circle cx="1458.3" cy="148.9" r="2.0" fill="#ffa41c"/><circle cx="1459.5" cy="151.0" r="2.0" fill="#ffa41c"/><circle cx="1460.8" cy="170.9" r="2.0" fill="#ffa41c"/><circle cx="1462.1" cy="168.2" r="2.0" fill="#ffa41c"/><circle cx="1463.4" cy="184.7" r="2.0" fill="#ffa41c"/><circle cx="1464.6" cy="185.0" r="2.0" fill="#ffa41c"/><circle cx="1465.9" cy="180.1" r="2.0" fill="#ffa41c"/><circle cx="1467.2" cy="162.0" r="2.0" fill="#ffa41c"/><circle cx="1468.5" cy="166.1" r="2.0" fill="#ffa41c"/><circle cx="1469.7" cy="204.9" r="2.0" fill="#ffa41c"/><circle cx="1471.0" cy="171.2" r="2.0" fill="#ffa41c"/><circle cx="1472.3" cy="150.7" r="2.0" fill="#ffa41c"/><circle cx="1473.6" cy="157.0" r="2.0" fill="#ffa41c"/><circle cx="1474.8" cy="164.0" r="2.0" fill="#ffa41c"/><circle cx="1476.1" cy="184.2" r="2.0" fill="#ffa41c"/><circle cx="1477.4" cy="182.7" r="2.0" fill="#ffa41c"/><circle cx="1478.7" cy="187.5" r="2.0" fill="#ffa41c"/><circle cx="1479.9" cy="163.2" r="2.0" fill="#ffa41c"/><circle cx="1481.2" cy="172.6" r="2.0" fill="#ffa41c"/><circle cx="1482.5" cy="185.8" r="2.0" fill="#ffa41c"/><circle cx="1483.7" cy="163.1" r="2.0" fill="#ffa41c"/><circle cx="1485.0" cy="149.7" r="2.0" fill="#ffa41c"/><circle cx="1486.3" cy="171.0" r="2.0" fill="#ffa41c"/><circle cx="1487.6" cy="171.9" r="2.0" fill="#ffa41c"/><circle cx="1488.8" cy="166.6" r="2.0" fill="#ffa41c"/><circle cx="1490.1" cy="150.6" r="2.0" fill="#ffa41c"/><circle cx="1491.4" cy="149.1" r="2.0" fill="#ffa41c"/><circle cx="1492.7" cy="201.2" r="2.0" fill="#ffa41c"/><circle cx="1493.9" cy="145.5" r="2.0" fill="#ffa41c"/><circle cx="1495.2" cy="191.1" r="2.0" fill="#ffa41c"/><circle cx="1496.5" cy="198.5" r="2.0" fill="#ffa41c"/><circle cx="1497.8" cy="164.5" r="2.0" fill="#ffa41c"/><circle cx="1499.0" cy="155.9" r="2.0" fill="#ffa41c"/><circle cx="1500.3" cy="155.5" r="2.0" fill="#ffa41c"/><circle cx="1501.6" cy="161.2" r="2.0" fill="#ffa41c"/><circle cx="1502.9" cy="149.1" r="2.0" fill="#ffa41c"/><circle cx="1504.1" cy="157.4" r="2.0" fill="#ffa41c"/><circle cx="1505.4" cy="161.6" r="2.0" fill="#ffa41c"/><circle cx="1506.7" cy="244.3" r="2.0" fill="#ffa41c"/><circle cx="1508.0" cy="202.4" r="2.0" fill="#ffa41c"/><circle cx="1509.2" cy="208.5" r="2.0" fill="#ffa41c"/><circle cx="1510.5" cy="151.4" r="2.0" fill="#ffa41c"/><circle cx="1511.8" cy="150.8" r="2.0" fill="#ffa41c"/><circle cx="1513.0" cy="185.8" r="2.0" fill="#ffa41c"/><circle cx="1514.3" cy="209.9" r="2.0" fill="#ffa41c"/><circle cx="1515.6" cy="148.3" r="2.0" fill="#ffa41c"/><circle cx="1516.9" cy="156.3" r="2.0" fill="#ffa41c"/><circle cx="1518.1" cy="192.6" r="2.0" fill="#ffa41c"/><circle cx="1519.4" cy="169.9" r="2.0" fill="#ffa41c"/><circle cx="1520.7" cy="130.2" r="2.0" fill="#ffa41c"/><circle cx="1522.0" cy="174.4" r="2.0" fill="#ffa41c"/><circle cx="1523.2" cy="197.2" r="2.0" fill="#ffa41c"/><circle cx="1524.5" cy="177.4" r="2.0" fill="#ffa41c"/><circle cx="1525.8" cy="162.9" r="2.0" fill="#ffa41c"/><circle cx="1527.1" cy="175.2" r="2.0" fill="#ffa41c"/><circle cx="1528.3" cy="178.3" r="2.0" fill="#ffa41c"/><circle cx="1529.6" cy="209.9" r="2.0" fill="#ffa41c"/><circle cx="1530.9" cy="195.0" r="2.0" fill="#ffa41c"/><circle cx="1532.2" cy="151.6" r="2.0" fill="#ffa41c"/><circle cx="1533.4" cy="147.0" r="2.0" fill="#ffa41c"/><circle cx="1534.7" cy="161.5" r="2.0" fill="#ffa41c"/><circle cx="1536.0" cy="163.4" r="2.0" fill="#ffa41c"/><circle cx="1537.3" cy="194.6" r="2.0" fill="#ffa41c"/><circle cx="1538.5" cy="191.3" r="2.0" fill="#ffa41c"/><circle cx="1539.8" cy="162.6" r="2.0" fill="#ffa41c"/><circle cx="1541.1" cy="129.1" r="2.0" fill="#ffa41c"/><circle cx="1542.4" cy="153.6" r="2.0" fill="#ffa41c"/><circle cx="1543.6" cy="161.2" r="2.0" fill="#ffa41c"/><circle cx="1544.9" cy="188.9" r="2.0" fill="#ffa41c"/><circle cx="1546.2" cy="117.8" r="2.0" fill="#ffa41c"/><circle cx="1547.4" cy="220.5" r="2.0" fill="#ffa41c"/><circle cx="1548.7" cy="188.9" r="2.0" fill="#ffa41c"/><circle cx="1550.0" cy="229.9" r="2.0" fill="#ffa41c"/><circle cx="1551.3" cy="212.3" r="2.0" fill="#ffa41c"/><circle cx="1552.5" cy="183.8" r="2.0" fill="#ffa41c"/><circle cx="1553.8" cy="228.6" r="2.0" fill="#ffa41c"/><circle cx="1555.1" cy="226.9" r="2.0" fill="#ffa41c"/><circle cx="1556.4" cy="249.2" r="2.0" fill="#ffa41c"/><circle cx="1557.6" cy="251.3" r="2.0" fill="#ffa41c"/><circle cx="1558.9" cy="242.0" r="2.0" fill="#ffa41c"/><circle cx="1560.2" cy="233.3" r="2.0" fill="#ffa41c"/><circle cx="1561.5" cy="251.8" r="2.0" fill="#ffa41c"/><circle cx="1562.7" cy="262.8" r="2.0" fill="#ffa41c"/><circle cx="1564.0" cy="230.4" r="2.0" fill="#ffa41c"/><circle cx="1565.3" cy="235.8" r="2.0" fill="#ffa41c"/><circle cx="1566.6" cy="227.7" r="2.0" fill="#ffa41c"/><circle cx="1567.8" cy="225.7" r="2.0" fill="#ffa41c"/><circle cx="1569.1" cy="222.3" r="2.0" fill="#ffa41c"/><circle cx="1570.4" cy="167.8" r="2.0" fill="#ffa41c"/><circle cx="1571.7" cy="195.0" r="2.0" fill="#ffa41c"/><circle cx="1572.9" cy="201.2" r="2.0" fill="#ffa41c"/><circle cx="1574.2" cy="205.2" r="2.0" fill="#ffa41c"/><circle cx="1575.5" cy="196.2" r="2.0" fill="#ffa41c"/><circle cx="1576.8" cy="164.6" r="2.0" fill="#ffa41c"/><circle cx="1578.0" cy="174.5" r="2.0" fill="#ffa41c"/><circle cx="1579.3" cy="217.3" r="2.0" fill="#ffa41c"/><circle cx="1580.6" cy="196.4" r="2.0" fill="#ffa41c"/><circle cx="1581.8" cy="181.1" r="2.0" fill="#ffa41c"/><circle cx="1583.1" cy="203.9" r="2.0" fill="#ffa41c"/><circle cx="1584.4" cy="124.8" r="2.0" fill="#ffa41c"/><circle cx="1585.7" cy="117.2" r="2.0" fill="#ffa41c"/><circle cx="1586.9" cy="158.0" r="2.0" fill="#ffa41c"/><circle cx="1588.2" cy="126.3" r="2.0" fill="#ffa41c"/><circle cx="1589.5" cy="153.6" r="2.0" fill="#ffa41c"/><circle cx="1590.8" cy="132.1" r="2.0" fill="#ffa41c"/><circle cx="1592.0" cy="144.0" r="2.0" fill="#ffa41c"/><circle cx="1593.3" cy="106.1" r="2.0" fill="#ffa41c"/><circle cx="1594.6" cy="138.5" r="2.0" fill="#ffa41c"/><circle cx="1595.9" cy="156.6" r="2.0" fill="#ffa41c"/><circle cx="1597.1" cy="137.2" r="2.0" fill="#ffa41c"/><circle cx="1598.4" cy="120.0" r="2.0" fill="#ffa41c"/><circle cx="1599.7" cy="168.3" r="2.0" fill="#ffa41c"/><circle cx="1601.0" cy="163.0" r="2.0" fill="#ffa41c"/><circle cx="1602.2" cy="178.2" r="2.0" fill="#ffa41c"/><circle cx="1603.5" cy="166.7" r="2.0" fill="#ffa41c"/><circle cx="1604.8" cy="200.3" r="2.0" fill="#ffa41c"/><circle cx="1606.1" cy="176.8" r="2.0" fill="#ffa41c"/><circle cx="1607.3" cy="240.1" r="2.0" fill="#ffa41c"/><circle cx="1608.6" cy="221.4" r="2.0" fill="#ffa41c"/><circle cx="1609.9" cy="181.2" r="2.0" fill="#ffa41c"/><circle cx="1611.1" cy="249.1" r="2.0" fill="#ffa41c"/><circle cx="1612.4" cy="213.1" r="2.0" fill="#ffa41c"/><circle cx="1613.7" cy="210.5" r="2.0" fill="#ffa41c"/><circle cx="1615.0" cy="241.5" r="2.0" fill="#ffa41c"/><circle cx="1616.2" cy="226.9" r="2.0" fill="#ffa41c"/><circle cx="1617.5" cy="240.3" r="2.0" fill="#ffa41c"/><circle cx="1618.8" cy="219.7" r="2.0" fill="#ffa41c"/><circle cx="1620.1" cy="223.2" r="2.0" fill="#ffa41c"/><circle cx="1621.3" cy="233.0" r="2.0" fill="#ffa41c"/><circle cx="1622.6" cy="210.7" r="2.0" fill="#ffa41c"/><circle cx="1623.9" cy="244.0" r="2.0" fill="#ffa41c"/><circle cx="1625.2" cy="249.2" r="2.0" fill="#ffa41c"/><circle cx="1626.4" cy="229.1" r="2.0" fill="#ffa41c"/><circle cx="1627.7" cy="198.9" r="2.0" fill="#ffa41c"/><circle cx="1629.0" cy="291.3" r="2.0" fill="#ffa41c"/><circle cx="1630.3" cy="225.5" r="2.0" fill="#ffa41c"/><circle cx="1631.5" cy="191.3" r="2.0" fill="#ffa41c"/><circle cx="1632.8" cy="255.9" r="2.0" fill="#ffa41c"/><circle cx="1634.1" cy="207.7" r="2.0" fill="#ffa41c"/><circle cx="1635.4" cy="195.4" r="2.0" fill="#ffa41c"/><circle cx="1636.6" cy="194.0" r="2.0" fill="#ffa41c"/><circle cx="1637.9" cy="174.2" r="2.0" fill="#ffa41c"/><circle cx="1639.2" cy="170.8" r="2.0" fill="#ffa41c"/><circle cx="1640.5" cy="221.7" r="2.0" fill="#ffa41c"/><circle cx="1641.7" cy="219.5" r="2.0" fill="#ffa41c"/><circle cx="1643.0" cy="206.1" r="2.0" fill="#ffa41c"/><circle cx="1644.3" cy="203.2" r="2.0" fill="#ffa41c"/><circle cx="1645.5" cy="245.2" r="2.0" fill="#ffa41c"/><circle cx="1646.8" cy="185.7" r="2.0" fill="#ffa41c"/><circle cx="1648.1" cy="187.1" r="2.0" fill="#ffa41c"/><circle cx="1649.4" cy="171.6" r="2.0" fill="#ffa41c"/><circle cx="1650.6" cy="148.1" r="2.0" fill="#ffa41c"/><circle cx="1651.9" cy="193.9" r="2.0" fill="#ffa41c"/><circle cx="1653.2" cy="171.6" r="2.0" fill="#ffa41c"/><circle cx="1654.5" cy="190.2" r="2.0" fill="#ffa41c"/><circle cx="1655.7" cy="202.4" r="2.0" fill="#ffa41c"/><circle cx="1657.0" cy="211.5" r="2.0" fill="#ffa41c"/><circle cx="1658.3" cy="183.7" r="2.0" fill="#ffa41c"/><circle cx="1659.6" cy="197.8" r="2.0" fill="#ffa41c"/><circle cx="1660.8" cy="187.6" r="2.0" fill="#ffa41c"/><circle cx="1662.1" cy="198.3" r="2.0" fill="#ffa41c"/><circle cx="1663.4" cy="214.2" r="2.0" fill="#ffa41c"/><circle cx="1664.7" cy="198.2" r="2.0" fill="#ffa41c"/><circle cx="1665.9" cy="214.4" r="2.0" fill="#ffa41c"/><circle cx="1667.2" cy="211.1" r="2.0" fill="#ffa41c"/><circle cx="1668.5" cy="207.2" r="2.0" fill="#ffa41c"/><circle cx="1669.8" cy="194.2" r="2.0" fill="#ffa41c"/><circle cx="1671.0" cy="171.9" r="2.0" fill="#ffa41c"/><circle cx="1672.3" cy="164.6" r="2.0" fill="#ffa41c"/><circle cx="1673.6" cy="213.9" r="2.0" fill="#ffa41c"/><circle cx="1674.8" cy="195.4" r="2.0" fill="#ffa41c"/><circle cx="1676.1" cy="207.0" r="2.0" fill="#ffa41c"/><circle cx="1677.4" cy="214.8" r="2.0" fill="#ffa41c"/><circle cx="1678.7" cy="205.2" r="2.0" fill="#ffa41c"/><circle cx="1679.9" cy="219.7" r="2.0" fill="#ffa41c"/><circle cx="1681.2" cy="243.3" r="2.0" fill="#ffa41c"/><circle cx="1682.5" cy="249.9" r="2.0" fill="#ffa41c"/><circle cx="1683.8" cy="235.0" r="2.0" fill="#ffa41c"/><circle cx="1685.0" cy="251.1" r="2.0" fill="#ffa41c"/><circle cx="1686.3" cy="243.0" r="2.0" fill="#ffa41c"/><circle cx="1687.6" cy="275.2" r="2.0" fill="#ffa41c"/><circle cx="1688.9" cy="286.1" r="2.0" fill="#ffa41c"/><circle cx="1690.1" cy="251.4" r="2.0" fill="#ffa41c"/><circle cx="1691.4" cy="239.1" r="2.0" fill="#ffa41c"/><circle cx="1692.7" cy="237.0" r="2.0" fill="#ffa41c"/><circle cx="1694.0" cy="256.6" r="2.0" fill="#ffa41c"/><circle cx="1695.2" cy="231.0" r="2.0" fill="#ffa41c"/><circle cx="1696.5" cy="279.7" r="2.0" fill="#ffa41c"/><circle cx="1697.8" cy="258.2" r="2.0" fill="#ffa41c"/><circle cx="1699.1" cy="274.4" r="2.0" fill="#ffa41c"/><circle cx="1700.3" cy="262.8" r="2.0" fill="#ffa41c"/><circle cx="1701.6" cy="283.5" r="2.0" fill="#ffa41c"/><circle cx="1702.9" cy="294.7" r="2.0" fill="#ffa41c"/><circle cx="1704.2" cy="252.5" r="2.0" fill="#ffa41c"/><circle cx="1705.4" cy="298.9" r="2.0" fill="#ffa41c"/><circle cx="1706.7" cy="290.2" r="2.0" fill="#ffa41c"/><circle cx="1708.0" cy="263.8" r="2.0" fill="#ffa41c"/><circle cx="1709.2" cy="274.9" r="2.0" fill="#ffa41c"/><circle cx="1710.5" cy="255.2" r="2.0" fill="#ffa41c"/><circle cx="1711.8" cy="281.4" r="2.0" fill="#ffa41c"/><circle cx="1713.1" cy="265.7" r="2.0" fill="#ffa41c"/><circle cx="1714.3" cy="251.9" r="2.0" fill="#ffa41c"/><circle cx="1715.6" cy="285.9" r="2.0" fill="#ffa41c"/><circle cx="1716.9" cy="262.9" r="2.0" fill="#ffa41c"/><circle cx="1718.2" cy="259.3" r="2.0" fill="#ffa41c"/><circle cx="1719.4" cy="254.8" r="2.0" fill="#ffa41c"/><circle cx="1720.7" cy="262.9" r="2.0" fill="#ffa41c"/><circle cx="1722.0" cy="213.8" r="2.0" fill="#ffa41c"/><circle cx="1723.3" cy="255.6" r="2.0" fill="#ffa41c"/><circle cx="1724.5" cy="210.5" r="2.0" fill="#ffa41c"/><circle cx="1725.8" cy="242.6" r="2.0" fill="#ffa41c"/><circle cx="1727.1" cy="233.3" r="2.0" fill="#ffa41c"/><circle cx="1728.4" cy="200.4" r="2.0" fill="#ffa41c"/><circle cx="1729.6" cy="215.7" r="2.0" fill="#ffa41c"/><circle cx="1730.9" cy="225.9" r="2.0" fill="#ffa41c"/><circle cx="1732.2" cy="250.9" r="2.0" fill="#ffa41c"/><circle cx="1733.5" cy="280.4" r="2.0" fill="#ffa41c"/><circle cx="1734.7" cy="258.1" r="2.0" fill="#ffa41c"/><circle cx="1736.0" cy="308.6" r="2.0" fill="#ffa41c"/><circle cx="1737.3" cy="305.4" r="2.0" fill="#ffa41c"/><circle cx="1738.5" cy="316.6" r="2.0" fill="#ffa41c"/><circle cx="1739.8" cy="297.6" r="2.0" fill="#ffa41c"/><circle cx="1741.1" cy="309.8" r="2.0" fill="#ffa41c"/><circle cx="1742.4" cy="304.4" r="2.0" fill="#ffa41c"/><circle cx="1743.6" cy="309.3" r="2.0" fill="#ffa41c"/><circle cx="1744.9" cy="309.6" r="2.0" fill="#ffa41c"/><circle cx="1746.2" cy="327.8" r="2.0" fill="#ffa41c"/><circle cx="1747.5" cy="319.6" r="2.0" fill="#ffa41c"/><circle cx="1748.7" cy="310.9" r="2.0" fill="#ffa41c"/><circle cx="1750.0" cy="281.5" r="2.0" fill="#ffa41c"/><circle cx="1751.3" cy="280.3" r="2.0" fill="#ffa41c"/><circle cx="1752.6" cy="293.2" r="2.0" fill="#ffa41c"/><circle cx="1753.8" cy="306.5" r="2.0" fill="#ffa41c"/><circle cx="1755.1" cy="324.6" r="2.0" fill="#ffa41c"/><circle cx="1756.4" cy="336.2" r="2.0" fill="#ffa41c"/><circle cx="1757.7" cy="336.1" r="2.0" fill="#ffa41c"/><circle cx="1758.9" cy="342.6" r="2.0" fill="#ffa41c"/><circle cx="1760.2" cy="368.9" r="2.0" fill="#ffa41c"/><circle cx="1761.5" cy="364.0" r="2.0" fill="#ffa41c"/><circle cx="1762.8" cy="361.1" r="2.0" fill="#ffa41c"/><circle cx="1764.0" cy="357.6" r="2.0" fill="#ffa41c"/><circle cx="1765.3" cy="347.0" r="2.0" fill="#ffa41c"/><circle cx="1766.6" cy="344.9" r="2.0" fill="#ffa41c"/><circle cx="1767.8" cy="350.4" r="2.0" fill="#ffa41c"/><circle cx="1769.1" cy="338.4" r="2.0" fill="#ffa41c"/><circle cx="1770.4" cy="360.2" r="2.0" fill="#ffa41c"/><circle cx="1771.7" cy="353.0" r="2.0" fill="#ffa41c"/><circle cx="1772.9" cy="357.5" r="2.0" fill="#ffa41c"/><circle cx="1774.2" cy="346.6" r="2.0" fill="#ffa41c"/><circle cx="1775.5" cy="356.2" r="2.0" fill="#ffa41c"/><circle cx="1776.8" cy="349.6" r="2.0" fill="#ffa41c"/><polyline points="1099.0,187.0 1100.3,140.0 1101.5,168.5 1102.8,146.0 1104.1,125.2 1105.4,169.2 1106.6,138.8 1107.9,149.8 1109.2,169.2 1110.5,147.5 1111.7,181.7 1113.0,127.4 1114.3,167.2 1115.6,161.6 1116.8,192.4 1118.1,177.6 1119.4,181.4 1120.7,141.6 1121.9,158.6 1123.2,158.3 1124.5,141.7 1125.8,140.4 1127.0,149.8 1128.3,193.8 1129.6,133.5 1130.8,159.8 1132.1,160.9 1133.4,140.6 1134.7,126.0 1135.9,144.5 1137.2,151.4 1138.5,146.0 1139.8,179.1 1141.0,169.7 1142.3,162.1 1143.6,148.4 1144.9,131.4 1146.1,138.9 1147.4,161.6 1148.7,150.4 1150.0,154.4 1151.2,146.5 1152.5,153.6 1153.8,145.1 1155.1,128.3 1156.3,164.8 1157.6,134.6 1158.9,173.4 1160.2,172.4 1161.4,116.8 1162.7,139.3 1164.0,114.5 1165.2,142.5 1166.5,144.3 1167.8,140.3 1169.1,114.1 1170.3,125.2 1171.6,124.0 1172.9,151.7 1174.2,155.3 1175.4,134.9 1176.7,101.6 1178.0,160.7 1179.3,112.6 1180.5,121.0 1181.8,142.4 1183.1,154.4 1184.4,148.7 1185.6,160.2 1186.9,167.3 1188.2,171.1 1189.5,180.7 1190.7,150.3 1192.0,142.0 1193.3,137.9 1194.5,122.8 1195.8,115.4 1197.1,129.1 1198.4,173.6 1199.6,129.7 1200.9,150.3 1202.2,132.7 1203.5,189.5 1204.7,169.8 1206.0,174.0 1207.3,172.0 1208.6,146.1 1209.8,162.9 1211.1,170.5 1212.4,178.9 1213.7,144.9 1214.9,152.9 1216.2,173.8 1217.5,175.6 1218.8,166.0 1220.0,161.4 1221.3,151.4 1222.6,159.7 1223.9,179.5 1225.1,142.8 1226.4,167.5 1227.7,163.7 1228.9,164.2 1230.2,155.2 1231.5,138.4 1232.8,160.8 1234.0,163.5 1235.3,175.8 1236.6,150.7 1237.9,137.3 1239.1,130.7 1240.4,160.6 1241.7,168.3 1243.0,172.1 1244.2,165.7 1245.5,194.1 1246.8,195.9 1248.1,125.6 1249.3,146.3 1250.6,160.6 1251.9,141.1 1253.2,151.7 1254.4,168.8 1255.7,144.6 1257.0,157.5 1258.2,188.2 1259.5,161.0 1260.8,159.3 1262.1,142.7 1263.3,183.4 1264.6,148.2 1265.9,155.6 1267.2,177.8 1268.4,155.1 1269.7,149.9 1271.0,201.4 1272.3,124.0 1273.5,158.7 1274.8,203.3 1276.1,172.8 1277.4,126.1 1278.6,152.4 1279.9,157.1 1281.2,189.9 1282.5,180.5 1283.7,139.2 1285.0,174.2 1286.3,156.3 1287.6,154.3 1288.8,185.9 1290.1,140.8 1291.4,166.8 1292.6,163.5 1293.9,125.7 1295.2,128.0 1296.5,198.1 1297.7,160.9 1299.0,167.0 1300.3,150.3 1301.6,172.6 1302.8,152.4 1304.1,151.5 1305.4,169.4 1306.7,148.1 1307.9,122.6 1309.2,167.4 1310.5,160.5 1311.8,136.6 1313.0,186.2 1314.3,129.4 1315.6,175.1 1316.9,171.7 1318.1,174.9 1319.4,156.6 1320.7,158.7 1322.0,166.8 1323.2,160.4 1324.5,170.1 1325.8,157.2 1327.0,159.8 1328.3,146.0 1329.6,150.1 1330.9,166.9 1332.1,167.1 1333.4,149.9 1334.7,158.0 1336.0,143.6 1337.2,149.9 1338.5,146.0 1339.8,147.8 1341.1,136.0 1342.3,169.8 1343.6,166.2 1344.9,182.2 1346.2,138.1 1347.4,133.4 1348.7,167.0 1350.0,181.1 1351.3,95.4 1352.5,112.8 1353.8,167.0 1355.1,163.6 1356.3,129.4 1357.6,131.8 1358.9,132.0 1360.2,140.3 1361.4,137.2 1362.7,151.2 1364.0,144.8 1365.3,180.3 1366.5,164.2 1367.8,177.6 1369.1,175.0 1370.4,132.8 1371.6,110.2 1372.9,174.6 1374.2,106.8 1375.5,150.4 1376.7,172.5 1378.0,118.6 1379.3,174.8 1380.6,138.4 1381.8,136.8 1383.1,134.5 1384.4,176.6 1385.7,149.5 1386.9,156.5 1388.2,151.6 1389.5,143.2 1390.7,125.6 1392.0,176.8 1393.3,184.5 1394.6,164.5 1395.8,149.8 1397.1,140.8 1398.4,138.8 1399.7,123.7 1400.9,157.7 1402.2,174.5 1403.5,153.1 1404.8,181.1 1406.0,163.2 1407.3,174.6 1408.6,141.4 1409.9,165.5 1411.1,163.5 1412.4,159.9 1413.7,131.9 1415.0,145.6 1416.2,203.1 1417.5,148.7 1418.8,171.3 1420.0,176.5 1421.3,186.6 1422.6,187.0 1423.9,168.5 1425.1,137.6 1426.4,162.6 1427.7,153.2 1429.0,180.1 1430.2,171.9 1431.5,160.0 1432.8,161.7 1434.1,197.3 1435.3,205.3 1436.6,198.0 1437.9,192.3 1439.2,217.8 1440.4,222.3 1441.7,223.2 1443.0,180.6 1444.3,185.0 1445.5,177.5 1446.8,189.7 1448.1,167.1 1449.3,221.2 1450.6,214.1 1451.9,223.0 1453.2,213.4 1454.4,236.2 1455.7,211.8 1457.0,209.7 1458.3,228.0 1459.5,216.6 1460.8,213.8 1462.1,219.8 1463.4,208.3 1464.6,210.4 1465.9,197.9 1467.2,180.2 1468.5,239.6 1469.7,210.0 1471.0,204.4 1472.3,216.5 1473.6,209.1 1474.8,179.8 1476.1,231.9 1477.4,209.9 1478.7,203.6 1479.9,174.2 1481.2,217.0 1482.5,202.5 1483.7,206.0 1485.0,201.2 1486.3,206.6 1487.6,238.0 1488.8,213.3 1490.1,198.2 1491.4,216.4 1492.7,198.2 1493.9,225.4 1495.2,209.2 1496.5,230.8 1497.8,205.4 1499.0,196.0 1500.3,200.8 1501.6,218.9 1502.9,212.4 1504.1,211.9 1505.4,212.0 1506.7,196.2 1508.0,214.8 1509.2,186.6 1510.5,198.2 1511.8,186.0 1513.0,203.2 1514.3,201.0 1515.6,183.2 1516.9,202.7 1518.1,173.0 1519.4,195.0 1520.7,159.0 1522.0,168.6 1523.2,172.2 1524.5,144.5 1525.8,204.3 1527.1,195.2 1528.3,198.6 1529.6,175.2 1530.9,181.7 1532.2,177.5 1533.4,181.9 1534.7,167.1 1536.0,176.9 1537.3,151.6 1538.5,181.8 1539.8,177.5 1541.1,189.7 1542.4,161.5 1543.6,182.6 1544.9,184.9 1546.2,194.8 1547.4,214.3 1548.7,191.2 1550.0,195.6 1551.3,208.7 1552.5,231.9 1553.8,223.0 1555.1,205.4 1556.4,235.2 1557.6,262.4 1558.9,232.3 1560.2,245.5 1561.5,237.4 1562.7,251.8 1564.0,247.8 1565.3,233.7 1566.6,217.3 1567.8,231.1 1569.1,227.7 1570.4,207.8 1571.7,226.7 1572.9,167.9 1574.2,201.0 1575.5,187.8 1576.8,204.9 1578.0,193.1 1579.3,163.3 1580.6,176.8 1581.8,167.8 1583.1,142.2 1584.4,203.0 1585.7,204.0 1586.9,152.2 1588.2,195.3 1589.5,207.2 1590.8,163.3 1592.0,181.8 1593.3,170.2 1594.6,197.8 1595.9,187.2 1597.1,186.9 1598.4,149.5 1599.7,178.8 1601.0,212.9 1602.2,160.9 1603.5,162.8 1604.8,189.0 1606.1,195.2 1607.3,195.1 1608.6,196.7 1609.9,205.9 1611.1,210.0 1612.4,222.3 1613.7,206.7 1615.0,242.7 1616.2,204.7 1617.5,230.8 1618.8,218.5 1620.1,229.9 1621.3,267.0 1622.6,225.8 1623.9,223.2 1625.2,221.5 1626.4,233.5 1627.7,244.2 1629.0,228.0 1630.3,214.7 1631.5,230.7 1632.8,222.6 1634.1,218.1 1635.4,214.7 1636.6,200.5 1637.9,205.5 1639.2,184.6 1640.5,225.3 1641.7,181.3 1643.0,191.8 1644.3,214.7 1645.5,152.6 1646.8,184.1 1648.1,229.6 1649.4,206.3 1650.6,244.3 1651.9,194.7 1653.2,229.7 1654.5,180.1 1655.7,179.7 1657.0,200.3 1658.3,209.1 1659.6,207.8 1660.8,200.7 1662.1,173.8 1663.4,194.2 1664.7,199.7 1665.9,174.2 1667.2,208.5 1668.5,186.2 1669.8,198.1 1671.0,198.4 1672.3,182.6 1673.6,197.5 1674.8,227.9 1676.1,237.4 1677.4,217.5 1678.7,212.5 1679.9,212.7 1681.2,215.7 1682.5,252.9 1683.8,230.5 1685.0,243.8 1686.3,255.8 1687.6,244.1 1688.9,243.5 1690.1,247.1 1691.4,237.9 1692.7,248.8 1694.0,247.6 1695.2,248.6 1696.5,241.0 1697.8,252.1 1699.1,264.7 1700.3,255.5 1701.6,250.8 1702.9,256.1 1704.2,245.2 1705.4,238.2 1706.7,270.1 1708.0,249.1 1709.2,235.9 1710.5,259.8 1711.8,263.7 1713.1,243.5 1714.3,246.5 1715.6,240.2 1716.9,256.4 1718.2,255.3 1719.4,258.5 1720.7,248.8 1722.0,260.3 1723.3,257.3 1724.5,229.0 1725.8,246.1 1727.1,218.5 1728.4,220.0 1729.6,233.5 1730.9,237.1 1732.2,247.3 1733.5,278.4 1734.7,269.8 1736.0,308.3 1737.3,297.9 1738.5,308.7 1739.8,297.7 1741.1,296.6 1742.4,313.2 1743.6,311.0 1744.9,315.5 1746.2,300.0 1747.5,304.4 1748.7,301.6 1750.0,285.2 1751.3,287.2 1752.6,305.2 1753.8,309.5 1755.1,324.1 1756.4,330.3 1757.7,342.3 1758.9,350.0 1760.2,354.6 1761.5,358.6 1762.8,351.4 1764.0,358.0 1765.3,352.9 1766.6,342.4 1767.8,343.0 1769.1,356.4 1770.4,358.0 1771.7,355.7 1772.9,356.2 1774.2,356.9 1775.5,350.7 1776.8,350.2" fill="none" stroke="#8c8cff" stroke-width="1"/><circle cx="1099.0" cy="187.0" r="2.0" fill="#0000ee"/><circle cx="1100.3" cy="140.0" r="2.0" fill="#0000ee"/><circle cx="1101.5" cy="168.5" r="2.0" fill="#0000ee"/><circle cx="1102.8" cy="146.0" r="2.0" fill="#0000ee"/><circle cx="1104.1" cy="125.2" r="2.0" fill="#0000ee"/><circle cx="1105.4" cy="169.2" r="2.0" fill="#0000ee"/><circle cx="1106.6" cy="138.8" r="2.0" fill="#0000ee"/><circle cx="1107.9" cy="149.8" r="2.0" fill="#0000ee"/><circle cx="1109.2" cy="169.2" r="2.0" fill="#0000ee"/><circle cx="1110.5" cy="147.5" r="2.0" fill="#0000ee"/><circle cx="1111.7" cy="181.7" r="2.0" fill="#0000ee"/><circle cx="1113.0" cy="127.4" r="2.0" fill="#0000ee"/><circle cx="1114.3" cy="167.2" r="2.0" fill="#0000ee"/><circle cx="1115.6" cy="161.6" r="2.0" fill="#0000ee"/><circle cx="1116.8" cy="192.4" r="2.0" fill="#0000ee"/><circle cx="1118.1" cy="177.6" r="2.0" fill="#0000ee"/><circle cx="1119.4" cy="181.4" r="2.0" fill="#0000ee"/><circle cx="1120.7" cy="141.6" r="2.0" fill="#0000ee"/><circle cx="1121.9" cy="158.6" r="2.0" fill="#0000ee"/><circle cx="1123.2" cy="158.3" r="2.0" fill="#0000ee"/><circle cx="1124.5" cy="141.7" r="2.0" fill="#0000ee"/><circle cx="1125.8" cy="140.4" r="2.0" fill="#0000ee"/><circle cx="1127.0" cy="149.8" r="2.0" fill="#0000ee"/><circle cx="1128.3" cy="193.8" r="2.0" fill="#0000ee"/><circle cx="1129.6" cy="133.5" r="2.0" fill="#0000ee"/><circle cx="1130.8" cy="159.8" r="2.0" fill="#0000ee"/><circle cx="1132.1" cy="160.9" r="2.0" fill="#0000ee"/><circle cx="1133.4" cy="140.6" r="2.0" fill="#0000ee"/><circle cx="1134.7" cy="126.0" r="2.0" fill="#0000ee"/><circle cx="1135.9" cy="144.5" r="2.0" fill="#0000ee"/><circle cx="1137.2" cy="151.4" r="2.0" fill="#0000ee"/><circle cx="1138.5" cy="146.0" r="2.0" fill="#0000ee"/><circle cx="1139.8" cy="179.1" r="2.0" fill="#0000ee"/><circle cx="1141.0" cy="169.7" r="2.0" fill="#0000ee"/><circle cx="1142.3" cy="162.1" r="2.0" fill="#0000ee"/><circle cx="1143.6" cy="148.4" r="2.0" fill="#0000ee"/><circle cx="1144.9" cy="131.4" r="2.0" fill="#0000ee"/><circle cx="1146.1" cy="138.9" r="2.0" fill="#0000ee"/><circle cx="1147.4" cy="161.6" r="2.0" fill="#0000ee"/><circle cx="1148.7" cy="150.4" r="2.0" fill="#0000ee"/><circle cx="1150.0" cy="154.4" r="2.0" fill="#0000ee"/><circle cx="1151.2" cy="146.5" r="2.0" fill="#0000ee"/><circle cx="1152.5" cy="153.6" r="2.0" fill="#0000ee"/><circle cx="1153.8" cy="145.1" r="2.0" fill="#0000ee"/><circle cx="1155.1" cy="128.3" r="2.0" fill="#0000ee"/><circle cx="1156.3" cy="164.8" r="2.0" fill="#0000ee"/><circle cx="1157.6" cy="134.6" r="2.0" fill="#0000ee"/><circle cx="1158.9" cy="173.4" r="2.0" fill="#0000ee"/><circle cx="1160.2" cy="172.4" r="2.0" fill="#0000ee"/><circle cx="1161.4" cy="116.8" r="2.0" fill="#0000ee"/><circle cx="1162.7" cy="139.3" r="2.0" fill="#0000ee"/><circle cx="1164.0" cy="114.5" r="2.0" fill="#0000ee"/><circle cx="1165.2" cy="142.5" r="2.0" fill="#0000ee"/><circle cx="1166.5" cy="144.3" r="2.0" fill="#0000ee"/><circle cx="1167.8" cy="140.3" r="2.0" fill="#0000ee"/><circle cx="1169.1" cy="114.1" r="2.0" fill="#0000ee"/><circle cx="1170.3" cy="125.2" r="2.0" fill="#0000ee"/><circle cx="1171.6" cy="124.0" r="2.0" fill="#0000ee"/><circle cx="1172.9" cy="151.7" r="2.0" fill="#0000ee"/><circle cx="1174.2" cy="155.3" r="2.0" fill="#0000ee"/><circle cx="1175.4" cy="134.9" r="2.0" fill="#0000ee"/><circle cx="1176.7" cy="101.6" r="2.0" fill="#0000ee"/><circle cx="1178.0" cy="160.7" r="2.0" fill="#0000ee"/><circle cx="1179.3" cy="112.6" r="2.0" fill="#0000ee"/><circle cx="1180.5" cy="121.0" r="2.0" fill="#0000ee"/><circle cx="1181.8" cy="142.4" r="2.0" fill="#0000ee"/><circle cx="1183.1" cy="154.4" r="2.0" fill="#0000ee"/><circle cx="1184.4" cy="148.7" r="2.0" fill="#0000ee"/><circle cx="1185.6" cy="160.2" r="2.0" fill="#0000ee"/><circle cx="1186.9" cy="167.3" r="2.0" fill="#0000ee"/><circle cx="1188.2" cy="171.1" r="2.0" fill="#0000ee"/><circle cx="1189.5" cy="180.7" r="2.0" fill="#0000ee"/><circle cx="1190.7" cy="150.3" r="2.0" fill="#0000ee"/><circle cx="1192.0" cy="142.0" r="2.0" fill="#0000ee"/><circle cx="1193.3" cy="137.9" r="2.0" fill="#0000ee"/><circle cx="1194.5" cy="122.8" r="2.0" fill="#0000ee"/><circle cx="1195.8" cy="115.4" r="2.0" fill="#0000ee"/><circle cx="1197.1" cy="129.1" r="2.0" fill="#0000ee"/><circle cx="1198.4" cy="173.6" r="2.0" fill="#0000ee"/><circle cx="1199.6" cy="129.7" r="2.0" fill="#0000ee"/><circle cx="1200.9" cy="150.3" r="2.0" fill="#0000ee"/><circle cx="1202.2" cy="132.7" r="2.0" fill="#0000ee"/><circle cx="1203.5" cy="189.5" r="2.0" fill="#0000ee"/><circle cx="1204.7" cy="169.8" r="2.0" fill="#0000ee"/><circle cx="1206.0" cy="174.0" r="2.0" fill="#0000ee"/><circle cx="1207.3" cy="172.0" r="2.0" fill="#0000ee"/><circle cx="1208.6" cy="146.1" r="2.0" fill="#0000ee"/><circle cx="1209.8" cy="162.9" r="2.0" fill="#0000ee"/><circle cx="1211.1" cy="170.5" r="2.0" fill="#0000ee"/><circle cx="1212.4" cy="178.9" r="2.0" fill="#0000ee"/><circle cx="1213.7" cy="144.9" r="2.0" fill="#0000ee"/><circle cx="1214.9" cy="152.9" r="2.0" fill="#0000ee"/><circle cx="1216.2" cy="173.8" r="2.0" fill="#0000ee"/><circle cx="1217.5" cy="175.6" r="2.0" fill="#0000ee"/><circle cx="1218.8" cy="166.0" r="2.0" fill="#0000ee"/><circle cx="1220.0" cy="161.4" r="2.0" fill="#0000ee"/><circle cx="1221.3" cy="151.4" r="2.0" fill="#0000ee"/><circle cx="1222.6" cy="159.7" r="2.0" fill="#0000ee"/><circle cx="1223.9" cy="179.5" r="2.0" fill="#0000ee"/><circle cx="1225.1" cy="142.8" r="2.0" fill="#0000ee"/><circle cx="1226.4" cy="167.5" r="2.0" fill="#0000ee"/><circle cx="1227.7" cy="163.7" r="2.0" fill="#0000ee"/><circle cx="1228.9" cy="164.2" r="2.0" fill="#0000ee"/><circle cx="1230.2" cy="155.2" r="2.0" fill="#0000ee"/><circle cx="1231.5" cy="138.4" r="2.0" fill="#0000ee"/><circle cx="1232.8" cy="160.8" r="2.0" fill="#0000ee"/><circle cx="1234.0" cy="163.5" r="2.0" fill="#0000ee"/><circle cx="1235.3" cy="175.8" r="2.0" fill="#0000ee"/><circle cx="1236.6" cy="150.7" r="2.0" fill="#0000ee"/><circle cx="1237.9" cy="137.3" r="2.0" fill="#0000ee"/><circle cx="1239.1" cy="130.7" r="2.0" fill="#0000ee"/><circle cx="1240.4" cy="160.6" r="2.0" fill="#0000ee"/><circle cx="1241.7" cy="168.3" r="2.0" fill="#0000ee"/><circle cx="1243.0" cy="172.1" r="2.0" fill="#0000ee"/><circle cx="1244.2" cy="165.7" r="2.0" fill="#0000ee"/><circle cx="1245.5" cy="194.1" r="2.0" fill="#0000ee"/><circle cx="1246.8" cy="195.9" r="2.0" fill="#0000ee"/><circle cx="1248.1" cy="125.6" r="2.0" fill="#0000ee"/><circle cx="1249.3" cy="146.3" r="2.0" fill="#0000ee"/><circle cx="1250.6" cy="160.6" r="2.0" fill="#0000ee"/><circle cx="1251.9" cy="141.1" r="2.0" fill="#0000ee"/><circle cx="1253.2" cy="151.7" r="2.0" fill="#0000ee"/><circle cx="1254.4" cy="168.8" r="2.0" fill="#0000ee"/><circle cx="1255.7" cy="144.6" r="2.0" fill="#0000ee"/><circle cx="1257.0" cy="157.5" r="2.0" fill="#0000ee"/><circle cx="1258.2" cy="188.2" r="2.0" fill="#0000ee"/><circle cx="1259.5" cy="161.0" r="2.0" fill="#0000ee"/><circle cx="1260.8" cy="159.3" r="2.0" fill="#0000ee"/><circle cx="1262.1" cy="142.7" r="2.0" fill="#0000ee"/><circle cx="1263.3" cy="183.4" r="2.0" fill="#0000ee"/><circle cx="1264.6" cy="148.2" r="2.0" fill="#0000ee"/><circle cx="1265.9" cy="155.6" r="2.0" fill="#0000ee"/><circle cx="1267.2" cy="177.8" r="2.0" fill="#0000ee"/><circle cx="1268.4" cy="155.1" r="2.0" fill="#0000ee"/><circle cx="1269.7" cy="149.9" r="2.0" fill="#0000ee"/><circle cx="1271.0" cy="201.4" r="2.0" fill="#0000ee"/><circle cx="1272.3" cy="124.0" r="2.0" fill="#0000ee"/><circle cx="1273.5" cy="158.7" r="2.0" fill="#0000ee"/><circle cx="1274.8" cy="203.3" r="2.0" fill="#0000ee"/><circle cx="1276.1" cy="172.8" r="2.0" fill="#0000ee"/><circle cx="1277.4" cy="126.1" r="2.0" fill="#0000ee"/><circle cx="1278.6" cy="152.4" r="2.0" fill="#0000ee"/><circle cx="1279.9" cy="157.1" r="2.0" fill="#0000ee"/><circle cx="1281.2" cy="189.9" r="2.0" fill="#0000ee"/><circle cx="1282.5" cy="180.5" r="2.0" fill="#0000ee"/><circle cx="1283.7" cy="139.2" r="2.0" fill="#0000ee"/><circle cx="1285.0" cy="174.2" r="2.0" fill="#0000ee"/><circle cx="1286.3" cy="156.3" r="2.0" fill="#0000ee"/><circle cx="1287.6" cy="154.3" r="2.0" fill="#0000ee"/><circle cx="1288.8" cy="185.9" r="2.0" fill="#0000ee"/><circle cx="1290.1" cy="140.8" r="2.0" fill="#0000ee"/><circle cx="1291.4" cy="166.8" r="2.0" fill="#0000ee"/><circle cx="1292.6" cy="163.5" r="2.0" fill="#0000ee"/><circle cx="1293.9" cy="125.7" r="2.0" fill="#0000ee"/><circle cx="1295.2" cy="128.0" r="2.0" fill="#0000ee"/><circle cx="1296.5" cy="198.1" r="2.0" fill="#0000ee"/><circle cx="1297.7" cy="160.9" r="2.0" fill="#0000ee"/><circle cx="1299.0" cy="167.0" r="2.0" fill="#0000ee"/><circle cx="1300.3" cy="150.3" r="2.0" fill="#0000ee"/><circle cx="1301.6" cy="172.6" r="2.0" fill="#0000ee"/><circle cx="1302.8" cy="152.4" r="2.0" fill="#0000ee"/><circle cx="1304.1" cy="151.5" r="2.0" fill="#0000ee"/><circle cx="1305.4" cy="169.4" r="2.0" fill="#0000ee"/><circle cx="1306.7" cy="148.1" r="2.0" fill="#0000ee"/><circle cx="1307.9" cy="122.6" r="2.0" fill="#0000ee"/><circle cx="1309.2" cy="167.4" r="2.0" fill="#0000ee"/><circle cx="1310.5" cy="160.5" r="2.0" fill="#0000ee"/><circle cx="1311.8" cy="136.6" r="2.0" fill="#0000ee"/><circle cx="1313.0" cy="186.2" r="2.0" fill="#0000ee"/><circle cx="1314.3" cy="129.4" r="2.0" fill="#0000ee"/><circle cx="1315.6" cy="175.1" r="2.0" fill="#0000ee"/><circle cx="1316.9" cy="171.7" r="2.0" fill="#0000ee"/><circle cx="1318.1" cy="174.9" r="2.0" fill="#0000ee"/><circle cx="1319.4" cy="156.6" r="2.0" fill="#0000ee"/><circle cx="1320.7" cy="158.7" r="2.0" fill="#0000ee"/><circle cx="1322.0" cy="166.8" r="2.0" fill="#0000ee"/><circle cx="1323.2" cy="160.4" r="2.0" fill="#0000ee"/><circle cx="1324.5" cy="170.1" r="2.0" fill="#0000ee"/><circle cx="1325.8" cy="157.2" r="2.0" fill="#0000ee"/><circle cx="1327.0" cy="159.8" r="2.0" fill="#0000ee"/><circle cx="1328.3" cy="146.0" r="2.0" fill="#0000ee"/><circle cx="1329.6" cy="150.1" r="2.0" fill="#0000ee"/><circle cx="1330.9" cy="166.9" r="2.0" fill="#0000ee"/><circle cx="1332.1" cy="167.1" r="2.0" fill="#0000ee"/><circle cx="1333.4" cy="149.9" r="2.0" fill="#0000ee"/><circle cx="1334.7" cy="158.0" r="2.0" fill="#0000ee"/><circle cx="1336.0" cy="143.6" r="2.0" fill="#0000ee"/><circle cx="1337.2" cy="149.9" r="2.0" fill="#0000ee"/><circle cx="1338.5" cy="146.0" r="2.0" fill="#0000ee"/><circle cx="1339.8" cy="147.8" r="2.0" fill="#0000ee"/><circle cx="1341.1" cy="136.0" r="2.0" fill="#0000ee"/><circle cx="1342.3" cy="169.8" r="2.0" fill="#0000ee"/><circle cx="1343.6" cy="166.2" r="2.0" fill="#0000ee"/><circle cx="1344.9" cy="182.2" r="2.0" fill="#0000ee"/><circle cx="1346.2" cy="138.1" r="2.0" fill="#0000ee"/><circle cx="1347.4" cy="133.4" r="2.0" fill="#0000ee"/><circle cx="1348.7" cy="167.0" r="2.0" fill="#0000ee"/><circle cx="1350.0" cy="181.1" r="2.0" fill="#0000ee"/><circle cx="1351.3" cy="95.4" r="2.0" fill="#0000ee"/><circle cx="1352.5" cy="112.8" r="2.0" fill="#0000ee"/><circle cx="1353.8" cy="167.0" r="2.0" fill="#0000ee"/><circle cx="1355.1" cy="163.6" r="2.0" fill="#0000ee"/><circle cx="1356.3" cy="129.4" r="2.0" fill="#0000ee"/><circle cx="1357.6" cy="131.8" r="2.0" fill="#0000ee"/><circle cx="1358.9" cy="132.0" r="2.0" fill="#0000ee"/><circle cx="1360.2" cy="140.3" r="2.0" fill="#0000ee"/><circle cx="1361.4" cy="137.2" r="2.0" fill="#0000ee"/><circle cx="1362.7" cy="151.2" r="2.0" fill="#0000ee"/><circle cx="1364.0" cy="144.8" r="2.0" fill="#0000ee"/><circle cx="1365.3" cy="180.3" r="2.0" fill="#0000ee"/><circle cx="1366.5" cy="164.2" r="2.0" fill="#0000ee"/><circle cx="1367.8" cy="177.6" r="2.0" fill="#0000ee"/><circle cx="1369.1" cy="175.0" r="2.0" fill="#0000ee"/><circle cx="1370.4" cy="132.8" r="2.0" fill="#0000ee"/><circle cx="1371.6" cy="110.2" r="2.0" fill="#0000ee"/><circle cx="1372.9" cy="174.6" r="2.0" fill="#0000ee"/><circle cx="1374.2" cy="106.8" r="2.0" fill="#0000ee"/><circle cx="1375.5" cy="150.4" r="2.0" fill="#0000ee"/><circle cx="1376.7" cy="172.5" r="2.0" fill="#0000ee"/><circle cx="1378.0" cy="118.6" r="2.0" fill="#0000ee"/><circle cx="1379.3" cy="174.8" r="2.0" fill="#0000ee"/><circle cx="1380.6" cy="138.4" r="2.0" fill="#0000ee"/><circle cx="1381.8" cy="136.8" r="2.0" fill="#0000ee"/><circle cx="1383.1" cy="134.5" r="2.0" fill="#0000ee"/><circle cx="1384.4" cy="176.6" r="2.0" fill="#0000ee"/><circle cx="1385.7" cy="149.5" r="2.0" fill="#0000ee"/><circle cx="1386.9" cy="156.5" r="2.0" fill="#0000ee"/><circle cx="1388.2" cy="151.6" r="2.0" fill="#0000ee"/><circle cx="1389.5" cy="143.2" r="2.0" fill="#0000ee"/><circle cx="1390.7" cy="125.6" r="2.0" fill="#0000ee"/><circle cx="1392.0" cy="176.8" r="2.0" fill="#0000ee"/><circle cx="1393.3" cy="184.5" r="2.0" fill="#0000ee"/><circle cx="1394.6" cy="164.5" r="2.0" fill="#0000ee"/><circle cx="1395.8" cy="149.8" r="2.0" fill="#0000ee"/><circle cx="1397.1" cy="140.8" r="2.0" fill="#0000ee"/><circle cx="1398.4" cy="138.8" r="2.0" fill="#0000ee"/><circle cx="1399.7" cy="123.7" r="2.0" fill="#0000ee"/><circle cx="1400.9" cy="157.7" r="2.0" fill="#0000ee"/><circle cx="1402.2" cy="174.5" r="2.0" fill="#0000ee"/><circle cx="1403.5" cy="153.1" r="2.0" fill="#0000ee"/><circle cx="1404.8" cy="181.1" r="2.0" fill="#0000ee"/><circle cx="1406.0" cy="163.2" r="2.0" fill="#0000ee"/><circle cx="1407.3" cy="174.6" r="2.0" fill="#0000ee"/><circle cx="1408.6" cy="141.4" r="2.0" fill="#0000ee"/><circle cx="1409.9" cy="165.5" r="2.0" fill="#0000ee"/><circle cx="1411.1" cy="163.5" r="2.0" fill="#0000ee"/><circle cx="1412.4" cy="159.9" r="2.0" fill="#0000ee"/><circle cx="1413.7" cy="131.9" r="2.0" fill="#0000ee"/><circle cx="1415.0" cy="145.6" r="2.0" fill="#0000ee"/><circle cx="1416.2" cy="203.1" r="2.0" fill="#0000ee"/><circle cx="1417.5" cy="148.7" r="2.0" fill="#0000ee"/><circle cx="1418.8" cy="171.3" r="2.0" fill="#0000ee"/><circle cx="1420.0" cy="176.5" r="2.0" fill="#0000ee"/><circle cx="1421.3" cy="186.6" r="2.0" fill="#0000ee"/><circle cx="1422.6" cy="187.0" r="2.0" fill="#0000ee"/><circle cx="1423.9" cy="168.5" r="2.0" fill="#0000ee"/><circle cx="1425.1" cy="137.6" r="2.0" fill="#0000ee"/><circle cx="1426.4" cy="162.6" r="2.0" fill="#0000ee"/><circle cx="1427.7" cy="153.2" r="2.0" fill="#0000ee"/><circle cx="1429.0" cy="180.1" r="2.0" fill="#0000ee"/><circle cx="1430.2" cy="171.9" r="2.0" fill="#0000ee"/><circle cx="1431.5" cy="160.0" r="2.0" fill="#0000ee"/><circle cx="1432.8" cy="161.7" r="2.0" fill="#0000ee"/><circle cx="1434.1" cy="197.3" r="2.0" fill="#0000ee"/><circle cx="1435.3" cy="205.3" r="2.0" fill="#0000ee"/><circle cx="1436.6" cy="198.0" r="2.0" fill="#0000ee"/><circle cx="1437.9" cy="192.3" r="2.0" fill="#0000ee"/><circle cx="1439.2" cy="217.8" r="2.0" fill="#0000ee"/><circle cx="1440.4" cy="222.3" r="2.0" fill="#0000ee"/><circle cx="1441.7" cy="223.2" r="2.0" fill="#0000ee"/><circle cx="1443.0" cy="180.6" r="2.0" fill="#0000ee"/><circle cx="1444.3" cy="185.0" r="2.0" fill="#0000ee"/><circle cx="1445.5" cy="177.5" r="2.0" fill="#0000ee"/><circle cx="1446.8" cy="189.7" r="2.0" fill="#0000ee"/><circle cx="1448.1" cy="167.1" r="2.0" fill="#0000ee"/><circle cx="1449.3" cy="221.2" r="2.0" fill="#0000ee"/><circle cx="1450.6" cy="214.1" r="2.0" fill="#0000ee"/><circle cx="1451.9" cy="223.0" r="2.0" fill="#0000ee"/><circle cx="1453.2" cy="213.4" r="2.0" fill="#0000ee"/><circle cx="1454.4" cy="236.2" r="2.0" fill="#0000ee"/><circle cx="1455.7" cy="211.8" r="2.0" fill="#0000ee"/><circle cx="1457.0" cy="209.7" r="2.0" fill="#0000ee"/><circle cx="1458.3" cy="228.0" r="2.0" fill="#0000ee"/><circle cx="1459.5" cy="216.6" r="2.0" fill="#0000ee"/><circle cx="1460.8" cy="213.8" r="2.0" fill="#0000ee"/><circle cx="1462.1" cy="219.8" r="2.0" fill="#0000ee"/><circle cx="1463.4" cy="208.3" r="2.0" fill="#0000ee"/><circle cx="1464.6" cy="210.4" r="2.0" fill="#0000ee"/><circle cx="1465.9" cy="197.9" r="2.0" fill="#0000ee"/><circle cx="1467.2" cy="180.2" r="2.0" fill="#0000ee"/><circle cx="1468.5" cy="239.6" r="2.0" fill="#0000ee"/><circle cx="1469.7" cy="210.0" r="2.0" fill="#0000ee"/><circle cx="1471.0" cy="204.4" r="2.0" fill="#0000ee"/><circle cx="1472.3" cy="216.5" r="2.0" fill="#0000ee"/><circle cx="1473.6" cy="209.1" r="2.0" fill="#0000ee"/><circle cx="1474.8" cy="179.8" r="2.0" fill="#0000ee"/><circle cx="1476.1" cy="231.9" r="2.0" fill="#0000ee"/><circle cx="1477.4" cy="209.9" r="2.0" fill="#0000ee"/><circle cx="1478.7" cy="203.6" r="2.0" fill="#0000ee"/><circle cx="1479.9" cy="174.2" r="2.0" fill="#0000ee"/><circle cx="1481.2" cy="217.0" r="2.0" fill="#0000ee"/><circle cx="1482.5" cy="202.5" r="2.0" fill="#0000ee"/><circle cx="1483.7" cy="206.0" r="2.0" fill="#0000ee"/><circle cx="1485.0" cy="201.2" r="2.0" fill="#0000ee"/><circle cx="1486.3" cy="206.6" r="2.0" fill="#0000ee"/><circle cx="1487.6" cy="238.0" r="2.0" fill="#0000ee"/><circle cx="1488.8" cy="213.3" r="2.0" fill="#0000ee"/><circle cx="1490.1" cy="198.2" r="2.0" fill="#0000ee"/><circle cx="1491.4" cy="216.4" r="2.0" fill="#0000ee"/><circle cx="1492.7" cy="198.2" r="2.0" fill="#0000ee"/><circle cx="1493.9" cy="225.4" r="2.0" fill="#0000ee"/><circle cx="1495.2" cy="209.2" r="2.0" fill="#0000ee"/><circle cx="1496.5" cy="230.8" r="2.0" fill="#0000ee"/><circle cx="1497.8" cy="205.4" r="2.0" fill="#0000ee"/><circle cx="1499.0" cy="196.0" r="2.0" fill="#0000ee"/><circle cx="1500.3" cy="200.8" r="2.0" fill="#0000ee"/><circle cx="1501.6" cy="218.9" r="2.0" fill="#0000ee"/><circle cx="1502.9" cy="212.4" r="2.0" fill="#0000ee"/><circle cx="1504.1" cy="211.9" r="2.0" fill="#0000ee"/><circle cx="1505.4" cy="212.0" r="2.0" fill="#0000ee"/><circle cx="1506.7" cy="196.2" r="2.0" fill="#0000ee"/><circle cx="1508.0" cy="214.8" r="2.0" fill="#0000ee"/><circle cx="1509.2" cy="186.6" r="2.0" fill="#0000ee"/><circle cx="1510.5" cy="198.2" r="2.0" fill="#0000ee"/><circle cx="1511.8" cy="186.0" r="2.0" fill="#0000ee"/><circle cx="1513.0" cy="203.2" r="2.0" fill="#0000ee"/><circle cx="1514.3" cy="201.0" r="2.0" fill="#0000ee"/><circle cx="1515.6" cy="183.2" r="2.0" fill="#0000ee"/><circle cx="1516.9" cy="202.7" r="2.0" fill="#0000ee"/><circle cx="1518.1" cy="173.0" r="2.0" fill="#0000ee"/><circle cx="1519.4" cy="195.0" r="2.0" fill="#0000ee"/><circle cx="1520.7" cy="159.0" r="2.0" fill="#0000ee"/><circle cx="1522.0" cy="168.6" r="2.0" fill="#0000ee"/><circle cx="1523.2" cy="172.2" r="2.0" fill="#0000ee"/><circle cx="1524.5" cy="144.5" r="2.0" fill="#0000ee"/><circle cx="1525.8" cy="204.3" r="2.0" fill="#0000ee"/><circle cx="1527.1" cy="195.2" r="2.0" fill="#0000ee"/><circle cx="1528.3" cy="198.6" r="2.0" fill="#0000ee"/><circle cx="1529.6" cy="175.2" r="2.0" fill="#0000ee"/><circle cx="1530.9" cy="181.7" r="2.0" fill="#0000ee"/><circle cx="1532.2" cy="177.5" r="2.0" fill="#0000ee"/><circle cx="1533.4" cy="181.9" r="2.0" fill="#0000ee"/><circle cx="1534.7" cy="167.1" r="2.0" fill="#0000ee"/><circle cx="1536.0" cy="176.9" r="2.0" fill="#0000ee"/><circle cx="1537.3" cy="151.6" r="2.0" fill="#0000ee"/><circle cx="1538.5" cy="181.8" r="2.0" fill="#0000ee"/><circle cx="1539.8" cy="177.5" r="2.0" fill="#0000ee"/><circle cx="1541.1" cy="189.7" r="2.0" fill="#0000ee"/><circle cx="1542.4" cy="161.5" r="2.0" fill="#0000ee"/><circle cx="1543.6" cy="182.6" r="2.0" fill="#0000ee"/><circle cx="1544.9" cy="184.9" r="2.0" fill="#0000ee"/><circle cx="1546.2" cy="194.8" r="2.0" fill="#0000ee"/><circle cx="1547.4" cy="214.3" r="2.0" fill="#0000ee"/><circle cx="1548.7" cy="191.2" r="2.0" fill="#0000ee"/><circle cx="1550.0" cy="195.6" r="2.0" fill="#0000ee"/><circle cx="1551.3" cy="208.7" r="2.0" fill="#0000ee"/><circle cx="1552.5" cy="231.9" r="2.0" fill="#0000ee"/><circle cx="1553.8" cy="223.0" r="2.0" fill="#0000ee"/><circle cx="1555.1" cy="205.4" r="2.0" fill="#0000ee"/><circle cx="1556.4" cy="235.2" r="2.0" fill="#0000ee"/><circle cx="1557.6" cy="262.4" r="2.0" fill="#0000ee"/><circle cx="1558.9" cy="232.3" r="2.0" fill="#0000ee"/><circle cx="1560.2" cy="245.5" r="2.0" fill="#0000ee"/><circle cx="1561.5" cy="237.4" r="2.0" fill="#0000ee"/><circle cx="1562.7" cy="251.8" r="2.0" fill="#0000ee"/><circle cx="1564.0" cy="247.8" r="2.0" fill="#0000ee"/><circle cx="1565.3" cy="233.7" r="2.0" fill="#0000ee"/><circle cx="1566.6" cy="217.3" r="2.0" fill="#0000ee"/><circle cx="1567.8" cy="231.1" r="2.0" fill="#0000ee"/><circle cx="1569.1" cy="227.7" r="2.0" fill="#0000ee"/><circle cx="1570.4" cy="207.8" r="2.0" fill="#0000ee"/><circle cx="1571.7" cy="226.7" r="2.0" fill="#0000ee"/><circle cx="1572.9" cy="167.9" r="2.0" fill="#0000ee"/><circle cx="1574.2" cy="201.0" r="2.0" fill="#0000ee"/><circle cx="1575.5" cy="187.8" r="2.0" fill="#0000ee"/><circle cx="1576.8" cy="204.9" r="2.0" fill="#0000ee"/><circle cx="1578.0" cy="193.1" r="2.0" fill="#0000ee"/><circle cx="1579.3" cy="163.3" r="2.0" fill="#0000ee"/><circle cx="1580.6" cy="176.8" r="2.0" fill="#0000ee"/><circle cx="1581.8" cy="167.8" r="2.0" fill="#0000ee"/><circle cx="1583.1" cy="142.2" r="2.0" fill="#0000ee"/><circle cx="1584.4" cy="203.0" r="2.0" fill="#0000ee"/><circle cx="1585.7" cy="204.0" r="2.0" fill="#0000ee"/><circle cx="1586.9" cy="152.2" r="2.0" fill="#0000ee"/><circle cx="1588.2" cy="195.3" r="2.0" fill="#0000ee"/><circle cx="1589.5" cy="207.2" r="2.0" fill="#0000ee"/><circle cx="1590.8" cy="163.3" r="2.0" fill="#0000ee"/><circle cx="1592.0" cy="181.8" r="2.0" fill="#0000ee"/><circle cx="1593.3" cy="170.2" r="2.0" fill="#0000ee"/><circle cx="1594.6" cy="197.8" r="2.0" fill="#0000ee"/><circle cx="1595.9" cy="187.2" r="2.0" fill="#0000ee"/><circle cx="1597.1" cy="186.9" r="2.0" fill="#0000ee"/><circle cx="1598.4" cy="149.5" r="2.0" fill="#0000ee"/><circle cx="1599.7" cy="178.8" r="2.0" fill="#0000ee"/><circle cx="1601.0" cy="212.9" r="2.0" fill="#0000ee"/><circle cx="1602.2" cy="160.9" r="2.0" fill="#0000ee"/><circle cx="1603.5" cy="162.8" r="2.0" fill="#0000ee"/><circle cx="1604.8" cy="189.0" r="2.0" fill="#0000ee"/><circle cx="1606.1" cy="195.2" r="2.0" fill="#0000ee"/><circle cx="1607.3" cy="195.1" r="2.0" fill="#0000ee"/><circle cx="1608.6" cy="196.7" r="2.0" fill="#0000ee"/><circle cx="1609.9" cy="205.9" r="2.0" fill="#0000ee"/><circle cx="1611.1" cy="210.0" r="2.0" fill="#0000ee"/><circle cx="1612.4" cy="222.3" r="2.0" fill="#0000ee"/><circle cx="1613.7" cy="206.7" r="2.0" fill="#0000ee"/><circle cx="1615.0" cy="242.7" r="2.0" fill="#0000ee"/><circle cx="1616.2" cy="204.7" r="2.0" fill="#0000ee"/><circle cx="1617.5" cy="230.8" r="2.0" fill="#0000ee"/><circle cx="1618.8" cy="218.5" r="2.0" fill="#0000ee"/><circle cx="1620.1" cy="229.9" r="2.0" fill="#0000ee"/><circle cx="1621.3" cy="267.0" r="2.0" fill="#0000ee"/><circle cx="1622.6" cy="225.8" r="2.0" fill="#0000ee"/><circle cx="1623.9" cy="223.2" r="2.0" fill="#0000ee"/><circle cx="1625.2" cy="221.5" r="2.0" fill="#0000ee"/><circle cx="1626.4" cy="233.5" r="2.0" fill="#0000ee"/><circle cx="1627.7" cy="244.2" r="2.0" fill="#0000ee"/><circle cx="1629.0" cy="228.0" r="2.0" fill="#0000ee"/><circle cx="1630.3" cy="214.7" r="2.0" fill="#0000ee"/><circle cx="1631.5" cy="230.7" r="2.0" fill="#0000ee"/><circle cx="1632.8" cy="222.6" r="2.0" fill="#0000ee"/><circle cx="1634.1" cy="218.1" r="2.0" fill="#0000ee"/><circle cx="1635.4" cy="214.7" r="2.0" fill="#0000ee"/><circle cx="1636.6" cy="200.5" r="2.0" fill="#0000ee"/><circle cx="1637.9" cy="205.5" r="2.0" fill="#0000ee"/><circle cx="1639.2" cy="184.6" r="2.0" fill="#0000ee"/><circle cx="1640.5" cy="225.3" r="2.0" fill="#0000ee"/><circle cx="1641.7" cy="181.3" r="2.0" fill="#0000ee"/><circle cx="1643.0" cy="191.8" r="2.0" fill="#0000ee"/><circle cx="1644.3" cy="214.7" r="2.0" fill="#0000ee"/><circle cx="1645.5" cy="152.6" r="2.0" fill="#0000ee"/><circle cx="1646.8" cy="184.1" r="2.0" fill="#0000ee"/><circle cx="1648.1" cy="229.6" r="2.0" fill="#0000ee"/><circle cx="1649.4" cy="206.3" r="2.0" fill="#0000ee"/><circle cx="1650.6" cy="244.3" r="2.0" fill="#0000ee"/><circle cx="1651.9" cy="194.7" r="2.0" fill="#0000ee"/><circle cx="1653.2" cy="229.7" r="2.0" fill="#0000ee"/><circle cx="1654.5" cy="180.1" r="2.0" fill="#0000ee"/><circle cx="1655.7" cy="179.7" r="2.0" fill="#0000ee"/><circle cx="1657.0" cy="200.3" r="2.0" fill="#0000ee"/><circle cx="1658.3" cy="209.1" r="2.0" fill="#0000ee"/><circle cx="1659.6" cy="207.8" r="2.0" fill="#0000ee"/><circle cx="1660.8" cy="200.7" r="2.0" fill="#0000ee"/><circle cx="1662.1" cy="173.8" r="2.0" fill="#0000ee"/><circle cx="1663.4" cy="194.2" r="2.0" fill="#0000ee"/><circle cx="1664.7" cy="199.7" r="2.0" fill="#0000ee"/><circle cx="1665.9" cy="174.2" r="2.0" fill="#0000ee"/><circle cx="1667.2" cy="208.5" r="2.0" fill="#0000ee"/><circle cx="1668.5" cy="186.2" r="2.0" fill="#0000ee"/><circle cx="1669.8" cy="198.1" r="2.0" fill="#0000ee"/><circle cx="1671.0" cy="198.4" r="2.0" fill="#0000ee"/><circle cx="1672.3" cy="182.6" r="2.0" fill="#0000ee"/><circle cx="1673.6" cy="197.5" r="2.0" fill="#0000ee"/><circle cx="1674.8" cy="227.9" r="2.0" fill="#0000ee"/><circle cx="1676.1" cy="237.4" r="2.0" fill="#0000ee"/><circle cx="1677.4" cy="217.5" r="2.0" fill="#0000ee"/><circle cx="1678.7" cy="212.5" r="2.0" fill="#0000ee"/><circle cx="1679.9" cy="212.7" r="2.0" fill="#0000ee"/><circle cx="1681.2" cy="215.7" r="2.0" fill="#0000ee"/><circle cx="1682.5" cy="252.9" r="2.0" fill="#0000ee"/><circle cx="1683.8" cy="230.5" r="2.0" fill="#0000ee"/><circle cx="1685.0" cy="243.8" r="2.0" fill="#0000ee"/><circle cx="1686.3" cy="255.8" r="2.0" fill="#0000ee"/><circle cx="1687.6" cy="244.1" r="2.0" fill="#0000ee"/><circle cx="1688.9" cy="243.5" r="2.0" fill="#0000ee"/><circle cx="1690.1" cy="247.1" r="2.0" fill="#0000ee"/><circle cx="1691.4" cy="237.9" r="2.0" fill="#0000ee"/><circle cx="1692.7" cy="248.8" r="2.0" fill="#0000ee"/><circle cx="1694.0" cy="247.6" r="2.0" fill="#0000ee"/><circle cx="1695.2" cy="248.6" r="2.0" fill="#0000ee"/><circle cx="1696.5" cy="241.0" r="2.0" fill="#0000ee"/><circle cx="1697.8" cy="252.1" r="2.0" fill="#0000ee"/><circle cx="1699.1" cy="264.7" r="2.0" fill="#0000ee"/><circle cx="1700.3" cy="255.5" r="2.0" fill="#0000ee"/><circle cx="1701.6" cy="250.8" r="2.0" fill="#0000ee"/><circle cx="1702.9" cy="256.1" r="2.0" fill="#0000ee"/><circle cx="1704.2" cy="245.2" r="2.0" fill="#0000ee"/><circle cx="1705.4" cy="238.2" r="2.0" fill="#0000ee"/><circle cx="1706.7" cy="270.1" r="2.0" fill="#0000ee"/><circle cx="1708.0" cy="249.1" r="2.0" fill="#0000ee"/><circle cx="1709.2" cy="235.9" r="2.0" fill="#0000ee"/><circle cx="1710.5" cy="259.8" r="2.0" fill="#0000ee"/><circle cx="1711.8" cy="263.7" r="2.0" fill="#0000ee"/><circle cx="1713.1" cy="243.5" r="2.0" fill="#0000ee"/><circle cx="1714.3" cy="246.5" r="2.0" fill="#0000ee"/><circle cx="1715.6" cy="240.2" r="2.0" fill="#0000ee"/><circle cx="1716.9" cy="256.4" r="2.0" fill="#0000ee"/><circle cx="1718.2" cy="255.3" r="2.0" fill="#0000ee"/><circle cx="1719.4" cy="258.5" r="2.0" fill="#0000ee"/><circle cx="1720.7" cy="248.8" r="2.0" fill="#0000ee"/><circle cx="1722.0" cy="260.3" r="2.0" fill="#0000ee"/><circle cx="1723.3" cy="257.3" r="2.0" fill="#0000ee"/><circle cx="1724.5" cy="229.0" r="2.0" fill="#0000ee"/><circle cx="1725.8" cy="246.1" r="2.0" fill="#0000ee"/><circle cx="1727.1" cy="218.5" r="2.0" fill="#0000ee"/><circle cx="1728.4" cy="220.0" r="2.0" fill="#0000ee"/><circle cx="1729.6" cy="233.5" r="2.0" fill="#0000ee"/><circle cx="1730.9" cy="237.1" r="2.0" fill="#0000ee"/><circle cx="1732.2" cy="247.3" r="2.0" fill="#0000ee"/><circle cx="1733.5" cy="278.4" r="2.0" fill="#0000ee"/><circle cx="1734.7" cy="269.8" r="2.0" fill="#0000ee"/><circle cx="1736.0" cy="308.3" r="2.0" fill="#0000ee"/><circle cx="1737.3" cy="297.9" r="2.0" fill="#0000ee"/><circle cx="1738.5" cy="308.7" r="2.0" fill="#0000ee"/><circle cx="1739.8" cy="297.7" r="2.0" fill="#0000ee"/><circle cx="1741.1" cy="296.6" r="2.0" fill="#0000ee"/><circle cx="1742.4" cy="313.2" r="2.0" fill="#0000ee"/><circle cx="1743.6" cy="311.0" r="2.0" fill="#0000ee"/><circle cx="1744.9" cy="315.5" r="2.0" fill="#0000ee"/><circle cx="1746.2" cy="300.0" r="2.0" fill="#0000ee"/><circle cx="1747.5" cy="304.4" r="2.0" fill="#0000ee"/><circle cx="1748.7" cy="301.6" r="2.0" fill="#0000ee"/><circle cx="1750.0" cy="285.2" r="2.0" fill="#0000ee"/><circle cx="1751.3" cy="287.2" r="2.0" fill="#0000ee"/><circle cx="1752.6" cy="305.2" r="2.0" fill="#0000ee"/><circle cx="1753.8" cy="309.5" r="2.0" fill="#0000ee"/><circle cx="1755.1" cy="324.1" r="2.0" fill="#0000ee"/><circle cx="1756.4" cy="330.3" r="2.0" fill="#0000ee"/><circle cx="1757.7" cy="342.3" r="2.0" fill="#0000ee"/><circle cx="1758.9" cy="350.0" r="2.0" fill="#0000ee"/><circle cx="1760.2" cy="354.6" r="2.0" fill="#0000ee"/><circle cx="1761.5" cy="358.6" r="2.0" fill="#0000ee"/><circle cx="1762.8" cy="351.4" r="2.0" fill="#0000ee"/><circle cx="1764.0" cy="358.0" r="2.0" fill="#0000ee"/><circle cx="1765.3" cy="352.9" r="2.0" fill="#0000ee"/><circle cx="1766.6" cy="342.4" r="2.0" fill="#0000ee"/><circle cx="1767.8" cy="343.0" r="2.0" fill="#0000ee"/><circle cx="1769.1" cy="356.4" r="2.0" fill="#0000ee"/><circle cx="1770.4" cy="358.0" r="2.0" fill="#0000ee"/><circle cx="1771.7" cy="355.7" r="2.0" fill="#0000ee"/><circle cx="1772.9" cy="356.2" r="2.0" fill="#0000ee"/><circle cx="1774.2" cy="356.9" r="2.0" fill="#0000ee"/><circle cx="1775.5" cy="350.7" r="2.0" fill="#0000ee"/><circle cx="1776.8" cy="350.2" r="2.0" fill="#0000ee"/><circle cx="1458" cy="192" r="3.2" fill="#ff0000"/><circle cx="1458" cy="236" r="3.2" fill="#ff0000"/><circle cx="1458" cy="420.6" r="3.2" fill="#ff0000"/></svg>
<div class="t" style="left:1065.6px;top:163.0px;font-size:12px;color:#000;font-family:'Liberation Sans',sans-serif;transform:scaleX(0.820);transform-origin:0 0;">3000</div>
<div class="t" style="left:1065.6px;top:246.0px;font-size:12px;color:#000;font-family:'Liberation Sans',sans-serif;transform:scaleX(0.820);transform-origin:0 0;">2000</div>
<div class="t" style="left:1065.6px;top:330.0px;font-size:12px;color:#000;font-family:'Liberation Sans',sans-serif;transform:scaleX(0.820);transform-origin:0 0;">1000</div>
<div class="t" style="left:1082.0px;top:413.0px;font-size:12px;color:#000;font-family:'Liberation Sans',sans-serif;transform:scaleX(0.820);transform-origin:0 0;">0</div>
<div class="t" style="left:1097.6px;top:427.5px;font-size:12px;color:#000;font-family:'Liberation Sans',sans-serif;transform:scaleX(0.820);transform-origin:0 0;">0</div>
<div class="t" style="left:1133.0px;top:427.5px;font-size:12px;color:#000;font-family:'Liberation Sans',sans-serif;transform:scaleX(0.820);transform-origin:0 0;">30</div>
<div class="t" style="left:1171.3px;top:427.5px;font-size:12px;color:#000;font-family:'Liberation Sans',sans-serif;transform:scaleX(0.820);transform-origin:0 0;">60</div>
<div class="t" style="left:1209.5px;top:427.5px;font-size:12px;color:#000;font-family:'Liberation Sans',sans-serif;transform:scaleX(0.820);transform-origin:0 0;">90</div>
<div class="t" style="left:1245.0px;top:427.5px;font-size:12px;color:#000;font-family:'Liberation Sans',sans-serif;transform:scaleX(0.820);transform-origin:0 0;">120</div>
<div class="t" style="left:1283.2px;top:427.5px;font-size:12px;color:#000;font-family:'Liberation Sans',sans-serif;transform:scaleX(0.820);transform-origin:0 0;">150</div>
<div class="t" style="left:1321.4px;top:427.5px;font-size:12px;color:#000;font-family:'Liberation Sans',sans-serif;transform:scaleX(0.820);transform-origin:0 0;">180</div>
<div class="t" style="left:1359.6px;top:427.5px;font-size:12px;color:#000;font-family:'Liberation Sans',sans-serif;transform:scaleX(0.820);transform-origin:0 0;">210</div>
<div class="t" style="left:1397.9px;top:427.5px;font-size:12px;color:#000;font-family:'Liberation Sans',sans-serif;transform:scaleX(0.820);transform-origin:0 0;">240</div>
<div class="t" style="left:1436.1px;top:427.5px;font-size:12px;color:#000;font-family:'Liberation Sans',sans-serif;transform:scaleX(0.820);transform-origin:0 0;">270</div>
<div class="t" style="left:1474.3px;top:427.5px;font-size:12px;color:#000;font-family:'Liberation Sans',sans-serif;transform:scaleX(0.820);transform-origin:0 0;">300</div>
<div class="t" style="left:1512.5px;top:427.5px;font-size:12px;color:#000;font-family:'Liberation Sans',sans-serif;transform:scaleX(0.820);transform-origin:0 0;">330</div>
<div class="t" style="left:1550.7px;top:427.5px;font-size:12px;color:#000;font-family:'Liberation Sans',sans-serif;transform:scaleX(0.820);transform-origin:0 0;">360</div>
<div class="t" style="left:1589.0px;top:427.5px;font-size:12px;color:#000;font-family:'Liberation Sans',sans-serif;transform:scaleX(0.820);transform-origin:0 0;">390</div>
<div class="t" style="left:1627.2px;top:427.5px;font-size:12px;color:#000;font-family:'Liberation Sans',sans-serif;transform:scaleX(0.820);transform-origin:0 0;">420</div>
<div class="t" style="left:1665.4px;top:427.5px;font-size:12px;color:#000;font-family:'Liberation Sans',sans-serif;transform:scaleX(0.820);transform-origin:0 0;">450</div>
<div class="t" style="left:1703.6px;top:427.5px;font-size:12px;color:#000;font-family:'Liberation Sans',sans-serif;transform:scaleX(0.820);transform-origin:0 0;">480</div>
<div class="t" style="left:1741.8px;top:427.5px;font-size:12px;color:#000;font-family:'Liberation Sans',sans-serif;transform:scaleX(0.820);transform-origin:0 0;">510</div>
<div class="t" style="left:1056.0px;top:40.7px;font-size:12px;color:#000;font-family:'Liberation Sans',sans-serif;font-weight:bold;transform:scaleX(1.072);transform-origin:0 0;">2025 Nov 19; (80) Sappho occults UCAC4 522-020646 Observed by Toshihiro Horikawa</div>
<div class="t" style="left:1588.7px;top:40.7px;font-size:12px;color:#000;font-family:'Liberation Sans',sans-serif;transform:scaleX(1.007);transform-origin:0 0;">/ PSF-Frame Photometry /</div>
<div class="t" style="left:1056.5px;top:444.5px;font-size:12px;color:#000;font-family:'Liberation Sans',sans-serif;transform:scaleX(0.934);transform-origin:0 0;">Exp=338msec / Frm No.282.0 / Frm Mid= 0h0m0.0000s,&nbsp; End= 0.0000s</div>
<div style="position:absolute;left:1041px;top:466px;width:752px;height:1px;background:#fff;"></div>
<div style="position:absolute;left:1041px;top:597px;width:752px;height:1px;background:#a0a0a0;box-shadow:0 1px 0 #fff;"></div>
<div style="position:absolute;left:1791px;top:467px;width:1px;height:130px;background:#a8a8a8;"></div>
<div class="t" style="left:1047.9px;top:473.2px;font-size:11px;color:#000;font-family:'Liberation Sans',sans-serif;transform:scaleX(1.115);transform-origin:0 0;">Current-</div>
<div class="t" style="left:1056.6px;top:489.0px;font-size:11px;color:#000;font-family:'Liberation Sans',sans-serif;transform:scaleX(0.944);transform-origin:0 0;">Frame</div>
<div class="t" style="left:1108.1px;top:473.2px;font-size:11px;color:#000;font-family:'Liberation Sans',sans-serif;transform:scaleX(0.985);transform-origin:0 0;">Luminous</div>
<div class="t" style="left:1107.8px;top:489.0px;font-size:11px;color:#000;font-family:'Liberation Sans',sans-serif;transform:scaleX(1.073);transform-origin:0 0;">Intensity</div>
<div style="position:absolute;left:1048px;top:505px;width:46px;height:16px;background:#fff;border-top:1px solid #a0a0a0;border-left:1px solid #a0a0a0;border-right:1px solid #fff;border-bottom:1px solid #fff;box-shadow:inset 1px 1px 0 #696969, inset -1px -1px 0 #e3e3e3;"></div>
<div class="t" style="left:1051.0px;top:508.5px;font-size:11px;color:#000;font-family:'Liberation Sans',sans-serif;transform:scaleX(0.980);transform-origin:0 0;">282.0</div>
<div style="position:absolute;left:1105px;top:505px;width:53px;height:16px;background:#fff;border-top:1px solid #a0a0a0;border-left:1px solid #a0a0a0;border-right:1px solid #fff;border-bottom:1px solid #fff;box-shadow:inset 1px 1px 0 #696969, inset -1px -1px 0 #e3e3e3;"></div>
<div class="t" style="left:1108.0px;top:508.5px;font-size:11px;color:#000;font-family:'Liberation Sans',sans-serif;transform:scaleX(0.980);transform-origin:0 0;">2215.3</div>
<div style="position:absolute;left:1168px;top:474px;width:159px;height:18px;background:#f4f4f4;background:#f5f5f5;"></div>
<div style="position:absolute;left:1168px;top:474px;width:14px;height:16px;background:#f0f0f0;border-top:1px solid #fff;border-left:1px solid #fff;border-right:1px solid #696969;border-bottom:1px solid #696969;box-shadow:inset -1px -1px 0 #a0a0a0;"></div>
<svg style="position:absolute;left:1168px;top:474px" width="17" height="18"><path d="M5.5 9 L10 5 L10 13 Z" fill="#000"/></svg>
<div style="position:absolute;left:1185px;top:474px;width:14px;height:16px;background:#f0f0f0;border-top:1px solid #fff;border-left:1px solid #fff;border-right:1px solid #696969;border-bottom:1px solid #696969;box-shadow:inset -1px -1px 0 #a0a0a0;"></div>
<div style="position:absolute;left:1310px;top:474px;width:15px;height:16px;background:#f0f0f0;border-top:1px solid #fff;border-left:1px solid #fff;border-right:1px solid #696969;border-bottom:1px solid #696969;box-shadow:inset -1px -1px 0 #a0a0a0;"></div>
<svg style="position:absolute;left:1310px;top:474px" width="17" height="18"><path d="M11.5 9 L7 5 L7 13 Z" fill="#000"/></svg>
<div style="position:absolute;left:1168px;top:500px;width:39px;height:22px;background:#f0f0f0;border-top:1px solid #fff;border-left:1px solid #fff;border-right:1px solid #696969;border-bottom:1px solid #696969;box-shadow:inset -1px -1px 0 #a0a0a0;"></div>
<div class="t" style="left:1171.1px;top:506.5px;font-size:11px;color:#000;font-family:'Liberation Sans',sans-serif;transform:scaleX(1.000);transform-origin:0 0;">-10Sec</div>
<div style="position:absolute;left:1212px;top:500px;width:31px;height:22px;background:#f0f0f0;border-top:1px solid #fff;border-left:1px solid #fff;border-right:1px solid #696969;border-bottom:1px solid #696969;box-shadow:inset -1px -1px 0 #a0a0a0;"></div>
<div class="t" style="left:1214.1px;top:506.5px;font-size:11px;color:#000;font-family:'Liberation Sans',sans-serif;transform:scaleX(1.000);transform-origin:0 0;">-1Sec</div>
<div style="position:absolute;left:1248px;top:500px;width:32px;height:22px;background:#f0f0f0;border-top:1px solid #fff;border-left:1px solid #fff;border-right:1px solid #696969;border-bottom:1px solid #696969;box-shadow:inset -1px -1px 0 #a0a0a0;"></div>
<div class="t" style="left:1249.2px;top:506.5px;font-size:11px;color:#000;font-family:'Liberation Sans',sans-serif;transform:scaleX(1.000);transform-origin:0 0;">+1Sec</div>
<div style="position:absolute;left:1286px;top:500px;width:39px;height:22px;background:#f0f0f0;border-top:1px solid #fff;border-left:1px solid #fff;border-right:1px solid #696969;border-bottom:1px solid #696969;box-shadow:inset -1px -1px 0 #a0a0a0;"></div>
<div class="t" style="left:1287.7px;top:506.5px;font-size:11px;color:#000;font-family:'Liberation Sans',sans-serif;transform:scaleX(1.000);transform-origin:0 0;">+10Sec</div>
<div class="t" style="left:1333.3px;top:480.2px;font-size:11px;color:#000;font-family:'Liberation Sans',sans-serif;transform:scaleX(1.090);transform-origin:0 0;">Scale</div>
<div style="position:absolute;left:1372px;top:472px;width:20px;height:17px;background:#fff;border-top:1px solid #a0a0a0;border-left:1px solid #a0a0a0;border-right:1px solid #fff;border-bottom:1px solid #fff;box-shadow:inset 1px 1px 0 #696969, inset -1px -1px 0 #e3e3e3;"></div>
<div class="t" style="left:1374.0px;top:476.0px;font-size:11px;color:#000;font-family:'Liberation Sans',sans-serif;">4</div>
<div style="position:absolute;left:1396px;top:471px;width:15px;height:9px;background:#f0f0f0;border-top:1px solid #fff;border-left:1px solid #fff;border-right:1px solid #696969;border-bottom:1px solid #696969;box-shadow:inset -1px -1px 0 #a0a0a0;"></div>
<div style="position:absolute;left:1396px;top:483px;width:15px;height:9px;background:#f0f0f0;border-top:1px solid #fff;border-left:1px solid #fff;border-right:1px solid #696969;border-bottom:1px solid #696969;box-shadow:inset -1px -1px 0 #a0a0a0;"></div>
<svg style="position:absolute;left:0;top:0;overflow:visible" width="1" height="1"><path d="M1401.1 478.0 L1407.1 478.0 L1404.1 474.5 Z" fill="#a0a0a0"/></svg>
<svg style="position:absolute;left:0;top:0;overflow:visible" width="1" height="1"><path d="M1401.1 487.15 L1407.1 487.15 L1404.1 490.65 Z" fill="#a0a0a0"/></svg>
<div class="t" style="left:1336.3px;top:504.7px;font-size:11px;color:#000;font-family:'Liberation Sans',sans-serif;transform:scaleX(0.993);transform-origin:0 0;">Radius</div>
<div style="position:absolute;left:1372px;top:505px;width:20px;height:16px;background:#fff;border-top:1px solid #a0a0a0;border-left:1px solid #a0a0a0;border-right:1px solid #fff;border-bottom:1px solid #fff;box-shadow:inset 1px 1px 0 #696969, inset -1px -1px 0 #e3e3e3;"></div>
<div class="t" style="left:1374.0px;top:508.5px;font-size:11px;color:#000;font-family:'Liberation Sans',sans-serif;">2</div>
<div style="position:absolute;left:1396px;top:504px;width:15px;height:9px;background:#f0f0f0;border-top:1px solid #fff;border-left:1px solid #fff;border-right:1px solid #696969;border-bottom:1px solid #696969;box-shadow:inset -1px -1px 0 #a0a0a0;"></div>
<div style="position:absolute;left:1396px;top:516px;width:15px;height:9px;background:#f0f0f0;border-top:1px solid #fff;border-left:1px solid #fff;border-right:1px solid #696969;border-bottom:1px solid #696969;box-shadow:inset -1px -1px 0 #a0a0a0;"></div>
<svg style="position:absolute;left:0;top:0;overflow:visible" width="1" height="1"><path d="M1401.1 510.8 L1407.1 510.8 L1404.1 507.3 Z" fill="#000"/></svg>
<svg style="position:absolute;left:0;top:0;overflow:visible" width="1" height="1"><path d="M1401.1 519.8 L1407.1 519.8 L1404.1 523.3 Z" fill="#000"/></svg>
<div style="position:absolute;left:1048px;top:533px;width:11px;height:11px;background:#fff;border-top:1px solid #a0a0a0;border-left:1px solid #a0a0a0;border-right:1px solid #fff;border-bottom:1px solid #fff;box-shadow:inset 1px 1px 0 #696969, inset -1px -1px 0 #e3e3e3;"></div>
<svg style="position:absolute;left:1048px;top:533px" width="13" height="13"><path d="M3 6 L5 9 L10 3.5" stroke="#000" stroke-width="2" fill="none"/></svg>
<div class="t" style="left:1065.9px;top:533.5px;font-size:11px;color:#000;font-family:'Liberation Sans',sans-serif;transform:scaleX(1.043);transform-origin:0 0;">Show Image of Clicked point</div>
<div style="position:absolute;left:1048px;top:549px;width:11px;height:11px;background:#fff;border-top:1px solid #a0a0a0;border-left:1px solid #a0a0a0;border-right:1px solid #fff;border-bottom:1px solid #fff;box-shadow:inset 1px 1px 0 #696969, inset -1px -1px 0 #e3e3e3;"></div>
<div class="t" style="left:1065.9px;top:549.5px;font-size:11px;color:#000;font-family:'Liberation Sans',sans-serif;transform:scaleX(1.037);transform-origin:0 0;">Reproduce Aperture Position</div>
<div style="position:absolute;left:1223px;top:532px;width:70px;height:22px;background:#f0f0f0;border-top:1px solid #fff;border-left:1px solid #fff;border-right:1px solid #696969;border-bottom:1px solid #696969;box-shadow:inset -1px -1px 0 #a0a0a0;"></div>
<div class="t" style="left:1229.5px;top:539.0px;font-size:11px;color:#000;font-family:'Liberation Sans',sans-serif;transform:scaleX(1.004);transform-origin:0 0;">Save Image</div>
<div style="position:absolute;left:1300px;top:532px;width:116px;height:22px;background:#f0f0f0;border-top:1px solid #fff;border-left:1px solid #fff;border-right:1px solid #696969;border-bottom:1px solid #696969;box-shadow:inset -1px -1px 0 #a0a0a0;"></div>
<div class="t" style="left:1311.5px;top:539.0px;font-size:11px;color:#000;font-family:'Liberation Sans',sans-serif;transform:scaleX(1.064);transform-origin:0 0;">Copy to ClipBoard</div>
<div style="position:absolute;left:1419px;top:473px;width:47px;height:80px;border:1px solid #a0a0a0;box-shadow:1px 1px 0 #fff, inset 1px 1px 0 #fff;"></div>
<div style="position:absolute;left:1425.0px;top:472px;width:37.0px;height:3px;background:#f0f0f0;"></div>
<div class="t" style="left:1426.0px;top:468.9px;font-size:11px;color:#000;font-family:'Liberation Sans',sans-serif;transform:scaleX(1.152);transform-origin:0 0;">Y Axis</div>
<div class="t" style="left:1424.7px;top:482.0px;font-size:11px;color:#000;font-family:'Liberation Sans',sans-serif;transform:scaleX(1.016);transform-origin:0 0;">Min</div>
<div class="t" style="left:1444.3px;top:482.0px;font-size:11px;color:#000;font-family:'Liberation Sans',sans-serif;transform:scaleX(0.962);transform-origin:0 0;">Max</div>
<div style="position:absolute;left:1423px;top:491px;width:15px;height:15px;background:#f0f0f0;border-top:1px solid #fff;border-left:1px solid #fff;border-right:1px solid #696969;border-bottom:1px solid #696969;box-shadow:inset -1px -1px 0 #a0a0a0;"></div>
<svg style="position:absolute;left:0;top:0;overflow:visible" width="1" height="1"><path d="M1427.15 501.5 L1435.15 501.5 L1431.15 497.0 Z" fill="#000"/></svg>
<div style="position:absolute;left:1423px;top:511px;width:15px;height:15px;background:#f0f0f0;border-top:1px solid #fff;border-left:1px solid #fff;border-right:1px solid #696969;border-bottom:1px solid #696969;box-shadow:inset -1px -1px 0 #a0a0a0;"></div>
<div style="position:absolute;left:1423px;top:532px;width:15px;height:14px;background:#f0f0f0;border-top:1px solid #fff;border-left:1px solid #fff;border-right:1px solid #696969;border-bottom:1px solid #696969;box-shadow:inset -1px -1px 0 #a0a0a0;"></div>
<svg style="position:absolute;left:0;top:0;overflow:visible" width="1" height="1"><path d="M1427.15 538.0 L1435.15 538.0 L1431.15 542.5 Z" fill="#000"/></svg>
<div style="position:absolute;left:1445px;top:491px;width:16px;height:15px;background:#f0f0f0;border-top:1px solid #fff;border-left:1px solid #fff;border-right:1px solid #696969;border-bottom:1px solid #696969;box-shadow:inset -1px -1px 0 #a0a0a0;"></div>
<svg style="position:absolute;left:0;top:0;overflow:visible" width="1" height="1"><path d="M1449.35 501.5 L1457.35 501.5 L1453.35 497.0 Z" fill="#000"/></svg>
<div style="position:absolute;left:1445px;top:511px;width:16px;height:15px;background:#f0f0f0;border-top:1px solid #fff;border-left:1px solid #fff;border-right:1px solid #696969;border-bottom:1px solid #696969;box-shadow:inset -1px -1px 0 #a0a0a0;"></div>
<div style="position:absolute;left:1445px;top:532px;width:16px;height:14px;background:#f0f0f0;border-top:1px solid #fff;border-left:1px solid #fff;border-right:1px solid #696969;border-bottom:1px solid #696969;box-shadow:inset -1px -1px 0 #a0a0a0;"></div>
<svg style="position:absolute;left:0;top:0;overflow:visible" width="1" height="1"><path d="M1449.35 538.0 L1457.35 538.0 L1453.35 542.5 Z" fill="#000"/></svg>
<div style="position:absolute;left:1470px;top:473px;width:58px;height:52px;border:1px solid #a0a0a0;box-shadow:1px 1px 0 #fff, inset 1px 1px 0 #fff;"></div>
<div style="position:absolute;left:1477.3px;top:472px;width:22.0px;height:3px;background:#f0f0f0;"></div>
<div class="t" style="left:1478.3px;top:468.9px;font-size:11px;color:#000;font-family:'Liberation Sans',sans-serif;transform:scaleX(0.961);transform-origin:0 0;">Line</div>
<div style="position:absolute;left:1478px;top:482px;width:11px;height:11px;background:#fff;border-top:1px solid #a0a0a0;border-left:1px solid #a0a0a0;border-right:1px solid #fff;border-bottom:1px solid #fff;box-shadow:inset 1px 1px 0 #696969, inset -1px -1px 0 #e3e3e3;"></div>
<svg style="position:absolute;left:1478px;top:482px" width="13" height="13"><path d="M3 6 L5 9 L10 3.5" stroke="#000" stroke-width="2" fill="none"/></svg>
<div class="t" style="left:1496.7px;top:482.5px;font-size:11px;color:#000;font-family:'Liberation Sans',sans-serif;transform:scaleX(1.107);transform-origin:0 0;">Axis</div>
<div style="position:absolute;left:1478px;top:497px;width:11px;height:11px;background:#fff;border-top:1px solid #a0a0a0;border-left:1px solid #a0a0a0;border-right:1px solid #fff;border-bottom:1px solid #fff;box-shadow:inset 1px 1px 0 #696969, inset -1px -1px 0 #e3e3e3;"></div>
<svg style="position:absolute;left:1478px;top:497px" width="13" height="13"><path d="M3 6 L5 9 L10 3.5" stroke="#000" stroke-width="2" fill="none"/></svg>
<div class="t" style="left:1496.7px;top:497.0px;font-size:11px;color:#000;font-family:'Liberation Sans',sans-serif;transform:scaleX(1.075);transform-origin:0 0;">Data</div>
<div style="position:absolute;left:1478px;top:508px;width:44px;height:12px;background:#f0f0f0;border-top:1px solid #fff;border-left:1px solid #fff;border-right:1px solid #696969;border-bottom:1px solid #696969;box-shadow:inset -1px -1px 0 #a0a0a0;"></div>
<div class="t" style="left:1485.0px;top:510.5px;font-size:11px;color:#000;font-family:'Liberation Sans',sans-serif;transform:scaleX(1.047);transform-origin:0 0;">Hilight</div>
<div style="position:absolute;left:1470px;top:532px;width:63px;height:24px;background:#f0f0f0;border-top:1px solid #fff;border-left:1px solid #fff;border-right:1px solid #696969;border-bottom:1px solid #696969;box-shadow:inset -1px -1px 0 #a0a0a0;"></div>
<div class="t" style="left:1474.0px;top:540.0px;font-size:11px;color:#000;font-family:'Liberation Sans',sans-serif;transform:scaleX(1.059);transform-origin:0 0;">[3D] Image</div>
<div style="position:absolute;left:1534px;top:473px;width:54px;height:52px;border:1px solid #a0a0a0;box-shadow:1px 1px 0 #fff, inset 1px 1px 0 #fff;"></div>
<div style="position:absolute;left:1541.2px;top:472px;width:30.0px;height:3px;background:#f0f0f0;"></div>
<div class="t" style="left:1542.2px;top:469.7px;font-size:11px;color:#000;font-family:'Liberation Sans',sans-serif;transform:scaleX(0.996);transform-origin:0 0;">Width</div>
<svg style="position:absolute;left:1543px;top:486px" width="12" height="12"><circle cx="6" cy="6" r="5.2" fill="#fff" stroke="#f4f4f4" stroke-width="1"/><path d="M2.3 9.7 A5.2 5.2 0 0 1 9.7 2.3" stroke="#a0a0a0" stroke-width="1.1" fill="none"/><path d="M3.0 9.0 A4.2 4.2 0 0 1 9.0 3.0" stroke="#696969" stroke-width="1" fill="none"/></svg>
<div class="t" style="left:1560.6px;top:487.2px;font-size:11px;color:#000;font-family:'Liberation Sans',sans-serif;transform:scaleX(0.941);transform-origin:0 0;">Part</div>
<svg style="position:absolute;left:1543px;top:507px" width="12" height="12"><circle cx="6" cy="6" r="5.2" fill="#fff" stroke="#f4f4f4" stroke-width="1"/><path d="M2.3 9.7 A5.2 5.2 0 0 1 9.7 2.3" stroke="#a0a0a0" stroke-width="1.1" fill="none"/><path d="M3.0 9.0 A4.2 4.2 0 0 1 9.0 3.0" stroke="#696969" stroke-width="1" fill="none"/><circle cx="6" cy="6" r="2" fill="#000"/></svg>
<div class="t" style="left:1560.6px;top:507.8px;font-size:11px;color:#000;font-family:'Liberation Sans',sans-serif;transform:scaleX(0.939);transform-origin:0 0;">Entire</div>
<div style="position:absolute;left:1596px;top:472px;width:141px;height:14px;background:#f0f0f0;border-top:1px solid #fff;border-left:1px solid #fff;border-right:1px solid #696969;border-bottom:1px solid #696969;box-shadow:inset -1px -1px 0 #a0a0a0;"></div>
<div class="t" style="left:1603.3px;top:474.5px;font-size:11px;color:#000;font-family:'Liberation Sans',sans-serif;transform:scaleX(1.059);transform-origin:0 0;">Correction for absorption</div>
<div style="position:absolute;left:1596px;top:491px;width:101px;height:15px;background:#f0f0f0;border-top:1px solid #fff;border-left:1px solid #fff;border-right:1px solid #696969;border-bottom:1px solid #696969;box-shadow:inset -1px -1px 0 #a0a0a0;"></div>
<div class="t" style="left:1606.5px;top:494.5px;font-size:11px;color:#000;font-family:'Liberation Sans',sans-serif;transform:scaleX(1.015);transform-origin:0 0;">Noise Reduction</div>
<div style="position:absolute;left:1702px;top:491px;width:35px;height:15px;background:#f0f0f0;border-top:1px solid #fff;border-left:1px solid #fff;border-right:1px solid #696969;border-bottom:1px solid #696969;box-shadow:inset -1px -1px 0 #a0a0a0;"></div>
<div class="t" style="left:1706.0px;top:493.5px;font-size:11px;color:#000;font-family:'Liberation Sans',sans-serif;transform:scaleX(1.009);transform-origin:0 0;">Reset</div>
<div style="position:absolute;left:1752px;top:472px;width:34px;height:22px;background:#f0f0f0;border-top:1px solid #fff;border-left:1px solid #fff;border-right:1px solid #696969;border-bottom:1px solid #696969;box-shadow:inset -1px -1px 0 #a0a0a0;"></div>
<div class="t" style="left:1756.5px;top:478.5px;font-size:11px;color:#000;font-family:'Liberation Sans',sans-serif;transform:scaleX(1.051);transform-origin:0 0;">close</div>
<div style="position:absolute;left:1595px;top:513px;width:11px;height:11px;background:#fff;border-top:1px solid #a0a0a0;border-left:1px solid #a0a0a0;border-right:1px solid #fff;border-bottom:1px solid #fff;box-shadow:inset 1px 1px 0 #696969, inset -1px -1px 0 #e3e3e3;"></div>
<svg style="position:absolute;left:1595px;top:513px" width="13" height="13"><path d="M3 6 L5 9 L10 3.5" stroke="#000" stroke-width="2" fill="none"/></svg>
<div class="t" style="left:1612.1px;top:513.0px;font-size:11px;color:#000;font-family:'Liberation Sans',sans-serif;transform:scaleX(0.944);transform-origin:0 0;">Information</div>
<div style="position:absolute;left:1694px;top:522px;width:93px;height:33px;border:1px solid #a0a0a0;box-shadow:1px 1px 0 #fff, inset 1px 1px 0 #fff;"></div>
<div style="position:absolute;left:1700.6px;top:521px;width:35.0px;height:3px;background:#f0f0f0;"></div>
<div class="t" style="left:1701.6px;top:518.0px;font-size:11px;color:#000;font-family:'Liberation Sans',sans-serif;transform:scaleX(1.037);transform-origin:0 0;">Object</div>
<div style="position:absolute;left:1742px;top:515px;width:34px;height:10px;background:#f0f0f0;"></div>
<div style="position:absolute;left:1745px;top:510px;width:11px;height:11px;background:#fff;border-top:1px solid #a0a0a0;border-left:1px solid #a0a0a0;border-right:1px solid #fff;border-bottom:1px solid #fff;box-shadow:inset 1px 1px 0 #696969, inset -1px -1px 0 #e3e3e3;"></div>
<svg style="position:absolute;left:1745px;top:510px" width="13" height="13"><path d="M3 6 L5 9 L10 3.5" stroke="#000" stroke-width="2" fill="none"/></svg>
<div class="t" style="left:1761.6px;top:510.5px;font-size:11px;color:#000;font-family:'Liberation Sans',sans-serif;transform:scaleX(1.000);transform-origin:0 0;">ID</div>
<div style="position:absolute;left:1700px;top:533px;width:17px;height:15px;background:#f8f8f8;border-top:1px solid #696969;border-left:1px solid #696969;border-right:1px solid #fff;border-bottom:1px solid #fff;box-shadow:inset 1px 1px 0 #a0a0a0;"></div>
<div class="t" style="left:1706.8px;top:536.5px;font-size:11px;color:#000;font-family:'Liberation Sans',sans-serif;">A</div>
<div style="position:absolute;left:1722px;top:533px;width:17px;height:15px;background:#f8f8f8;border-top:1px solid #696969;border-left:1px solid #696969;border-right:1px solid #fff;border-bottom:1px solid #fff;box-shadow:inset 1px 1px 0 #a0a0a0;"></div>
<div class="t" style="left:1728.8px;top:536.5px;font-size:11px;color:#000;font-family:'Liberation Sans',sans-serif;">B</div>
<div style="position:absolute;left:1744px;top:533px;width:17px;height:15px;background:#f8f8f8;border-top:1px solid #696969;border-left:1px solid #696969;border-right:1px solid #fff;border-bottom:1px solid #fff;box-shadow:inset 1px 1px 0 #a0a0a0;"></div>
<div class="t" style="left:1750.5px;top:536.5px;font-size:11px;color:#000;font-family:'Liberation Sans',sans-serif;">C</div>
<div style="position:absolute;left:1766px;top:533px;width:15px;height:15px;background:#f0f0f0;border-top:1px solid #fff;border-left:1px solid #fff;border-right:1px solid #696969;border-bottom:1px solid #696969;box-shadow:inset -1px -1px 0 #a0a0a0;"></div>
<div class="t" style="left:1771.4px;top:536.5px;font-size:11px;color:#000;font-family:'Liberation Sans',sans-serif;">L</div>
<div style="position:absolute;left:1282px;top:565px;width:117px;height:24px;overflow:hidden;">
</div>
<div style="position:absolute;left:1280px;top:564px;width:119px;height:24px;background:#f0f0f0;border-top:1px solid #fff;border-left:1px solid #fff;border-right:1px solid #696969;border-bottom:1px solid #696969;box-shadow:inset -1px -1px 0 #a0a0a0;"></div>
<div style="position:absolute;left:1281px;top:565px;width:118px;height:24px;overflow:hidden;"><div class="t" style="left:-3px;top:4.2px;font-size:14px;font-weight:bold;color:#000030;font-family:'Liberation Sans',sans-serif;transform:scaleX(0.953);transform-origin:0 0;">Lunar Identification</div></div>
<div style="position:absolute;left:1410px;top:564px;width:167px;height:24px;background:#f0f0f0;border-top:1px solid #fff;border-left:1px solid #fff;border-right:1px solid #696969;border-bottom:1px solid #696969;box-shadow:inset -1px -1px 0 #a0a0a0;"></div>
<div class="t" style="left:1428.2px;top:568.7px;font-size:14px;color:#000;font-family:'Liberation Sans',sans-serif;font-weight:bold;transform:scaleX(1.012);transform-origin:0 0;">Diffraction Analysis</div>
<div style="position:absolute;left:1584px;top:564px;width:103px;height:24px;background:#f0f0f0;border-top:1px solid #fff;border-left:1px solid #fff;border-right:1px solid #696969;border-bottom:1px solid #696969;box-shadow:inset -1px -1px 0 #a0a0a0;"></div>
<div class="t" style="left:1596.5px;top:568.7px;font-size:14px;color:#000030;font-family:'Liberation Sans',sans-serif;font-weight:bold;transform:scaleX(0.953);transform-origin:0 0;">Make Report</div>
<div style="position:absolute;left:1048px;top:625px;width:734px;height:88px;border:1px solid #a0a0a0;box-shadow:1px 1px 0 #fff, inset 1px 1px 0 #fff;"></div>
<div style="position:absolute;left:1054.4px;top:624px;width:67.0px;height:3px;background:#f0f0f0;"></div>
<div class="t" style="left:1055.4px;top:620.5px;font-size:11px;color:#000;font-family:'Liberation Sans',sans-serif;transform:scaleX(1.085);transform-origin:0 0;">S/N vs Error</div>
<div class="t" style="left:1057.1px;top:636.0px;font-size:13px;color:#000;font-family:'Liberation Sans',sans-serif;font-weight:bold;transform:scaleX(1.000);transform-origin:0 0;">S/N (Full drop)</div>
<div style="position:absolute;left:1161px;top:633px;width:53px;height:23px;background:#fff;border-top:1px solid #a0a0a0;border-left:1px solid #a0a0a0;border-right:1px solid #fff;border-bottom:1px solid #fff;box-shadow:inset 1px 1px 0 #696969, inset -1px -1px 0 #e3e3e3;"></div>
<div class="t" style="left:1167.0px;top:637.0px;font-size:15px;color:#0000ff;font-family:'Liberation Sans',sans-serif;font-weight:bold;transform:scaleX(0.959);transform-origin:0 0;">4.8</div>
<div class="t" style="left:1241.0px;top:636.0px;font-size:13px;color:#000;font-family:'Liberation Sans',sans-serif;font-weight:bold;transform:scaleX(0.923);transform-origin:0 0;">S/N</div>
<div style="position:absolute;left:1272px;top:632px;width:46px;height:23px;background:#fff;border-top:1px solid #a0a0a0;border-left:1px solid #a0a0a0;border-right:1px solid #fff;border-bottom:1px solid #fff;box-shadow:inset 1px 1px 0 #696969, inset -1px -1px 0 #e3e3e3;"></div>
<div class="t" style="left:1275.0px;top:636.5px;font-size:14px;color:#ff0000;font-family:'Liberation Sans',sans-serif;font-weight:bold;transform:scaleX(1.028);transform-origin:0 0;">0.8</div>
<div class="t" style="left:1328.2px;top:635.2px;font-size:13px;color:#000;font-family:'Liberation Sans',sans-serif;font-weight:bold;transform:scaleX(1.032);transform-origin:0 0;">expected on</div>
<div style="position:absolute;left:1416px;top:632px;width:46px;height:23px;background:#fff;border-top:1px solid #a0a0a0;border-left:1px solid #a0a0a0;border-right:1px solid #fff;border-bottom:1px solid #fff;box-shadow:inset 1px 1px 0 #696969, inset -1px -1px 0 #e3e3e3;"></div>
<div class="t" style="left:1419.0px;top:636.5px;font-size:14px;color:#000;font-family:'Liberation Sans',sans-serif;font-weight:bold;transform:scaleX(1.028);transform-origin:0 0;">0.2</div>
<div class="t" style="left:1472.4px;top:635.2px;font-size:13px;color:#000;font-family:'Liberation Sans',sans-serif;font-weight:bold;transform:scaleX(1.016);transform-origin:0 0;">Mag drop</div>
<div class="t" style="left:1568.6px;top:635.2px;font-size:13px;color:#000;font-family:'Liberation Sans',sans-serif;font-weight:bold;transform:scaleX(1.021);transform-origin:0 0;">Frame exposure</div>
<div style="position:absolute;left:1689px;top:632px;width:45px;height:23px;background:#fff;border-top:1px solid #a0a0a0;border-left:1px solid #a0a0a0;border-right:1px solid #fff;border-bottom:1px solid #fff;box-shadow:inset 1px 1px 0 #696969, inset -1px -1px 0 #e3e3e3;"></div>
<div class="t" style="left:1692.0px;top:636.5px;font-size:14px;color:#000;font-family:'Liberation Sans',sans-serif;font-weight:bold;transform:scaleX(0.985);transform-origin:0 0;">338</div>
<div class="t" style="left:1744.6px;top:635.2px;font-size:13px;color:#000;font-family:'Liberation Sans',sans-serif;font-weight:bold;transform:scaleX(0.974);transform-origin:0 0;">msec</div>
<div class="t" style="left:1056.6px;top:667.5px;font-size:13px;color:#000;font-family:'Liberation Sans',sans-serif;font-weight:bold;transform:scaleX(0.995);transform-origin:0 0;">Fresnel</div>
<div class="t" style="left:1056.6px;top:683.7px;font-size:13px;color:#000;font-family:'Liberation Sans',sans-serif;font-weight:bold;transform:scaleX(0.997);transform-origin:0 0;">Number</div>
<div style="position:absolute;left:1112px;top:672px;width:46px;height:23px;background:#fff;border-top:1px solid #a0a0a0;border-left:1px solid #a0a0a0;border-right:1px solid #fff;border-bottom:1px solid #fff;box-shadow:inset 1px 1px 0 #696969, inset -1px -1px 0 #e3e3e3;"></div>
<div class="t" style="left:1115.0px;top:676.5px;font-size:14px;color:#000;font-family:'Liberation Sans',sans-serif;font-weight:bold;transform:scaleX(0.977);transform-origin:0 0;">12142</div>
<div class="t" style="left:1176.6px;top:667.5px;font-size:13px;color:#000;font-family:'Liberation Sans',sans-serif;font-weight:bold;transform:scaleX(1.028);transform-origin:0 0;">Lower Limit</div>
<div class="t" style="left:1184.2px;top:683.7px;font-size:13px;color:#000;font-family:'Liberation Sans',sans-serif;font-weight:bold;transform:scaleX(1.013);transform-origin:0 0;">for detect</div>
<div style="position:absolute;left:1257px;top:672px;width:53px;height:23px;background:#fff;border-top:1px solid #a0a0a0;border-left:1px solid #a0a0a0;border-right:1px solid #fff;border-bottom:1px solid #fff;box-shadow:inset 1px 1px 0 #696969, inset -1px -1px 0 #e3e3e3;"></div>
<div class="t" style="left:1259.0px;top:676.5px;font-size:14px;color:#0000ff;font-family:'Liberation Sans',sans-serif;font-weight:bold;transform:scaleX(0.964);transform-origin:0 0;">5101</div>
<div class="t" style="left:1312.4px;top:674.0px;font-size:13px;color:#000;font-family:'Liberation Sans',sans-serif;font-weight:bold;transform:scaleX(0.992);transform-origin:0 0;">msec</div>
<div class="t" style="left:1360.5px;top:668.8px;font-size:13px;color:#000;font-family:'Liberation Sans',sans-serif;font-weight:bold;transform:scaleX(1.013);transform-origin:0 0;">Predicted</div>
<div class="t" style="left:1360.5px;top:684.3px;font-size:12px;color:#000;font-family:'Liberation Sans',sans-serif;transform:scaleX(1.049);transform-origin:0 0;font-weight:600;">Time Error</div>
<div style="position:absolute;left:1433px;top:672px;width:61px;height:23px;background:#fff;border-top:1px solid #a0a0a0;border-left:1px solid #a0a0a0;border-right:1px solid #fff;border-bottom:1px solid #fff;box-shadow:inset 1px 1px 0 #696969, inset -1px -1px 0 #e3e3e3;"></div>
<div class="t" style="left:1436.0px;top:676.5px;font-size:14px;color:#ff0000;font-family:'Liberation Sans',sans-serif;font-weight:bold;transform:scaleX(0.974);transform-origin:0 0;">611</div>
<div class="t" style="left:1496.8px;top:681.5px;font-size:13px;color:#000;font-family:'Liberation Sans',sans-serif;font-weight:bold;transform:scaleX(0.962);transform-origin:0 0;">msec</div>
<div class="t" style="left:1544.1px;top:667.5px;font-size:13px;color:#000;font-family:'Liberation Sans',sans-serif;font-weight:bold;transform:scaleX(0.999);transform-origin:0 0;">Expected Error for</div>
<div class="t" style="left:1544.1px;top:683.7px;font-size:13px;color:#000;font-family:'Liberation Sans',sans-serif;font-weight:bold;transform:scaleX(1.036);transform-origin:0 0;">Analyzing event time</div>
<div style="position:absolute;left:1689px;top:672px;width:45px;height:23px;background:#fff;border-top:1px solid #a0a0a0;border-left:1px solid #a0a0a0;border-right:1px solid #fff;border-bottom:1px solid #fff;box-shadow:inset 1px 1px 0 #696969, inset -1px -1px 0 #e3e3e3;"></div>
<div class="t" style="left:1692.0px;top:676.5px;font-size:14px;color:#000;font-family:'Liberation Sans',sans-serif;font-weight:bold;transform:scaleX(0.996);transform-origin:0 0;">2710</div>
<div class="t" style="left:1741.6px;top:681.5px;font-size:13px;color:#000;font-family:'Liberation Sans',sans-serif;font-weight:bold;transform:scaleX(0.968);transform-origin:0 0;">msec</div>
</body></html>
